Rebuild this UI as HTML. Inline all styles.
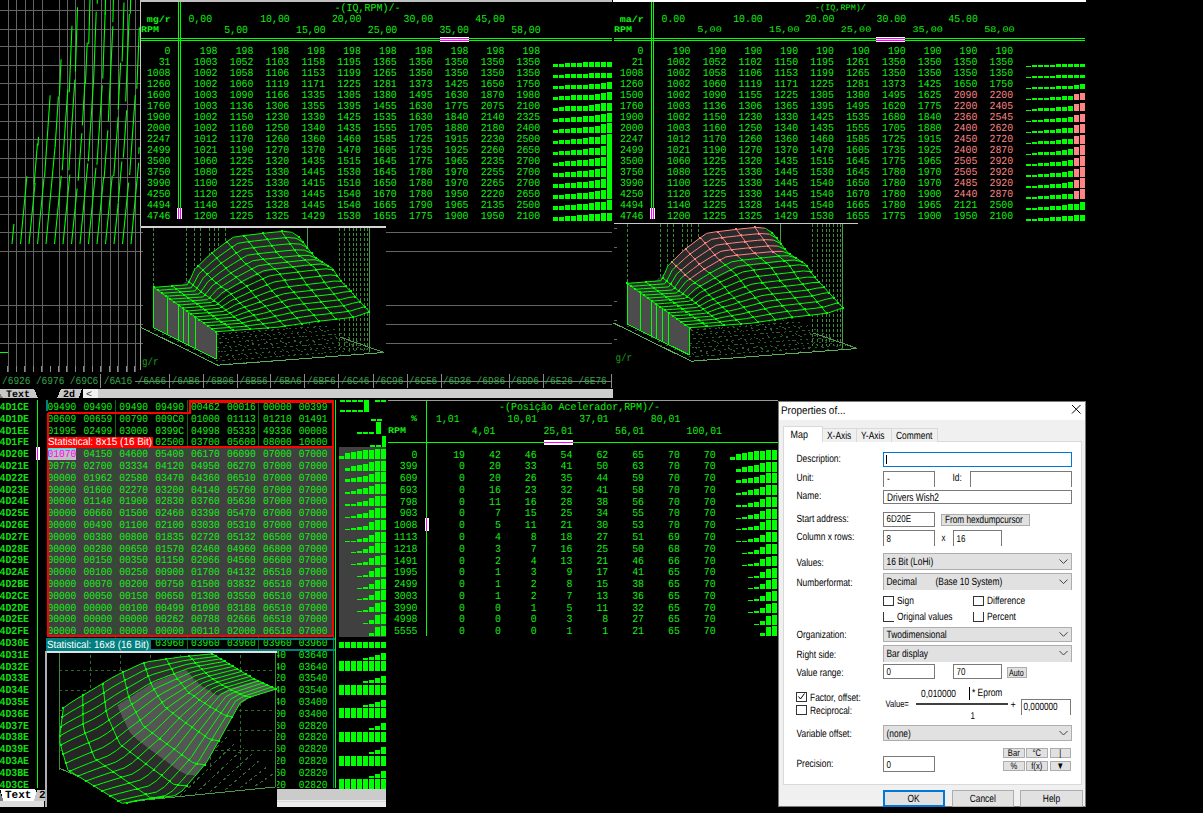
<!DOCTYPE html>
<html><head><meta charset="utf-8"><style>
html,body{margin:0;padding:0;background:#000;width:1203px;height:813px;overflow:hidden}
#root{position:relative;width:1203px;height:813px;overflow:hidden;background:#000}
svg{position:absolute;left:0;top:0}
text.m{font-family:"Liberation Mono",monospace;white-space:pre}
text.s{font-family:"Liberation Sans",sans-serif;white-space:pre}
.d{position:absolute;font-family:"Liberation Sans",sans-serif;font-size:11px;color:#000;white-space:nowrap;line-height:1}
</style></head><body><div id="root">
<svg width="1203" height="813" viewBox="0 0 1203 813" shape-rendering="crispEdges" text-rendering="geometricPrecision">
<line x1="8.5" y1="0" x2="8.5" y2="373" stroke="#646464" stroke-width="1" />
<line x1="16.5" y1="0" x2="16.5" y2="373" stroke="#646464" stroke-width="1" />
<line x1="25.5" y1="0" x2="25.5" y2="373" stroke="#646464" stroke-width="1" />
<line x1="33.5" y1="0" x2="33.5" y2="373" stroke="#646464" stroke-width="1" />
<line x1="42.5" y1="0" x2="42.5" y2="373" stroke="#646464" stroke-width="1" />
<line x1="59.5" y1="0" x2="59.5" y2="373" stroke="#646464" stroke-width="1" />
<line x1="67.5" y1="0" x2="67.5" y2="373" stroke="#646464" stroke-width="1" />
<line x1="75.5" y1="0" x2="75.5" y2="373" stroke="#646464" stroke-width="1" />
<line x1="84.5" y1="0" x2="84.5" y2="373" stroke="#646464" stroke-width="1" />
<line x1="92.5" y1="0" x2="92.5" y2="373" stroke="#646464" stroke-width="1" />
<line x1="101.5" y1="0" x2="101.5" y2="373" stroke="#646464" stroke-width="1" />
<line x1="110.5" y1="0" x2="110.5" y2="373" stroke="#646464" stroke-width="1" />
<line x1="118.5" y1="0" x2="118.5" y2="373" stroke="#646464" stroke-width="1" />
<line x1="127.5" y1="0" x2="127.5" y2="373" stroke="#646464" stroke-width="1" />
<line x1="135.5" y1="0" x2="135.5" y2="373" stroke="#646464" stroke-width="1" />
<line x1="0" y1="10.5" x2="612" y2="10.5" stroke="#646464" stroke-width="1" />
<line x1="0" y1="29.5" x2="612" y2="29.5" stroke="#646464" stroke-width="1" />
<line x1="0" y1="46.5" x2="612" y2="46.5" stroke="#646464" stroke-width="1" />
<line x1="0" y1="65.5" x2="612" y2="65.5" stroke="#646464" stroke-width="1" />
<line x1="0" y1="83.5" x2="612" y2="83.5" stroke="#646464" stroke-width="1" />
<line x1="0" y1="104.5" x2="612" y2="104.5" stroke="#646464" stroke-width="1" />
<line x1="0" y1="121.5" x2="612" y2="121.5" stroke="#646464" stroke-width="1" />
<line x1="0" y1="139.5" x2="612" y2="139.5" stroke="#646464" stroke-width="1" />
<line x1="0" y1="158.5" x2="612" y2="158.5" stroke="#646464" stroke-width="1" />
<line x1="0" y1="177.5" x2="612" y2="177.5" stroke="#646464" stroke-width="1" />
<line x1="0" y1="196.5" x2="612" y2="196.5" stroke="#646464" stroke-width="1" />
<line x1="0" y1="214.5" x2="612" y2="214.5" stroke="#646464" stroke-width="1" />
<line x1="0" y1="232.5" x2="612" y2="232.5" stroke="#646464" stroke-width="1" />
<line x1="0" y1="251.5" x2="612" y2="251.5" stroke="#646464" stroke-width="1" />
<line x1="0" y1="305.5" x2="612" y2="305.5" stroke="#646464" stroke-width="1" />
<line x1="0" y1="324.5" x2="612" y2="324.5" stroke="#646464" stroke-width="1" />
<line x1="0" y1="343.5" x2="612" y2="343.5" stroke="#646464" stroke-width="1" />
<g stroke="#00ff00" stroke-width="1.1" shape-rendering="geometricPrecision">
<line x1="12" y1="244" x2="13.93" y2="224.05"/>
<line x1="20.5" y1="244" x2="26.9" y2="176.27"/>
<line x1="29" y1="244" x2="35.11" y2="182.96"/>
<line x1="34.11" y1="184.5" x2="37.45" y2="143.44"/>
<line x1="37.95" y1="145.65" x2="38.49" y2="136.9"/>
<line x1="37.5" y1="244" x2="44.02" y2="178.24"/>
<line x1="44.52" y1="177.17" x2="50.16" y2="95.3"/>
<line x1="46" y1="244" x2="55.17" y2="145.48"/>
<line x1="55.17" y1="146.15" x2="58.42" y2="96.38"/>
<line x1="59.42" y1="95.51" x2="61.06" y2="59.2"/>
<line x1="54.5" y1="244" x2="61.23" y2="175.82"/>
<line x1="62.23" y1="170.21" x2="67.77" y2="89.62"/>
<line x1="69.27" y1="92.34" x2="71.96" y2="25.71"/>
<line x1="63" y1="244" x2="69.84" y2="174.57"/>
<line x1="68.84" y1="170.23" x2="74.9" y2="79.54"/>
<line x1="75.4" y1="71.57" x2="77.53" y2="7.2"/>
<line x1="71.5" y1="244" x2="77.11" y2="188.47"/>
<line x1="78.11" y1="180.78" x2="81.87" y2="133.13"/>
<line x1="82.37" y1="125.48" x2="84.94" y2="81.77"/>
<line x1="85.44" y1="83.18" x2="87.22" y2="42.45"/>
<line x1="88.72" y1="44.29" x2="90.01" y2="-2"/>
<line x1="80" y1="244" x2="87.79" y2="163.19"/>
<line x1="88.29" y1="161.35" x2="93.5" y2="81.81"/>
<line x1="93.5" y1="83.66" x2="96.23" y2="11.62"/>
<line x1="97.23" y1="3.68" x2="97.35" y2="-2"/>
<line x1="88.5" y1="244" x2="95.91" y2="167.75"/>
<line x1="96.91" y1="164.71" x2="102.23" y2="85.14"/>
<line x1="102.73" y1="78.51" x2="105.19" y2="12.18"/>
<line x1="105.19" y1="14.73" x2="105.56" y2="-2"/>
<line x1="97" y1="244" x2="103.57" y2="177.72"/>
<line x1="104.07" y1="178.5" x2="107.83" y2="130.25"/>
<line x1="108.33" y1="121.36" x2="112.86" y2="26.12"/>
<line x1="112.86" y1="22.16" x2="113.44" y2="-2"/>
<line x1="114.94" y1="0.07" x2="114.98" y2="-2"/>
<line x1="105.5" y1="244" x2="112.26" y2="175.51"/>
<line x1="113.76" y1="175.99" x2="118.19" y2="116.73"/>
<line x1="118.19" y1="109.6" x2="120.64" y2="62.82"/>
<line x1="122.14" y1="61.5" x2="124.03" y2="2.44"/>
<line x1="114" y1="244" x2="118.27" y2="202.84"/>
<line x1="118.27" y1="201.95" x2="121.84" y2="161.44"/>
<line x1="123.34" y1="157.6" x2="126.67" y2="110.19"/>
<line x1="125.67" y1="101.4" x2="129.31" y2="14.09"/>
<line x1="130.31" y1="13.73" x2="130.66" y2="-2"/>
<line x1="122.5" y1="244" x2="128.64" y2="182.63"/>
<line x1="129.64" y1="175.08" x2="135.3" y2="94.91"/>
<line x1="136.8" y1="88.73" x2="139.36" y2="27.36"/>
<line x1="131" y1="244" x2="138.64" y2="162.87"/>
<line x1="138.73" y1="153.68" x2="139.17" y2="147.09"/>
</g>
<line x1="0" y1="352.5" x2="8" y2="352.5" stroke="#00ff00" stroke-width="1" />
<line x1="140.5" y1="0" x2="140.5" y2="370" stroke="#c8c8c8" stroke-width="1" />
<rect x="140" y="0" width="472" height="226" fill="#000000" />
<rect x="612" y="0" width="474" height="226" fill="#000000" />
<line x1="140.5" y1="0" x2="140.5" y2="226" stroke="#c8c8c8" stroke-width="1" />
<rect x="140" y="0" width="472" height="2" fill="#c0c0c0" />
<line x1="178.5" y1="2" x2="178.5" y2="208" stroke="#00ff00" stroke-width="1" />
<line x1="180.5" y1="2" x2="180.5" y2="208" stroke="#00ff00" stroke-width="1" />
<line x1="141" y1="38.5" x2="612" y2="38.5" stroke="#00ff00" stroke-width="1" />
<line x1="141" y1="40.5" x2="612" y2="40.5" stroke="#00ff00" stroke-width="1" />
<text class="m" transform="translate(334.4,10.84) scale(0.9259259259259258,1)" text-anchor="start" font-size="10.8" fill="#12f012" >-(IQ,RPM)/-</text>
<text class="m" transform="translate(170.8,21.5) scale(1.1111111111111112,1)" text-anchor="end" font-size="9" fill="#12f012" font-weight="bold">mg/r</text>
<text class="m" transform="translate(141,32.08) scale(1.1627906976744187,1)" text-anchor="start" font-size="8.6" fill="#12f012" font-weight="bold">RPM</text>
<text class="m" transform="translate(188.5,21.64) scale(0.9104938271604939,1)" text-anchor="start" font-size="10.8" fill="#12f012" >0,00</text>
<text class="m" transform="translate(224.35,32.74) scale(0.9104938271604939,1)" text-anchor="start" font-size="10.8" fill="#12f012" >5,00</text>
<text class="m" transform="translate(260.2,21.64) scale(0.9104938271604939,1)" text-anchor="start" font-size="10.8" fill="#12f012" >10,00</text>
<text class="m" transform="translate(296.05,32.74) scale(0.9104938271604939,1)" text-anchor="start" font-size="10.8" fill="#12f012" >15,00</text>
<text class="m" transform="translate(331.9,21.64) scale(0.9104938271604939,1)" text-anchor="start" font-size="10.8" fill="#12f012" >20,00</text>
<text class="m" transform="translate(367.75,32.74) scale(0.9104938271604939,1)" text-anchor="start" font-size="10.8" fill="#12f012" >25,00</text>
<text class="m" transform="translate(403.6,21.64) scale(0.9104938271604939,1)" text-anchor="start" font-size="10.8" fill="#12f012" >30,00</text>
<text class="m" transform="translate(439.45,32.74) scale(0.9104938271604939,1)" text-anchor="start" font-size="10.8" fill="#12f012" >35,00</text>
<text class="m" transform="translate(475.3,21.64) scale(0.9104938271604939,1)" text-anchor="start" font-size="10.8" fill="#12f012" >45,00</text>
<text class="m" transform="translate(511.15,32.74) scale(0.9104938271604939,1)" text-anchor="start" font-size="10.8" fill="#12f012" >58,00</text>
<text class="m" transform="translate(170.5,54.24) scale(0.9104938271604939,1)" text-anchor="end" font-size="10.8" fill="#12f012" >0</text>
<text class="m" transform="translate(217.5,54.24) scale(0.9104938271604939,1)" text-anchor="end" font-size="10.8" fill="#12f012" >198</text>
<text class="m" transform="translate(253.35,54.24) scale(0.9104938271604939,1)" text-anchor="end" font-size="10.8" fill="#12f012" >198</text>
<text class="m" transform="translate(289.2,54.24) scale(0.9104938271604939,1)" text-anchor="end" font-size="10.8" fill="#12f012" >198</text>
<text class="m" transform="translate(325.05,54.24) scale(0.9104938271604939,1)" text-anchor="end" font-size="10.8" fill="#12f012" >198</text>
<text class="m" transform="translate(360.9,54.24) scale(0.9104938271604939,1)" text-anchor="end" font-size="10.8" fill="#12f012" >198</text>
<text class="m" transform="translate(396.75,54.24) scale(0.9104938271604939,1)" text-anchor="end" font-size="10.8" fill="#12f012" >198</text>
<text class="m" transform="translate(432.6,54.24) scale(0.9104938271604939,1)" text-anchor="end" font-size="10.8" fill="#12f012" >198</text>
<text class="m" transform="translate(468.45,54.24) scale(0.9104938271604939,1)" text-anchor="end" font-size="10.8" fill="#12f012" >198</text>
<text class="m" transform="translate(504.3,54.24) scale(0.9104938271604939,1)" text-anchor="end" font-size="10.8" fill="#12f012" >198</text>
<text class="m" transform="translate(540.15,54.24) scale(0.9104938271604939,1)" text-anchor="end" font-size="10.8" fill="#12f012" >198</text>
<text class="m" transform="translate(170.5,65.24) scale(0.9104938271604939,1)" text-anchor="end" font-size="10.8" fill="#12f012" >31</text>
<text class="m" transform="translate(217.5,65.24) scale(0.9104938271604939,1)" text-anchor="end" font-size="10.8" fill="#12f012" >1003</text>
<text class="m" transform="translate(253.35,65.24) scale(0.9104938271604939,1)" text-anchor="end" font-size="10.8" fill="#12f012" >1052</text>
<text class="m" transform="translate(289.2,65.24) scale(0.9104938271604939,1)" text-anchor="end" font-size="10.8" fill="#12f012" >1103</text>
<text class="m" transform="translate(325.05,65.24) scale(0.9104938271604939,1)" text-anchor="end" font-size="10.8" fill="#12f012" >1158</text>
<text class="m" transform="translate(360.9,65.24) scale(0.9104938271604939,1)" text-anchor="end" font-size="10.8" fill="#12f012" >1195</text>
<text class="m" transform="translate(396.75,65.24) scale(0.9104938271604939,1)" text-anchor="end" font-size="10.8" fill="#12f012" >1365</text>
<text class="m" transform="translate(432.6,65.24) scale(0.9104938271604939,1)" text-anchor="end" font-size="10.8" fill="#12f012" >1350</text>
<text class="m" transform="translate(468.45,65.24) scale(0.9104938271604939,1)" text-anchor="end" font-size="10.8" fill="#12f012" >1350</text>
<text class="m" transform="translate(504.3,65.24) scale(0.9104938271604939,1)" text-anchor="end" font-size="10.8" fill="#12f012" >1350</text>
<text class="m" transform="translate(540.15,65.24) scale(0.9104938271604939,1)" text-anchor="end" font-size="10.8" fill="#12f012" >1350</text>
<rect x="553" y="64" width="5" height="3" fill="#00ff00" />
<rect x="559" y="64" width="5" height="3" fill="#00ff00" />
<rect x="565" y="63" width="5" height="4" fill="#00ff00" />
<rect x="571" y="63" width="5" height="4" fill="#00ff00" />
<rect x="577" y="63" width="5" height="4" fill="#00ff00" />
<rect x="583" y="62" width="5" height="5" fill="#00ff00" />
<rect x="589" y="62" width="5" height="5" fill="#00ff00" />
<rect x="595" y="62" width="5" height="5" fill="#00ff00" />
<rect x="601" y="62" width="5" height="5" fill="#00ff00" />
<rect x="607" y="62" width="5" height="5" fill="#00ff00" />
<text class="m" transform="translate(170.5,76.24) scale(0.9104938271604939,1)" text-anchor="end" font-size="10.8" fill="#12f012" >1008</text>
<text class="m" transform="translate(217.5,76.24) scale(0.9104938271604939,1)" text-anchor="end" font-size="10.8" fill="#12f012" >1002</text>
<text class="m" transform="translate(253.35,76.24) scale(0.9104938271604939,1)" text-anchor="end" font-size="10.8" fill="#12f012" >1058</text>
<text class="m" transform="translate(289.2,76.24) scale(0.9104938271604939,1)" text-anchor="end" font-size="10.8" fill="#12f012" >1106</text>
<text class="m" transform="translate(325.05,76.24) scale(0.9104938271604939,1)" text-anchor="end" font-size="10.8" fill="#12f012" >1153</text>
<text class="m" transform="translate(360.9,76.24) scale(0.9104938271604939,1)" text-anchor="end" font-size="10.8" fill="#12f012" >1199</text>
<text class="m" transform="translate(396.75,76.24) scale(0.9104938271604939,1)" text-anchor="end" font-size="10.8" fill="#12f012" >1265</text>
<text class="m" transform="translate(432.6,76.24) scale(0.9104938271604939,1)" text-anchor="end" font-size="10.8" fill="#12f012" >1350</text>
<text class="m" transform="translate(468.45,76.24) scale(0.9104938271604939,1)" text-anchor="end" font-size="10.8" fill="#12f012" >1350</text>
<text class="m" transform="translate(504.3,76.24) scale(0.9104938271604939,1)" text-anchor="end" font-size="10.8" fill="#12f012" >1350</text>
<text class="m" transform="translate(540.15,76.24) scale(0.9104938271604939,1)" text-anchor="end" font-size="10.8" fill="#12f012" >1350</text>
<rect x="553" y="75" width="5" height="3" fill="#00ff00" />
<rect x="559" y="75" width="5" height="3" fill="#00ff00" />
<rect x="565" y="74" width="5" height="4" fill="#00ff00" />
<rect x="571" y="74" width="5" height="4" fill="#00ff00" />
<rect x="577" y="74" width="5" height="4" fill="#00ff00" />
<rect x="583" y="74" width="5" height="4" fill="#00ff00" />
<rect x="589" y="73" width="5" height="5" fill="#00ff00" />
<rect x="595" y="73" width="5" height="5" fill="#00ff00" />
<rect x="601" y="73" width="5" height="5" fill="#00ff00" />
<rect x="607" y="73" width="5" height="5" fill="#00ff00" />
<text class="m" transform="translate(170.5,87.24) scale(0.9104938271604939,1)" text-anchor="end" font-size="10.8" fill="#12f012" >1260</text>
<text class="m" transform="translate(217.5,87.24) scale(0.9104938271604939,1)" text-anchor="end" font-size="10.8" fill="#12f012" >1002</text>
<text class="m" transform="translate(253.35,87.24) scale(0.9104938271604939,1)" text-anchor="end" font-size="10.8" fill="#12f012" >1060</text>
<text class="m" transform="translate(289.2,87.24) scale(0.9104938271604939,1)" text-anchor="end" font-size="10.8" fill="#12f012" >1119</text>
<text class="m" transform="translate(325.05,87.24) scale(0.9104938271604939,1)" text-anchor="end" font-size="10.8" fill="#12f012" >1171</text>
<text class="m" transform="translate(360.9,87.24) scale(0.9104938271604939,1)" text-anchor="end" font-size="10.8" fill="#12f012" >1225</text>
<text class="m" transform="translate(396.75,87.24) scale(0.9104938271604939,1)" text-anchor="end" font-size="10.8" fill="#12f012" >1281</text>
<text class="m" transform="translate(432.6,87.24) scale(0.9104938271604939,1)" text-anchor="end" font-size="10.8" fill="#12f012" >1373</text>
<text class="m" transform="translate(468.45,87.24) scale(0.9104938271604939,1)" text-anchor="end" font-size="10.8" fill="#12f012" >1425</text>
<text class="m" transform="translate(504.3,87.24) scale(0.9104938271604939,1)" text-anchor="end" font-size="10.8" fill="#12f012" >1650</text>
<text class="m" transform="translate(540.15,87.24) scale(0.9104938271604939,1)" text-anchor="end" font-size="10.8" fill="#12f012" >1750</text>
<rect x="553" y="86" width="5" height="3" fill="#00ff00" />
<rect x="559" y="86" width="5" height="3" fill="#00ff00" />
<rect x="565" y="85" width="5" height="4" fill="#00ff00" />
<rect x="571" y="85" width="5" height="4" fill="#00ff00" />
<rect x="577" y="85" width="5" height="4" fill="#00ff00" />
<rect x="583" y="85" width="5" height="4" fill="#00ff00" />
<rect x="589" y="84" width="5" height="5" fill="#00ff00" />
<rect x="595" y="84" width="5" height="5" fill="#00ff00" />
<rect x="601" y="83" width="5" height="6" fill="#00ff00" />
<rect x="607" y="82" width="5" height="7" fill="#00ff00" />
<text class="m" transform="translate(170.5,98.24) scale(0.9104938271604939,1)" text-anchor="end" font-size="10.8" fill="#12f012" >1600</text>
<text class="m" transform="translate(217.5,98.24) scale(0.9104938271604939,1)" text-anchor="end" font-size="10.8" fill="#12f012" >1003</text>
<text class="m" transform="translate(253.35,98.24) scale(0.9104938271604939,1)" text-anchor="end" font-size="10.8" fill="#12f012" >1090</text>
<text class="m" transform="translate(289.2,98.24) scale(0.9104938271604939,1)" text-anchor="end" font-size="10.8" fill="#12f012" >1166</text>
<text class="m" transform="translate(325.05,98.24) scale(0.9104938271604939,1)" text-anchor="end" font-size="10.8" fill="#12f012" >1335</text>
<text class="m" transform="translate(360.9,98.24) scale(0.9104938271604939,1)" text-anchor="end" font-size="10.8" fill="#12f012" >1305</text>
<text class="m" transform="translate(396.75,98.24) scale(0.9104938271604939,1)" text-anchor="end" font-size="10.8" fill="#12f012" >1380</text>
<text class="m" transform="translate(432.6,98.24) scale(0.9104938271604939,1)" text-anchor="end" font-size="10.8" fill="#12f012" >1495</text>
<text class="m" transform="translate(468.45,98.24) scale(0.9104938271604939,1)" text-anchor="end" font-size="10.8" fill="#12f012" >1630</text>
<text class="m" transform="translate(504.3,98.24) scale(0.9104938271604939,1)" text-anchor="end" font-size="10.8" fill="#12f012" >1870</text>
<text class="m" transform="translate(540.15,98.24) scale(0.9104938271604939,1)" text-anchor="end" font-size="10.8" fill="#12f012" >1980</text>
<rect x="553" y="97" width="5" height="3" fill="#00ff00" />
<rect x="559" y="96" width="5" height="4" fill="#00ff00" />
<rect x="565" y="96" width="5" height="4" fill="#00ff00" />
<rect x="571" y="95" width="5" height="5" fill="#00ff00" />
<rect x="577" y="95" width="5" height="5" fill="#00ff00" />
<rect x="583" y="95" width="5" height="5" fill="#00ff00" />
<rect x="589" y="95" width="5" height="5" fill="#00ff00" />
<rect x="595" y="94" width="5" height="6" fill="#00ff00" />
<rect x="601" y="93" width="5" height="7" fill="#00ff00" />
<rect x="607" y="92" width="5" height="8" fill="#00ff00" />
<text class="m" transform="translate(170.5,109.24) scale(0.9104938271604939,1)" text-anchor="end" font-size="10.8" fill="#12f012" >1760</text>
<text class="m" transform="translate(217.5,109.24) scale(0.9104938271604939,1)" text-anchor="end" font-size="10.8" fill="#12f012" >1003</text>
<text class="m" transform="translate(253.35,109.24) scale(0.9104938271604939,1)" text-anchor="end" font-size="10.8" fill="#12f012" >1136</text>
<text class="m" transform="translate(289.2,109.24) scale(0.9104938271604939,1)" text-anchor="end" font-size="10.8" fill="#12f012" >1306</text>
<text class="m" transform="translate(325.05,109.24) scale(0.9104938271604939,1)" text-anchor="end" font-size="10.8" fill="#12f012" >1355</text>
<text class="m" transform="translate(360.9,109.24) scale(0.9104938271604939,1)" text-anchor="end" font-size="10.8" fill="#12f012" >1395</text>
<text class="m" transform="translate(396.75,109.24) scale(0.9104938271604939,1)" text-anchor="end" font-size="10.8" fill="#12f012" >1455</text>
<text class="m" transform="translate(432.6,109.24) scale(0.9104938271604939,1)" text-anchor="end" font-size="10.8" fill="#12f012" >1630</text>
<text class="m" transform="translate(468.45,109.24) scale(0.9104938271604939,1)" text-anchor="end" font-size="10.8" fill="#12f012" >1775</text>
<text class="m" transform="translate(504.3,109.24) scale(0.9104938271604939,1)" text-anchor="end" font-size="10.8" fill="#12f012" >2075</text>
<text class="m" transform="translate(540.15,109.24) scale(0.9104938271604939,1)" text-anchor="end" font-size="10.8" fill="#12f012" >2100</text>
<rect x="553" y="108" width="5" height="3" fill="#00ff00" />
<rect x="559" y="107" width="5" height="4" fill="#00ff00" />
<rect x="565" y="106" width="5" height="5" fill="#00ff00" />
<rect x="571" y="106" width="5" height="5" fill="#00ff00" />
<rect x="577" y="106" width="5" height="5" fill="#00ff00" />
<rect x="583" y="106" width="5" height="5" fill="#00ff00" />
<rect x="589" y="105" width="5" height="6" fill="#00ff00" />
<rect x="595" y="104" width="5" height="7" fill="#00ff00" />
<rect x="601" y="103" width="5" height="8" fill="#00ff00" />
<rect x="607" y="103" width="5" height="8" fill="#00ff00" />
<text class="m" transform="translate(170.5,120.24) scale(0.9104938271604939,1)" text-anchor="end" font-size="10.8" fill="#12f012" >1900</text>
<text class="m" transform="translate(217.5,120.24) scale(0.9104938271604939,1)" text-anchor="end" font-size="10.8" fill="#12f012" >1002</text>
<text class="m" transform="translate(253.35,120.24) scale(0.9104938271604939,1)" text-anchor="end" font-size="10.8" fill="#12f012" >1150</text>
<text class="m" transform="translate(289.2,120.24) scale(0.9104938271604939,1)" text-anchor="end" font-size="10.8" fill="#12f012" >1230</text>
<text class="m" transform="translate(325.05,120.24) scale(0.9104938271604939,1)" text-anchor="end" font-size="10.8" fill="#12f012" >1330</text>
<text class="m" transform="translate(360.9,120.24) scale(0.9104938271604939,1)" text-anchor="end" font-size="10.8" fill="#12f012" >1425</text>
<text class="m" transform="translate(396.75,120.24) scale(0.9104938271604939,1)" text-anchor="end" font-size="10.8" fill="#12f012" >1535</text>
<text class="m" transform="translate(432.6,120.24) scale(0.9104938271604939,1)" text-anchor="end" font-size="10.8" fill="#12f012" >1630</text>
<text class="m" transform="translate(468.45,120.24) scale(0.9104938271604939,1)" text-anchor="end" font-size="10.8" fill="#12f012" >1840</text>
<text class="m" transform="translate(504.3,120.24) scale(0.9104938271604939,1)" text-anchor="end" font-size="10.8" fill="#12f012" >2140</text>
<text class="m" transform="translate(540.15,120.24) scale(0.9104938271604939,1)" text-anchor="end" font-size="10.8" fill="#12f012" >2325</text>
<rect x="553" y="119" width="5" height="3" fill="#00ff00" />
<rect x="559" y="118" width="5" height="4" fill="#00ff00" />
<rect x="565" y="118" width="5" height="4" fill="#00ff00" />
<rect x="571" y="117" width="5" height="5" fill="#00ff00" />
<rect x="577" y="117" width="5" height="5" fill="#00ff00" />
<rect x="583" y="116" width="5" height="6" fill="#00ff00" />
<rect x="589" y="116" width="5" height="6" fill="#00ff00" />
<rect x="595" y="115" width="5" height="7" fill="#00ff00" />
<rect x="601" y="114" width="5" height="8" fill="#00ff00" />
<rect x="607" y="113" width="5" height="9" fill="#00ff00" />
<text class="m" transform="translate(170.5,131.24) scale(0.9104938271604939,1)" text-anchor="end" font-size="10.8" fill="#12f012" >2000</text>
<text class="m" transform="translate(217.5,131.24) scale(0.9104938271604939,1)" text-anchor="end" font-size="10.8" fill="#12f012" >1002</text>
<text class="m" transform="translate(253.35,131.24) scale(0.9104938271604939,1)" text-anchor="end" font-size="10.8" fill="#12f012" >1160</text>
<text class="m" transform="translate(289.2,131.24) scale(0.9104938271604939,1)" text-anchor="end" font-size="10.8" fill="#12f012" >1250</text>
<text class="m" transform="translate(325.05,131.24) scale(0.9104938271604939,1)" text-anchor="end" font-size="10.8" fill="#12f012" >1340</text>
<text class="m" transform="translate(360.9,131.24) scale(0.9104938271604939,1)" text-anchor="end" font-size="10.8" fill="#12f012" >1435</text>
<text class="m" transform="translate(396.75,131.24) scale(0.9104938271604939,1)" text-anchor="end" font-size="10.8" fill="#12f012" >1555</text>
<text class="m" transform="translate(432.6,131.24) scale(0.9104938271604939,1)" text-anchor="end" font-size="10.8" fill="#12f012" >1705</text>
<text class="m" transform="translate(468.45,131.24) scale(0.9104938271604939,1)" text-anchor="end" font-size="10.8" fill="#12f012" >1880</text>
<text class="m" transform="translate(504.3,131.24) scale(0.9104938271604939,1)" text-anchor="end" font-size="10.8" fill="#12f012" >2180</text>
<text class="m" transform="translate(540.15,131.24) scale(0.9104938271604939,1)" text-anchor="end" font-size="10.8" fill="#12f012" >2400</text>
<rect x="553" y="130" width="5" height="3" fill="#00ff00" />
<rect x="559" y="129" width="5" height="4" fill="#00ff00" />
<rect x="565" y="129" width="5" height="4" fill="#00ff00" />
<rect x="571" y="128" width="5" height="5" fill="#00ff00" />
<rect x="577" y="128" width="5" height="5" fill="#00ff00" />
<rect x="583" y="127" width="5" height="6" fill="#00ff00" />
<rect x="589" y="127" width="5" height="6" fill="#00ff00" />
<rect x="595" y="126" width="5" height="7" fill="#00ff00" />
<rect x="601" y="124" width="5" height="9" fill="#00ff00" />
<rect x="607" y="123" width="5" height="10" fill="#00ff00" />
<text class="m" transform="translate(170.5,142.24) scale(0.9104938271604939,1)" text-anchor="end" font-size="10.8" fill="#12f012" >2247</text>
<text class="m" transform="translate(217.5,142.24) scale(0.9104938271604939,1)" text-anchor="end" font-size="10.8" fill="#12f012" >1012</text>
<text class="m" transform="translate(253.35,142.24) scale(0.9104938271604939,1)" text-anchor="end" font-size="10.8" fill="#12f012" >1170</text>
<text class="m" transform="translate(289.2,142.24) scale(0.9104938271604939,1)" text-anchor="end" font-size="10.8" fill="#12f012" >1260</text>
<text class="m" transform="translate(325.05,142.24) scale(0.9104938271604939,1)" text-anchor="end" font-size="10.8" fill="#12f012" >1360</text>
<text class="m" transform="translate(360.9,142.24) scale(0.9104938271604939,1)" text-anchor="end" font-size="10.8" fill="#12f012" >1460</text>
<text class="m" transform="translate(396.75,142.24) scale(0.9104938271604939,1)" text-anchor="end" font-size="10.8" fill="#12f012" >1585</text>
<text class="m" transform="translate(432.6,142.24) scale(0.9104938271604939,1)" text-anchor="end" font-size="10.8" fill="#12f012" >1725</text>
<text class="m" transform="translate(468.45,142.24) scale(0.9104938271604939,1)" text-anchor="end" font-size="10.8" fill="#12f012" >1915</text>
<text class="m" transform="translate(504.3,142.24) scale(0.9104938271604939,1)" text-anchor="end" font-size="10.8" fill="#12f012" >2230</text>
<text class="m" transform="translate(540.15,142.24) scale(0.9104938271604939,1)" text-anchor="end" font-size="10.8" fill="#12f012" >2500</text>
<rect x="553" y="141" width="5" height="3" fill="#00ff00" />
<rect x="559" y="140" width="5" height="4" fill="#00ff00" />
<rect x="565" y="140" width="5" height="4" fill="#00ff00" />
<rect x="571" y="139" width="5" height="5" fill="#00ff00" />
<rect x="577" y="139" width="5" height="5" fill="#00ff00" />
<rect x="583" y="138" width="5" height="6" fill="#00ff00" />
<rect x="589" y="137" width="5" height="7" fill="#00ff00" />
<rect x="595" y="137" width="5" height="7" fill="#00ff00" />
<rect x="601" y="135" width="5" height="9" fill="#00ff00" />
<rect x="607" y="134" width="5" height="10" fill="#00ff00" />
<text class="m" transform="translate(170.5,153.24) scale(0.9104938271604939,1)" text-anchor="end" font-size="10.8" fill="#12f012" >2499</text>
<text class="m" transform="translate(217.5,153.24) scale(0.9104938271604939,1)" text-anchor="end" font-size="10.8" fill="#12f012" >1021</text>
<text class="m" transform="translate(253.35,153.24) scale(0.9104938271604939,1)" text-anchor="end" font-size="10.8" fill="#12f012" >1190</text>
<text class="m" transform="translate(289.2,153.24) scale(0.9104938271604939,1)" text-anchor="end" font-size="10.8" fill="#12f012" >1270</text>
<text class="m" transform="translate(325.05,153.24) scale(0.9104938271604939,1)" text-anchor="end" font-size="10.8" fill="#12f012" >1370</text>
<text class="m" transform="translate(360.9,153.24) scale(0.9104938271604939,1)" text-anchor="end" font-size="10.8" fill="#12f012" >1470</text>
<text class="m" transform="translate(396.75,153.24) scale(0.9104938271604939,1)" text-anchor="end" font-size="10.8" fill="#12f012" >1605</text>
<text class="m" transform="translate(432.6,153.24) scale(0.9104938271604939,1)" text-anchor="end" font-size="10.8" fill="#12f012" >1735</text>
<text class="m" transform="translate(468.45,153.24) scale(0.9104938271604939,1)" text-anchor="end" font-size="10.8" fill="#12f012" >1925</text>
<text class="m" transform="translate(504.3,153.24) scale(0.9104938271604939,1)" text-anchor="end" font-size="10.8" fill="#12f012" >2260</text>
<text class="m" transform="translate(540.15,153.24) scale(0.9104938271604939,1)" text-anchor="end" font-size="10.8" fill="#12f012" >2650</text>
<rect x="553" y="152" width="5" height="3" fill="#00ff00" />
<rect x="559" y="151" width="5" height="4" fill="#00ff00" />
<rect x="565" y="151" width="5" height="4" fill="#00ff00" />
<rect x="571" y="150" width="5" height="5" fill="#00ff00" />
<rect x="577" y="150" width="5" height="5" fill="#00ff00" />
<rect x="583" y="149" width="5" height="6" fill="#00ff00" />
<rect x="589" y="148" width="5" height="7" fill="#00ff00" />
<rect x="595" y="148" width="5" height="7" fill="#00ff00" />
<rect x="601" y="146" width="5" height="9" fill="#00ff00" />
<rect x="607" y="144" width="5" height="11" fill="#00ff00" />
<text class="m" transform="translate(170.5,164.24) scale(0.9104938271604939,1)" text-anchor="end" font-size="10.8" fill="#12f012" >3500</text>
<text class="m" transform="translate(217.5,164.24) scale(0.9104938271604939,1)" text-anchor="end" font-size="10.8" fill="#12f012" >1060</text>
<text class="m" transform="translate(253.35,164.24) scale(0.9104938271604939,1)" text-anchor="end" font-size="10.8" fill="#12f012" >1225</text>
<text class="m" transform="translate(289.2,164.24) scale(0.9104938271604939,1)" text-anchor="end" font-size="10.8" fill="#12f012" >1320</text>
<text class="m" transform="translate(325.05,164.24) scale(0.9104938271604939,1)" text-anchor="end" font-size="10.8" fill="#12f012" >1435</text>
<text class="m" transform="translate(360.9,164.24) scale(0.9104938271604939,1)" text-anchor="end" font-size="10.8" fill="#12f012" >1515</text>
<text class="m" transform="translate(396.75,164.24) scale(0.9104938271604939,1)" text-anchor="end" font-size="10.8" fill="#12f012" >1645</text>
<text class="m" transform="translate(432.6,164.24) scale(0.9104938271604939,1)" text-anchor="end" font-size="10.8" fill="#12f012" >1775</text>
<text class="m" transform="translate(468.45,164.24) scale(0.9104938271604939,1)" text-anchor="end" font-size="10.8" fill="#12f012" >1965</text>
<text class="m" transform="translate(504.3,164.24) scale(0.9104938271604939,1)" text-anchor="end" font-size="10.8" fill="#12f012" >2235</text>
<text class="m" transform="translate(540.15,164.24) scale(0.9104938271604939,1)" text-anchor="end" font-size="10.8" fill="#12f012" >2700</text>
<rect x="553" y="163" width="5" height="3" fill="#00ff00" />
<rect x="559" y="162" width="5" height="4" fill="#00ff00" />
<rect x="565" y="161" width="5" height="5" fill="#00ff00" />
<rect x="571" y="161" width="5" height="5" fill="#00ff00" />
<rect x="577" y="160" width="5" height="6" fill="#00ff00" />
<rect x="583" y="160" width="5" height="6" fill="#00ff00" />
<rect x="589" y="159" width="5" height="7" fill="#00ff00" />
<rect x="595" y="158" width="5" height="8" fill="#00ff00" />
<rect x="601" y="157" width="5" height="9" fill="#00ff00" />
<rect x="607" y="155" width="5" height="11" fill="#00ff00" />
<text class="m" transform="translate(170.5,175.24) scale(0.9104938271604939,1)" text-anchor="end" font-size="10.8" fill="#12f012" >3750</text>
<text class="m" transform="translate(217.5,175.24) scale(0.9104938271604939,1)" text-anchor="end" font-size="10.8" fill="#12f012" >1080</text>
<text class="m" transform="translate(253.35,175.24) scale(0.9104938271604939,1)" text-anchor="end" font-size="10.8" fill="#12f012" >1225</text>
<text class="m" transform="translate(289.2,175.24) scale(0.9104938271604939,1)" text-anchor="end" font-size="10.8" fill="#12f012" >1330</text>
<text class="m" transform="translate(325.05,175.24) scale(0.9104938271604939,1)" text-anchor="end" font-size="10.8" fill="#12f012" >1445</text>
<text class="m" transform="translate(360.9,175.24) scale(0.9104938271604939,1)" text-anchor="end" font-size="10.8" fill="#12f012" >1530</text>
<text class="m" transform="translate(396.75,175.24) scale(0.9104938271604939,1)" text-anchor="end" font-size="10.8" fill="#12f012" >1645</text>
<text class="m" transform="translate(432.6,175.24) scale(0.9104938271604939,1)" text-anchor="end" font-size="10.8" fill="#12f012" >1780</text>
<text class="m" transform="translate(468.45,175.24) scale(0.9104938271604939,1)" text-anchor="end" font-size="10.8" fill="#12f012" >1970</text>
<text class="m" transform="translate(504.3,175.24) scale(0.9104938271604939,1)" text-anchor="end" font-size="10.8" fill="#12f012" >2255</text>
<text class="m" transform="translate(540.15,175.24) scale(0.9104938271604939,1)" text-anchor="end" font-size="10.8" fill="#12f012" >2700</text>
<rect x="553" y="173" width="5" height="4" fill="#00ff00" />
<rect x="559" y="173" width="5" height="4" fill="#00ff00" />
<rect x="565" y="172" width="5" height="5" fill="#00ff00" />
<rect x="571" y="172" width="5" height="5" fill="#00ff00" />
<rect x="577" y="171" width="5" height="6" fill="#00ff00" />
<rect x="583" y="171" width="5" height="6" fill="#00ff00" />
<rect x="589" y="170" width="5" height="7" fill="#00ff00" />
<rect x="595" y="169" width="5" height="8" fill="#00ff00" />
<rect x="601" y="168" width="5" height="9" fill="#00ff00" />
<rect x="607" y="166" width="5" height="11" fill="#00ff00" />
<text class="m" transform="translate(170.5,186.24) scale(0.9104938271604939,1)" text-anchor="end" font-size="10.8" fill="#12f012" >3990</text>
<text class="m" transform="translate(217.5,186.24) scale(0.9104938271604939,1)" text-anchor="end" font-size="10.8" fill="#12f012" >1100</text>
<text class="m" transform="translate(253.35,186.24) scale(0.9104938271604939,1)" text-anchor="end" font-size="10.8" fill="#12f012" >1225</text>
<text class="m" transform="translate(289.2,186.24) scale(0.9104938271604939,1)" text-anchor="end" font-size="10.8" fill="#12f012" >1330</text>
<text class="m" transform="translate(325.05,186.24) scale(0.9104938271604939,1)" text-anchor="end" font-size="10.8" fill="#12f012" >1415</text>
<text class="m" transform="translate(360.9,186.24) scale(0.9104938271604939,1)" text-anchor="end" font-size="10.8" fill="#12f012" >1510</text>
<text class="m" transform="translate(396.75,186.24) scale(0.9104938271604939,1)" text-anchor="end" font-size="10.8" fill="#12f012" >1650</text>
<text class="m" transform="translate(432.6,186.24) scale(0.9104938271604939,1)" text-anchor="end" font-size="10.8" fill="#12f012" >1780</text>
<text class="m" transform="translate(468.45,186.24) scale(0.9104938271604939,1)" text-anchor="end" font-size="10.8" fill="#12f012" >1970</text>
<text class="m" transform="translate(504.3,186.24) scale(0.9104938271604939,1)" text-anchor="end" font-size="10.8" fill="#12f012" >2265</text>
<text class="m" transform="translate(540.15,186.24) scale(0.9104938271604939,1)" text-anchor="end" font-size="10.8" fill="#12f012" >2700</text>
<rect x="553" y="184" width="5" height="4" fill="#00ff00" />
<rect x="559" y="184" width="5" height="4" fill="#00ff00" />
<rect x="565" y="183" width="5" height="5" fill="#00ff00" />
<rect x="571" y="183" width="5" height="5" fill="#00ff00" />
<rect x="577" y="182" width="5" height="6" fill="#00ff00" />
<rect x="583" y="182" width="5" height="6" fill="#00ff00" />
<rect x="589" y="181" width="5" height="7" fill="#00ff00" />
<rect x="595" y="180" width="5" height="8" fill="#00ff00" />
<rect x="601" y="179" width="5" height="9" fill="#00ff00" />
<rect x="607" y="177" width="5" height="11" fill="#00ff00" />
<text class="m" transform="translate(170.5,197.24) scale(0.9104938271604939,1)" text-anchor="end" font-size="10.8" fill="#12f012" >4250</text>
<text class="m" transform="translate(217.5,197.24) scale(0.9104938271604939,1)" text-anchor="end" font-size="10.8" fill="#12f012" >1120</text>
<text class="m" transform="translate(253.35,197.24) scale(0.9104938271604939,1)" text-anchor="end" font-size="10.8" fill="#12f012" >1225</text>
<text class="m" transform="translate(289.2,197.24) scale(0.9104938271604939,1)" text-anchor="end" font-size="10.8" fill="#12f012" >1330</text>
<text class="m" transform="translate(325.05,197.24) scale(0.9104938271604939,1)" text-anchor="end" font-size="10.8" fill="#12f012" >1445</text>
<text class="m" transform="translate(360.9,197.24) scale(0.9104938271604939,1)" text-anchor="end" font-size="10.8" fill="#12f012" >1540</text>
<text class="m" transform="translate(396.75,197.24) scale(0.9104938271604939,1)" text-anchor="end" font-size="10.8" fill="#12f012" >1670</text>
<text class="m" transform="translate(432.6,197.24) scale(0.9104938271604939,1)" text-anchor="end" font-size="10.8" fill="#12f012" >1780</text>
<text class="m" transform="translate(468.45,197.24) scale(0.9104938271604939,1)" text-anchor="end" font-size="10.8" fill="#12f012" >1950</text>
<text class="m" transform="translate(504.3,197.24) scale(0.9104938271604939,1)" text-anchor="end" font-size="10.8" fill="#12f012" >2220</text>
<text class="m" transform="translate(540.15,197.24) scale(0.9104938271604939,1)" text-anchor="end" font-size="10.8" fill="#12f012" >2650</text>
<rect x="553" y="195" width="5" height="4" fill="#00ff00" />
<rect x="559" y="195" width="5" height="4" fill="#00ff00" />
<rect x="565" y="194" width="5" height="5" fill="#00ff00" />
<rect x="571" y="194" width="5" height="5" fill="#00ff00" />
<rect x="577" y="193" width="5" height="6" fill="#00ff00" />
<rect x="583" y="193" width="5" height="6" fill="#00ff00" />
<rect x="589" y="192" width="5" height="7" fill="#00ff00" />
<rect x="595" y="191" width="5" height="8" fill="#00ff00" />
<rect x="601" y="190" width="5" height="9" fill="#00ff00" />
<rect x="607" y="188" width="5" height="11" fill="#00ff00" />
<text class="m" transform="translate(170.5,208.24) scale(0.9104938271604939,1)" text-anchor="end" font-size="10.8" fill="#12f012" >4494</text>
<text class="m" transform="translate(217.5,208.24) scale(0.9104938271604939,1)" text-anchor="end" font-size="10.8" fill="#12f012" >1140</text>
<text class="m" transform="translate(253.35,208.24) scale(0.9104938271604939,1)" text-anchor="end" font-size="10.8" fill="#12f012" >1225</text>
<text class="m" transform="translate(289.2,208.24) scale(0.9104938271604939,1)" text-anchor="end" font-size="10.8" fill="#12f012" >1328</text>
<text class="m" transform="translate(325.05,208.24) scale(0.9104938271604939,1)" text-anchor="end" font-size="10.8" fill="#12f012" >1445</text>
<text class="m" transform="translate(360.9,208.24) scale(0.9104938271604939,1)" text-anchor="end" font-size="10.8" fill="#12f012" >1540</text>
<text class="m" transform="translate(396.75,208.24) scale(0.9104938271604939,1)" text-anchor="end" font-size="10.8" fill="#12f012" >1665</text>
<text class="m" transform="translate(432.6,208.24) scale(0.9104938271604939,1)" text-anchor="end" font-size="10.8" fill="#12f012" >1790</text>
<text class="m" transform="translate(468.45,208.24) scale(0.9104938271604939,1)" text-anchor="end" font-size="10.8" fill="#12f012" >1965</text>
<text class="m" transform="translate(504.3,208.24) scale(0.9104938271604939,1)" text-anchor="end" font-size="10.8" fill="#12f012" >2135</text>
<text class="m" transform="translate(540.15,208.24) scale(0.9104938271604939,1)" text-anchor="end" font-size="10.8" fill="#12f012" >2500</text>
<rect x="553" y="206" width="5" height="4" fill="#00ff00" />
<rect x="559" y="206" width="5" height="4" fill="#00ff00" />
<rect x="565" y="205" width="5" height="5" fill="#00ff00" />
<rect x="571" y="205" width="5" height="5" fill="#00ff00" />
<rect x="577" y="204" width="5" height="6" fill="#00ff00" />
<rect x="583" y="204" width="5" height="6" fill="#00ff00" />
<rect x="589" y="203" width="5" height="7" fill="#00ff00" />
<rect x="595" y="202" width="5" height="8" fill="#00ff00" />
<rect x="601" y="202" width="5" height="8" fill="#00ff00" />
<rect x="607" y="200" width="5" height="10" fill="#00ff00" />
<text class="m" transform="translate(170.5,219.24) scale(0.9104938271604939,1)" text-anchor="end" font-size="10.8" fill="#12f012" >4746</text>
<text class="m" transform="translate(217.5,219.24) scale(0.9104938271604939,1)" text-anchor="end" font-size="10.8" fill="#12f012" >1200</text>
<text class="m" transform="translate(253.35,219.24) scale(0.9104938271604939,1)" text-anchor="end" font-size="10.8" fill="#12f012" >1225</text>
<text class="m" transform="translate(289.2,219.24) scale(0.9104938271604939,1)" text-anchor="end" font-size="10.8" fill="#12f012" >1325</text>
<text class="m" transform="translate(325.05,219.24) scale(0.9104938271604939,1)" text-anchor="end" font-size="10.8" fill="#12f012" >1429</text>
<text class="m" transform="translate(360.9,219.24) scale(0.9104938271604939,1)" text-anchor="end" font-size="10.8" fill="#12f012" >1530</text>
<text class="m" transform="translate(396.75,219.24) scale(0.9104938271604939,1)" text-anchor="end" font-size="10.8" fill="#12f012" >1655</text>
<text class="m" transform="translate(432.6,219.24) scale(0.9104938271604939,1)" text-anchor="end" font-size="10.8" fill="#12f012" >1775</text>
<text class="m" transform="translate(468.45,219.24) scale(0.9104938271604939,1)" text-anchor="end" font-size="10.8" fill="#12f012" >1900</text>
<text class="m" transform="translate(504.3,219.24) scale(0.9104938271604939,1)" text-anchor="end" font-size="10.8" fill="#12f012" >1950</text>
<text class="m" transform="translate(540.15,219.24) scale(0.9104938271604939,1)" text-anchor="end" font-size="10.8" fill="#12f012" >2100</text>
<rect x="553" y="217" width="5" height="4" fill="#00ff00" />
<rect x="559" y="217" width="5" height="4" fill="#00ff00" />
<rect x="565" y="216" width="5" height="5" fill="#00ff00" />
<rect x="571" y="216" width="5" height="5" fill="#00ff00" />
<rect x="577" y="215" width="5" height="6" fill="#00ff00" />
<rect x="583" y="215" width="5" height="6" fill="#00ff00" />
<rect x="589" y="214" width="5" height="7" fill="#00ff00" />
<rect x="595" y="214" width="5" height="7" fill="#00ff00" />
<rect x="601" y="213" width="5" height="8" fill="#00ff00" />
<rect x="607" y="213" width="5" height="8" fill="#00ff00" />
<rect x="440" y="37" width="28.5" height="5" fill="#ffffff" />
<line x1="440" y1="38.5" x2="468.5" y2="38.5" stroke="#ff00ff" stroke-width="1" />
<line x1="440" y1="40.5" x2="468.5" y2="40.5" stroke="#ff00ff" stroke-width="1" />
<rect x="177" y="208" width="5" height="11" fill="#ffffff" />
<line x1="178.5" y1="208" x2="178.5" y2="219" stroke="#ff00ff" stroke-width="1" />
<line x1="180.5" y1="208" x2="180.5" y2="219" stroke="#ff00ff" stroke-width="1" />
<rect x="613" y="0" width="473" height="2" fill="#ffffff" />
<line x1="651.5" y1="2" x2="651.5" y2="208" stroke="#00ff00" stroke-width="1" />
<line x1="653.5" y1="2" x2="653.5" y2="208" stroke="#00ff00" stroke-width="1" />
<line x1="614" y1="38.5" x2="1085" y2="38.5" stroke="#00ff00" stroke-width="1" />
<line x1="614" y1="40.5" x2="1085" y2="40.5" stroke="#00ff00" stroke-width="1" />
<text class="m" transform="translate(815,9.66) scale(1.0365853658536586,1)" text-anchor="start" font-size="8.2" fill="#12f012" >-(IQ,RPM)/</text>
<text class="m" transform="translate(643.8,21.5) scale(1.1111111111111112,1)" text-anchor="end" font-size="9" fill="#12f012" font-weight="bold">ma/r</text>
<text class="m" transform="translate(614,32.08) scale(1.1627906976744187,1)" text-anchor="start" font-size="8.6" fill="#12f012" font-weight="bold">RPM</text>
<text class="m" transform="translate(661.5,21.64) scale(0.9104938271604939,1)" text-anchor="start" font-size="10.8" fill="#12f012" >0.00</text>
<text class="m" transform="translate(697.35,32.08) scale(1.182170542635659,1)" text-anchor="start" font-size="8.6" fill="#12f012" >5,00</text>
<text class="m" transform="translate(733.2,21.64) scale(0.9104938271604939,1)" text-anchor="start" font-size="10.8" fill="#12f012" >10.00</text>
<text class="m" transform="translate(769.05,32.08) scale(1.182170542635659,1)" text-anchor="start" font-size="8.6" fill="#12f012" >15,00</text>
<text class="m" transform="translate(804.9,21.64) scale(0.9104938271604939,1)" text-anchor="start" font-size="10.8" fill="#12f012" >20.00</text>
<text class="m" transform="translate(840.75,32.08) scale(1.182170542635659,1)" text-anchor="start" font-size="8.6" fill="#12f012" >25,00</text>
<text class="m" transform="translate(876.6,21.64) scale(0.9104938271604939,1)" text-anchor="start" font-size="10.8" fill="#12f012" >30.00</text>
<text class="m" transform="translate(912.45,32.08) scale(1.182170542635659,1)" text-anchor="start" font-size="8.6" fill="#12f012" >35,00</text>
<text class="m" transform="translate(948.3,21.64) scale(0.9104938271604939,1)" text-anchor="start" font-size="10.8" fill="#12f012" >45.00</text>
<text class="m" transform="translate(984.15,32.08) scale(1.182170542635659,1)" text-anchor="start" font-size="8.6" fill="#12f012" >58,00</text>
<text class="m" transform="translate(643.5,54.24) scale(0.9104938271604939,1)" text-anchor="end" font-size="10.8" fill="#12f012" >0</text>
<text class="m" transform="translate(690.5,54.24) scale(0.9104938271604939,1)" text-anchor="end" font-size="10.8" fill="#12f012" >190</text>
<text class="m" transform="translate(726.35,54.24) scale(0.9104938271604939,1)" text-anchor="end" font-size="10.8" fill="#12f012" >190</text>
<text class="m" transform="translate(762.2,54.24) scale(0.9104938271604939,1)" text-anchor="end" font-size="10.8" fill="#12f012" >190</text>
<text class="m" transform="translate(798.05,54.24) scale(0.9104938271604939,1)" text-anchor="end" font-size="10.8" fill="#12f012" >190</text>
<text class="m" transform="translate(833.9,54.24) scale(0.9104938271604939,1)" text-anchor="end" font-size="10.8" fill="#12f012" >190</text>
<text class="m" transform="translate(869.75,54.24) scale(0.9104938271604939,1)" text-anchor="end" font-size="10.8" fill="#12f012" >190</text>
<text class="m" transform="translate(905.6,54.24) scale(0.9104938271604939,1)" text-anchor="end" font-size="10.8" fill="#12f012" >190</text>
<text class="m" transform="translate(941.45,54.24) scale(0.9104938271604939,1)" text-anchor="end" font-size="10.8" fill="#12f012" >190</text>
<text class="m" transform="translate(977.3,54.24) scale(0.9104938271604939,1)" text-anchor="end" font-size="10.8" fill="#12f012" >190</text>
<text class="m" transform="translate(1013.15,54.24) scale(0.9104938271604939,1)" text-anchor="end" font-size="10.8" fill="#12f012" >190</text>
<text class="m" transform="translate(643.5,65.24) scale(0.9104938271604939,1)" text-anchor="end" font-size="10.8" fill="#12f012" >21</text>
<text class="m" transform="translate(690.5,65.24) scale(0.9104938271604939,1)" text-anchor="end" font-size="10.8" fill="#12f012" >1002</text>
<text class="m" transform="translate(726.35,65.24) scale(0.9104938271604939,1)" text-anchor="end" font-size="10.8" fill="#12f012" >1052</text>
<text class="m" transform="translate(762.2,65.24) scale(0.9104938271604939,1)" text-anchor="end" font-size="10.8" fill="#12f012" >1102</text>
<text class="m" transform="translate(798.05,65.24) scale(0.9104938271604939,1)" text-anchor="end" font-size="10.8" fill="#12f012" >1150</text>
<text class="m" transform="translate(833.9,65.24) scale(0.9104938271604939,1)" text-anchor="end" font-size="10.8" fill="#12f012" >1195</text>
<text class="m" transform="translate(869.75,65.24) scale(0.9104938271604939,1)" text-anchor="end" font-size="10.8" fill="#12f012" >1261</text>
<text class="m" transform="translate(905.6,65.24) scale(0.9104938271604939,1)" text-anchor="end" font-size="10.8" fill="#12f012" >1350</text>
<text class="m" transform="translate(941.45,65.24) scale(0.9104938271604939,1)" text-anchor="end" font-size="10.8" fill="#12f012" >1350</text>
<text class="m" transform="translate(977.3,65.24) scale(0.9104938271604939,1)" text-anchor="end" font-size="10.8" fill="#12f012" >1350</text>
<text class="m" transform="translate(1013.15,65.24) scale(0.9104938271604939,1)" text-anchor="end" font-size="10.8" fill="#12f012" >1350</text>
<rect x="1026" y="66" width="5" height="1" fill="#00ff00" />
<rect x="1032" y="65" width="5" height="2" fill="#00ff00" />
<rect x="1038" y="65" width="5" height="2" fill="#00ff00" />
<rect x="1044" y="65" width="5" height="2" fill="#00ff00" />
<rect x="1050" y="65" width="5" height="2" fill="#00ff00" />
<rect x="1056" y="64" width="5" height="3" fill="#00ff00" />
<rect x="1062" y="64" width="5" height="3" fill="#00ff00" />
<rect x="1068" y="64" width="5" height="3" fill="#00ff00" />
<rect x="1074" y="64" width="5" height="3" fill="#00ff00" />
<rect x="1080" y="64" width="5" height="3" fill="#00ff00" />
<text class="m" transform="translate(643.5,76.24) scale(0.9104938271604939,1)" text-anchor="end" font-size="10.8" fill="#12f012" >1008</text>
<text class="m" transform="translate(690.5,76.24) scale(0.9104938271604939,1)" text-anchor="end" font-size="10.8" fill="#12f012" >1002</text>
<text class="m" transform="translate(726.35,76.24) scale(0.9104938271604939,1)" text-anchor="end" font-size="10.8" fill="#12f012" >1058</text>
<text class="m" transform="translate(762.2,76.24) scale(0.9104938271604939,1)" text-anchor="end" font-size="10.8" fill="#12f012" >1106</text>
<text class="m" transform="translate(798.05,76.24) scale(0.9104938271604939,1)" text-anchor="end" font-size="10.8" fill="#12f012" >1153</text>
<text class="m" transform="translate(833.9,76.24) scale(0.9104938271604939,1)" text-anchor="end" font-size="10.8" fill="#12f012" >1199</text>
<text class="m" transform="translate(869.75,76.24) scale(0.9104938271604939,1)" text-anchor="end" font-size="10.8" fill="#12f012" >1265</text>
<text class="m" transform="translate(905.6,76.24) scale(0.9104938271604939,1)" text-anchor="end" font-size="10.8" fill="#12f012" >1350</text>
<text class="m" transform="translate(941.45,76.24) scale(0.9104938271604939,1)" text-anchor="end" font-size="10.8" fill="#12f012" >1350</text>
<text class="m" transform="translate(977.3,76.24) scale(0.9104938271604939,1)" text-anchor="end" font-size="10.8" fill="#12f012" >1350</text>
<text class="m" transform="translate(1013.15,76.24) scale(0.9104938271604939,1)" text-anchor="end" font-size="10.8" fill="#12f012" >1350</text>
<rect x="1026" y="77" width="5" height="1" fill="#00ff00" />
<rect x="1032" y="76" width="5" height="2" fill="#00ff00" />
<rect x="1038" y="76" width="5" height="2" fill="#00ff00" />
<rect x="1044" y="76" width="5" height="2" fill="#00ff00" />
<rect x="1050" y="76" width="5" height="2" fill="#00ff00" />
<rect x="1056" y="75" width="5" height="3" fill="#00ff00" />
<rect x="1062" y="75" width="5" height="3" fill="#00ff00" />
<rect x="1068" y="75" width="5" height="3" fill="#00ff00" />
<rect x="1074" y="75" width="5" height="3" fill="#00ff00" />
<rect x="1080" y="75" width="5" height="3" fill="#00ff00" />
<text class="m" transform="translate(643.5,87.24) scale(0.9104938271604939,1)" text-anchor="end" font-size="10.8" fill="#12f012" >1260</text>
<text class="m" transform="translate(690.5,87.24) scale(0.9104938271604939,1)" text-anchor="end" font-size="10.8" fill="#12f012" >1002</text>
<text class="m" transform="translate(726.35,87.24) scale(0.9104938271604939,1)" text-anchor="end" font-size="10.8" fill="#12f012" >1060</text>
<text class="m" transform="translate(762.2,87.24) scale(0.9104938271604939,1)" text-anchor="end" font-size="10.8" fill="#12f012" >1119</text>
<text class="m" transform="translate(798.05,87.24) scale(0.9104938271604939,1)" text-anchor="end" font-size="10.8" fill="#12f012" >1171</text>
<text class="m" transform="translate(833.9,87.24) scale(0.9104938271604939,1)" text-anchor="end" font-size="10.8" fill="#12f012" >1225</text>
<text class="m" transform="translate(869.75,87.24) scale(0.9104938271604939,1)" text-anchor="end" font-size="10.8" fill="#12f012" >1281</text>
<text class="m" transform="translate(905.6,87.24) scale(0.9104938271604939,1)" text-anchor="end" font-size="10.8" fill="#12f012" >1373</text>
<text class="m" transform="translate(941.45,87.24) scale(0.9104938271604939,1)" text-anchor="end" font-size="10.8" fill="#12f012" >1425</text>
<text class="m" transform="translate(977.3,87.24) scale(0.9104938271604939,1)" text-anchor="end" font-size="10.8" fill="#12f012" >1650</text>
<text class="m" transform="translate(1013.15,87.24) scale(0.9104938271604939,1)" text-anchor="end" font-size="10.8" fill="#12f012" >1750</text>
<rect x="1026" y="88" width="5" height="1" fill="#00ff00" />
<rect x="1032" y="87" width="5" height="2" fill="#00ff00" />
<rect x="1038" y="87" width="5" height="2" fill="#00ff00" />
<rect x="1044" y="87" width="5" height="2" fill="#00ff00" />
<rect x="1050" y="87" width="5" height="2" fill="#00ff00" />
<rect x="1056" y="86" width="5" height="3" fill="#00ff00" />
<rect x="1062" y="86" width="5" height="3" fill="#00ff00" />
<rect x="1068" y="86" width="5" height="3" fill="#00ff00" />
<rect x="1074" y="85" width="5" height="4" fill="#00ff00" />
<rect x="1080" y="84" width="5" height="5" fill="#00ff00" />
<text class="m" transform="translate(643.5,98.24) scale(0.9104938271604939,1)" text-anchor="end" font-size="10.8" fill="#12f012" >1500</text>
<text class="m" transform="translate(690.5,98.24) scale(0.9104938271604939,1)" text-anchor="end" font-size="10.8" fill="#12f012" >1002</text>
<text class="m" transform="translate(726.35,98.24) scale(0.9104938271604939,1)" text-anchor="end" font-size="10.8" fill="#12f012" >1090</text>
<text class="m" transform="translate(762.2,98.24) scale(0.9104938271604939,1)" text-anchor="end" font-size="10.8" fill="#12f012" >1155</text>
<text class="m" transform="translate(798.05,98.24) scale(0.9104938271604939,1)" text-anchor="end" font-size="10.8" fill="#12f012" >1225</text>
<text class="m" transform="translate(833.9,98.24) scale(0.9104938271604939,1)" text-anchor="end" font-size="10.8" fill="#12f012" >1305</text>
<text class="m" transform="translate(869.75,98.24) scale(0.9104938271604939,1)" text-anchor="end" font-size="10.8" fill="#12f012" >1380</text>
<text class="m" transform="translate(905.6,98.24) scale(0.9104938271604939,1)" text-anchor="end" font-size="10.8" fill="#12f012" >1495</text>
<text class="m" transform="translate(941.45,98.24) scale(0.9104938271604939,1)" text-anchor="end" font-size="10.8" fill="#12f012" >1625</text>
<text class="m" transform="translate(977.3,98.24) scale(0.9104938271604939,1)" text-anchor="end" font-size="10.8" fill="#ff8484" >2090</text>
<text class="m" transform="translate(1013.15,98.24) scale(0.9104938271604939,1)" text-anchor="end" font-size="10.8" fill="#ff8484" >2200</text>
<rect x="1026" y="99" width="5" height="1" fill="#00ff00" />
<rect x="1032" y="98" width="5" height="2" fill="#00ff00" />
<rect x="1038" y="98" width="5" height="2" fill="#00ff00" />
<rect x="1044" y="98" width="5" height="2" fill="#00ff00" />
<rect x="1050" y="97" width="5" height="3" fill="#00ff00" />
<rect x="1056" y="97" width="5" height="3" fill="#00ff00" />
<rect x="1062" y="96" width="5" height="4" fill="#00ff00" />
<rect x="1068" y="96" width="5" height="4" fill="#00ff00" />
<rect x="1074" y="94" width="5" height="6" fill="#ff8484" />
<rect x="1080" y="93" width="5" height="7" fill="#ff8484" />
<text class="m" transform="translate(643.5,109.24) scale(0.9104938271604939,1)" text-anchor="end" font-size="10.8" fill="#12f012" >1760</text>
<text class="m" transform="translate(690.5,109.24) scale(0.9104938271604939,1)" text-anchor="end" font-size="10.8" fill="#12f012" >1003</text>
<text class="m" transform="translate(726.35,109.24) scale(0.9104938271604939,1)" text-anchor="end" font-size="10.8" fill="#12f012" >1136</text>
<text class="m" transform="translate(762.2,109.24) scale(0.9104938271604939,1)" text-anchor="end" font-size="10.8" fill="#12f012" >1306</text>
<text class="m" transform="translate(798.05,109.24) scale(0.9104938271604939,1)" text-anchor="end" font-size="10.8" fill="#12f012" >1365</text>
<text class="m" transform="translate(833.9,109.24) scale(0.9104938271604939,1)" text-anchor="end" font-size="10.8" fill="#12f012" >1395</text>
<text class="m" transform="translate(869.75,109.24) scale(0.9104938271604939,1)" text-anchor="end" font-size="10.8" fill="#12f012" >1495</text>
<text class="m" transform="translate(905.6,109.24) scale(0.9104938271604939,1)" text-anchor="end" font-size="10.8" fill="#12f012" >1620</text>
<text class="m" transform="translate(941.45,109.24) scale(0.9104938271604939,1)" text-anchor="end" font-size="10.8" fill="#12f012" >1775</text>
<text class="m" transform="translate(977.3,109.24) scale(0.9104938271604939,1)" text-anchor="end" font-size="10.8" fill="#ff8484" >2200</text>
<text class="m" transform="translate(1013.15,109.24) scale(0.9104938271604939,1)" text-anchor="end" font-size="10.8" fill="#ff8484" >2405</text>
<rect x="1026" y="110" width="5" height="1" fill="#00ff00" />
<rect x="1032" y="109" width="5" height="2" fill="#00ff00" />
<rect x="1038" y="108" width="5" height="3" fill="#00ff00" />
<rect x="1044" y="108" width="5" height="3" fill="#00ff00" />
<rect x="1050" y="108" width="5" height="3" fill="#00ff00" />
<rect x="1056" y="107" width="5" height="4" fill="#00ff00" />
<rect x="1062" y="107" width="5" height="4" fill="#00ff00" />
<rect x="1068" y="106" width="5" height="5" fill="#00ff00" />
<rect x="1074" y="104" width="5" height="7" fill="#ff8484" />
<rect x="1080" y="103" width="5" height="8" fill="#ff8484" />
<text class="m" transform="translate(643.5,120.24) scale(0.9104938271604939,1)" text-anchor="end" font-size="10.8" fill="#12f012" >1900</text>
<text class="m" transform="translate(690.5,120.24) scale(0.9104938271604939,1)" text-anchor="end" font-size="10.8" fill="#12f012" >1002</text>
<text class="m" transform="translate(726.35,120.24) scale(0.9104938271604939,1)" text-anchor="end" font-size="10.8" fill="#12f012" >1150</text>
<text class="m" transform="translate(762.2,120.24) scale(0.9104938271604939,1)" text-anchor="end" font-size="10.8" fill="#12f012" >1230</text>
<text class="m" transform="translate(798.05,120.24) scale(0.9104938271604939,1)" text-anchor="end" font-size="10.8" fill="#12f012" >1330</text>
<text class="m" transform="translate(833.9,120.24) scale(0.9104938271604939,1)" text-anchor="end" font-size="10.8" fill="#12f012" >1425</text>
<text class="m" transform="translate(869.75,120.24) scale(0.9104938271604939,1)" text-anchor="end" font-size="10.8" fill="#12f012" >1535</text>
<text class="m" transform="translate(905.6,120.24) scale(0.9104938271604939,1)" text-anchor="end" font-size="10.8" fill="#12f012" >1680</text>
<text class="m" transform="translate(941.45,120.24) scale(0.9104938271604939,1)" text-anchor="end" font-size="10.8" fill="#12f012" >1840</text>
<text class="m" transform="translate(977.3,120.24) scale(0.9104938271604939,1)" text-anchor="end" font-size="10.8" fill="#ff8484" >2360</text>
<text class="m" transform="translate(1013.15,120.24) scale(0.9104938271604939,1)" text-anchor="end" font-size="10.8" fill="#ff8484" >2545</text>
<rect x="1026" y="121" width="5" height="1" fill="#00ff00" />
<rect x="1032" y="120" width="5" height="2" fill="#00ff00" />
<rect x="1038" y="120" width="5" height="2" fill="#00ff00" />
<rect x="1044" y="119" width="5" height="3" fill="#00ff00" />
<rect x="1050" y="119" width="5" height="3" fill="#00ff00" />
<rect x="1056" y="118" width="5" height="4" fill="#00ff00" />
<rect x="1062" y="118" width="5" height="4" fill="#00ff00" />
<rect x="1068" y="117" width="5" height="5" fill="#00ff00" />
<rect x="1074" y="115" width="5" height="7" fill="#ff8484" />
<rect x="1080" y="114" width="5" height="8" fill="#ff8484" />
<text class="m" transform="translate(643.5,131.24) scale(0.9104938271604939,1)" text-anchor="end" font-size="10.8" fill="#12f012" >2000</text>
<text class="m" transform="translate(690.5,131.24) scale(0.9104938271604939,1)" text-anchor="end" font-size="10.8" fill="#12f012" >1003</text>
<text class="m" transform="translate(726.35,131.24) scale(0.9104938271604939,1)" text-anchor="end" font-size="10.8" fill="#12f012" >1160</text>
<text class="m" transform="translate(762.2,131.24) scale(0.9104938271604939,1)" text-anchor="end" font-size="10.8" fill="#12f012" >1250</text>
<text class="m" transform="translate(798.05,131.24) scale(0.9104938271604939,1)" text-anchor="end" font-size="10.8" fill="#12f012" >1340</text>
<text class="m" transform="translate(833.9,131.24) scale(0.9104938271604939,1)" text-anchor="end" font-size="10.8" fill="#12f012" >1435</text>
<text class="m" transform="translate(869.75,131.24) scale(0.9104938271604939,1)" text-anchor="end" font-size="10.8" fill="#12f012" >1555</text>
<text class="m" transform="translate(905.6,131.24) scale(0.9104938271604939,1)" text-anchor="end" font-size="10.8" fill="#12f012" >1705</text>
<text class="m" transform="translate(941.45,131.24) scale(0.9104938271604939,1)" text-anchor="end" font-size="10.8" fill="#12f012" >1880</text>
<text class="m" transform="translate(977.3,131.24) scale(0.9104938271604939,1)" text-anchor="end" font-size="10.8" fill="#ff8484" >2400</text>
<text class="m" transform="translate(1013.15,131.24) scale(0.9104938271604939,1)" text-anchor="end" font-size="10.8" fill="#ff8484" >2620</text>
<rect x="1026" y="132" width="5" height="1" fill="#00ff00" />
<rect x="1032" y="131" width="5" height="2" fill="#00ff00" />
<rect x="1038" y="131" width="5" height="2" fill="#00ff00" />
<rect x="1044" y="130" width="5" height="3" fill="#00ff00" />
<rect x="1050" y="130" width="5" height="3" fill="#00ff00" />
<rect x="1056" y="129" width="5" height="4" fill="#00ff00" />
<rect x="1062" y="128" width="5" height="5" fill="#00ff00" />
<rect x="1068" y="128" width="5" height="5" fill="#00ff00" />
<rect x="1074" y="125" width="5" height="8" fill="#ff8484" />
<rect x="1080" y="124" width="5" height="9" fill="#ff8484" />
<text class="m" transform="translate(643.5,142.24) scale(0.9104938271604939,1)" text-anchor="end" font-size="10.8" fill="#12f012" >2247</text>
<text class="m" transform="translate(690.5,142.24) scale(0.9104938271604939,1)" text-anchor="end" font-size="10.8" fill="#12f012" >1012</text>
<text class="m" transform="translate(726.35,142.24) scale(0.9104938271604939,1)" text-anchor="end" font-size="10.8" fill="#12f012" >1170</text>
<text class="m" transform="translate(762.2,142.24) scale(0.9104938271604939,1)" text-anchor="end" font-size="10.8" fill="#12f012" >1260</text>
<text class="m" transform="translate(798.05,142.24) scale(0.9104938271604939,1)" text-anchor="end" font-size="10.8" fill="#12f012" >1360</text>
<text class="m" transform="translate(833.9,142.24) scale(0.9104938271604939,1)" text-anchor="end" font-size="10.8" fill="#12f012" >1460</text>
<text class="m" transform="translate(869.75,142.24) scale(0.9104938271604939,1)" text-anchor="end" font-size="10.8" fill="#12f012" >1585</text>
<text class="m" transform="translate(905.6,142.24) scale(0.9104938271604939,1)" text-anchor="end" font-size="10.8" fill="#12f012" >1725</text>
<text class="m" transform="translate(941.45,142.24) scale(0.9104938271604939,1)" text-anchor="end" font-size="10.8" fill="#12f012" >1915</text>
<text class="m" transform="translate(977.3,142.24) scale(0.9104938271604939,1)" text-anchor="end" font-size="10.8" fill="#ff8484" >2450</text>
<text class="m" transform="translate(1013.15,142.24) scale(0.9104938271604939,1)" text-anchor="end" font-size="10.8" fill="#ff8484" >2720</text>
<rect x="1026" y="143" width="5" height="1" fill="#00ff00" />
<rect x="1032" y="142" width="5" height="2" fill="#00ff00" />
<rect x="1038" y="141" width="5" height="3" fill="#00ff00" />
<rect x="1044" y="141" width="5" height="3" fill="#00ff00" />
<rect x="1050" y="141" width="5" height="3" fill="#00ff00" />
<rect x="1056" y="140" width="5" height="4" fill="#00ff00" />
<rect x="1062" y="139" width="5" height="5" fill="#00ff00" />
<rect x="1068" y="139" width="5" height="5" fill="#00ff00" />
<rect x="1074" y="136" width="5" height="8" fill="#ff8484" />
<rect x="1080" y="135" width="5" height="9" fill="#ff8484" />
<text class="m" transform="translate(643.5,153.24) scale(0.9104938271604939,1)" text-anchor="end" font-size="10.8" fill="#12f012" >2499</text>
<text class="m" transform="translate(690.5,153.24) scale(0.9104938271604939,1)" text-anchor="end" font-size="10.8" fill="#12f012" >1021</text>
<text class="m" transform="translate(726.35,153.24) scale(0.9104938271604939,1)" text-anchor="end" font-size="10.8" fill="#12f012" >1190</text>
<text class="m" transform="translate(762.2,153.24) scale(0.9104938271604939,1)" text-anchor="end" font-size="10.8" fill="#12f012" >1270</text>
<text class="m" transform="translate(798.05,153.24) scale(0.9104938271604939,1)" text-anchor="end" font-size="10.8" fill="#12f012" >1370</text>
<text class="m" transform="translate(833.9,153.24) scale(0.9104938271604939,1)" text-anchor="end" font-size="10.8" fill="#12f012" >1470</text>
<text class="m" transform="translate(869.75,153.24) scale(0.9104938271604939,1)" text-anchor="end" font-size="10.8" fill="#12f012" >1605</text>
<text class="m" transform="translate(905.6,153.24) scale(0.9104938271604939,1)" text-anchor="end" font-size="10.8" fill="#12f012" >1735</text>
<text class="m" transform="translate(941.45,153.24) scale(0.9104938271604939,1)" text-anchor="end" font-size="10.8" fill="#12f012" >1925</text>
<text class="m" transform="translate(977.3,153.24) scale(0.9104938271604939,1)" text-anchor="end" font-size="10.8" fill="#ff8484" >2400</text>
<text class="m" transform="translate(1013.15,153.24) scale(0.9104938271604939,1)" text-anchor="end" font-size="10.8" fill="#ff8484" >2870</text>
<rect x="1026" y="154" width="5" height="1" fill="#00ff00" />
<rect x="1032" y="153" width="5" height="2" fill="#00ff00" />
<rect x="1038" y="152" width="5" height="3" fill="#00ff00" />
<rect x="1044" y="152" width="5" height="3" fill="#00ff00" />
<rect x="1050" y="152" width="5" height="3" fill="#00ff00" />
<rect x="1056" y="151" width="5" height="4" fill="#00ff00" />
<rect x="1062" y="150" width="5" height="5" fill="#00ff00" />
<rect x="1068" y="149" width="5" height="6" fill="#00ff00" />
<rect x="1074" y="147" width="5" height="8" fill="#ff8484" />
<rect x="1080" y="145" width="5" height="10" fill="#ff8484" />
<text class="m" transform="translate(643.5,164.24) scale(0.9104938271604939,1)" text-anchor="end" font-size="10.8" fill="#12f012" >3500</text>
<text class="m" transform="translate(690.5,164.24) scale(0.9104938271604939,1)" text-anchor="end" font-size="10.8" fill="#12f012" >1060</text>
<text class="m" transform="translate(726.35,164.24) scale(0.9104938271604939,1)" text-anchor="end" font-size="10.8" fill="#12f012" >1225</text>
<text class="m" transform="translate(762.2,164.24) scale(0.9104938271604939,1)" text-anchor="end" font-size="10.8" fill="#12f012" >1320</text>
<text class="m" transform="translate(798.05,164.24) scale(0.9104938271604939,1)" text-anchor="end" font-size="10.8" fill="#12f012" >1435</text>
<text class="m" transform="translate(833.9,164.24) scale(0.9104938271604939,1)" text-anchor="end" font-size="10.8" fill="#12f012" >1515</text>
<text class="m" transform="translate(869.75,164.24) scale(0.9104938271604939,1)" text-anchor="end" font-size="10.8" fill="#12f012" >1645</text>
<text class="m" transform="translate(905.6,164.24) scale(0.9104938271604939,1)" text-anchor="end" font-size="10.8" fill="#12f012" >1775</text>
<text class="m" transform="translate(941.45,164.24) scale(0.9104938271604939,1)" text-anchor="end" font-size="10.8" fill="#12f012" >1965</text>
<text class="m" transform="translate(977.3,164.24) scale(0.9104938271604939,1)" text-anchor="end" font-size="10.8" fill="#ff8484" >2505</text>
<text class="m" transform="translate(1013.15,164.24) scale(0.9104938271604939,1)" text-anchor="end" font-size="10.8" fill="#ff8484" >2920</text>
<rect x="1026" y="164" width="5" height="2" fill="#00ff00" />
<rect x="1032" y="164" width="5" height="2" fill="#00ff00" />
<rect x="1038" y="163" width="5" height="3" fill="#00ff00" />
<rect x="1044" y="163" width="5" height="3" fill="#00ff00" />
<rect x="1050" y="162" width="5" height="4" fill="#00ff00" />
<rect x="1056" y="162" width="5" height="4" fill="#00ff00" />
<rect x="1062" y="161" width="5" height="5" fill="#00ff00" />
<rect x="1068" y="160" width="5" height="6" fill="#00ff00" />
<rect x="1074" y="158" width="5" height="8" fill="#ff8484" />
<rect x="1080" y="156" width="5" height="10" fill="#ff8484" />
<text class="m" transform="translate(643.5,175.24) scale(0.9104938271604939,1)" text-anchor="end" font-size="10.8" fill="#12f012" >3750</text>
<text class="m" transform="translate(690.5,175.24) scale(0.9104938271604939,1)" text-anchor="end" font-size="10.8" fill="#12f012" >1080</text>
<text class="m" transform="translate(726.35,175.24) scale(0.9104938271604939,1)" text-anchor="end" font-size="10.8" fill="#12f012" >1225</text>
<text class="m" transform="translate(762.2,175.24) scale(0.9104938271604939,1)" text-anchor="end" font-size="10.8" fill="#12f012" >1330</text>
<text class="m" transform="translate(798.05,175.24) scale(0.9104938271604939,1)" text-anchor="end" font-size="10.8" fill="#12f012" >1445</text>
<text class="m" transform="translate(833.9,175.24) scale(0.9104938271604939,1)" text-anchor="end" font-size="10.8" fill="#12f012" >1530</text>
<text class="m" transform="translate(869.75,175.24) scale(0.9104938271604939,1)" text-anchor="end" font-size="10.8" fill="#12f012" >1645</text>
<text class="m" transform="translate(905.6,175.24) scale(0.9104938271604939,1)" text-anchor="end" font-size="10.8" fill="#12f012" >1780</text>
<text class="m" transform="translate(941.45,175.24) scale(0.9104938271604939,1)" text-anchor="end" font-size="10.8" fill="#12f012" >1970</text>
<text class="m" transform="translate(977.3,175.24) scale(0.9104938271604939,1)" text-anchor="end" font-size="10.8" fill="#ff8484" >2505</text>
<text class="m" transform="translate(1013.15,175.24) scale(0.9104938271604939,1)" text-anchor="end" font-size="10.8" fill="#ff8484" >2920</text>
<rect x="1026" y="175" width="5" height="2" fill="#00ff00" />
<rect x="1032" y="175" width="5" height="2" fill="#00ff00" />
<rect x="1038" y="174" width="5" height="3" fill="#00ff00" />
<rect x="1044" y="174" width="5" height="3" fill="#00ff00" />
<rect x="1050" y="173" width="5" height="4" fill="#00ff00" />
<rect x="1056" y="173" width="5" height="4" fill="#00ff00" />
<rect x="1062" y="172" width="5" height="5" fill="#00ff00" />
<rect x="1068" y="171" width="5" height="6" fill="#00ff00" />
<rect x="1074" y="169" width="5" height="8" fill="#ff8484" />
<rect x="1080" y="167" width="5" height="10" fill="#ff8484" />
<text class="m" transform="translate(643.5,186.24) scale(0.9104938271604939,1)" text-anchor="end" font-size="10.8" fill="#12f012" >3990</text>
<text class="m" transform="translate(690.5,186.24) scale(0.9104938271604939,1)" text-anchor="end" font-size="10.8" fill="#12f012" >1100</text>
<text class="m" transform="translate(726.35,186.24) scale(0.9104938271604939,1)" text-anchor="end" font-size="10.8" fill="#12f012" >1225</text>
<text class="m" transform="translate(762.2,186.24) scale(0.9104938271604939,1)" text-anchor="end" font-size="10.8" fill="#12f012" >1330</text>
<text class="m" transform="translate(798.05,186.24) scale(0.9104938271604939,1)" text-anchor="end" font-size="10.8" fill="#12f012" >1445</text>
<text class="m" transform="translate(833.9,186.24) scale(0.9104938271604939,1)" text-anchor="end" font-size="10.8" fill="#12f012" >1540</text>
<text class="m" transform="translate(869.75,186.24) scale(0.9104938271604939,1)" text-anchor="end" font-size="10.8" fill="#12f012" >1650</text>
<text class="m" transform="translate(905.6,186.24) scale(0.9104938271604939,1)" text-anchor="end" font-size="10.8" fill="#12f012" >1780</text>
<text class="m" transform="translate(941.45,186.24) scale(0.9104938271604939,1)" text-anchor="end" font-size="10.8" fill="#12f012" >1970</text>
<text class="m" transform="translate(977.3,186.24) scale(0.9104938271604939,1)" text-anchor="end" font-size="10.8" fill="#ff8484" >2485</text>
<text class="m" transform="translate(1013.15,186.24) scale(0.9104938271604939,1)" text-anchor="end" font-size="10.8" fill="#ff8484" >2920</text>
<rect x="1026" y="186" width="5" height="2" fill="#00ff00" />
<rect x="1032" y="186" width="5" height="2" fill="#00ff00" />
<rect x="1038" y="185" width="5" height="3" fill="#00ff00" />
<rect x="1044" y="185" width="5" height="3" fill="#00ff00" />
<rect x="1050" y="184" width="5" height="4" fill="#00ff00" />
<rect x="1056" y="184" width="5" height="4" fill="#00ff00" />
<rect x="1062" y="183" width="5" height="5" fill="#00ff00" />
<rect x="1068" y="182" width="5" height="6" fill="#00ff00" />
<rect x="1074" y="180" width="5" height="8" fill="#ff8484" />
<rect x="1080" y="178" width="5" height="10" fill="#ff8484" />
<text class="m" transform="translate(643.5,197.24) scale(0.9104938271604939,1)" text-anchor="end" font-size="10.8" fill="#12f012" >4250</text>
<text class="m" transform="translate(690.5,197.24) scale(0.9104938271604939,1)" text-anchor="end" font-size="10.8" fill="#12f012" >1120</text>
<text class="m" transform="translate(726.35,197.24) scale(0.9104938271604939,1)" text-anchor="end" font-size="10.8" fill="#12f012" >1225</text>
<text class="m" transform="translate(762.2,197.24) scale(0.9104938271604939,1)" text-anchor="end" font-size="10.8" fill="#12f012" >1330</text>
<text class="m" transform="translate(798.05,197.24) scale(0.9104938271604939,1)" text-anchor="end" font-size="10.8" fill="#12f012" >1445</text>
<text class="m" transform="translate(833.9,197.24) scale(0.9104938271604939,1)" text-anchor="end" font-size="10.8" fill="#12f012" >1540</text>
<text class="m" transform="translate(869.75,197.24) scale(0.9104938271604939,1)" text-anchor="end" font-size="10.8" fill="#12f012" >1670</text>
<text class="m" transform="translate(905.6,197.24) scale(0.9104938271604939,1)" text-anchor="end" font-size="10.8" fill="#12f012" >1780</text>
<text class="m" transform="translate(941.45,197.24) scale(0.9104938271604939,1)" text-anchor="end" font-size="10.8" fill="#12f012" >1900</text>
<text class="m" transform="translate(977.3,197.24) scale(0.9104938271604939,1)" text-anchor="end" font-size="10.8" fill="#ff8484" >2440</text>
<text class="m" transform="translate(1013.15,197.24) scale(0.9104938271604939,1)" text-anchor="end" font-size="10.8" fill="#ff8484" >2870</text>
<rect x="1026" y="197" width="5" height="2" fill="#00ff00" />
<rect x="1032" y="197" width="5" height="2" fill="#00ff00" />
<rect x="1038" y="196" width="5" height="3" fill="#00ff00" />
<rect x="1044" y="196" width="5" height="3" fill="#00ff00" />
<rect x="1050" y="195" width="5" height="4" fill="#00ff00" />
<rect x="1056" y="195" width="5" height="4" fill="#00ff00" />
<rect x="1062" y="194" width="5" height="5" fill="#00ff00" />
<rect x="1068" y="194" width="5" height="5" fill="#00ff00" />
<rect x="1074" y="191" width="5" height="8" fill="#ff8484" />
<rect x="1080" y="189" width="5" height="10" fill="#ff8484" />
<text class="m" transform="translate(643.5,208.24) scale(0.9104938271604939,1)" text-anchor="end" font-size="10.8" fill="#12f012" >4494</text>
<text class="m" transform="translate(690.5,208.24) scale(0.9104938271604939,1)" text-anchor="end" font-size="10.8" fill="#12f012" >1140</text>
<text class="m" transform="translate(726.35,208.24) scale(0.9104938271604939,1)" text-anchor="end" font-size="10.8" fill="#12f012" >1225</text>
<text class="m" transform="translate(762.2,208.24) scale(0.9104938271604939,1)" text-anchor="end" font-size="10.8" fill="#12f012" >1328</text>
<text class="m" transform="translate(798.05,208.24) scale(0.9104938271604939,1)" text-anchor="end" font-size="10.8" fill="#12f012" >1445</text>
<text class="m" transform="translate(833.9,208.24) scale(0.9104938271604939,1)" text-anchor="end" font-size="10.8" fill="#12f012" >1540</text>
<text class="m" transform="translate(869.75,208.24) scale(0.9104938271604939,1)" text-anchor="end" font-size="10.8" fill="#12f012" >1665</text>
<text class="m" transform="translate(905.6,208.24) scale(0.9104938271604939,1)" text-anchor="end" font-size="10.8" fill="#12f012" >1780</text>
<text class="m" transform="translate(941.45,208.24) scale(0.9104938271604939,1)" text-anchor="end" font-size="10.8" fill="#12f012" >1965</text>
<text class="m" transform="translate(977.3,208.24) scale(0.9104938271604939,1)" text-anchor="end" font-size="10.8" fill="#12f012" >2121</text>
<text class="m" transform="translate(1013.15,208.24) scale(0.9104938271604939,1)" text-anchor="end" font-size="10.8" fill="#12f012" >2500</text>
<rect x="1026" y="208" width="5" height="2" fill="#00ff00" />
<rect x="1032" y="208" width="5" height="2" fill="#00ff00" />
<rect x="1038" y="207" width="5" height="3" fill="#00ff00" />
<rect x="1044" y="207" width="5" height="3" fill="#00ff00" />
<rect x="1050" y="206" width="5" height="4" fill="#00ff00" />
<rect x="1056" y="206" width="5" height="4" fill="#00ff00" />
<rect x="1062" y="205" width="5" height="5" fill="#00ff00" />
<rect x="1068" y="204" width="5" height="6" fill="#00ff00" />
<rect x="1074" y="204" width="5" height="6" fill="#00ff00" />
<rect x="1080" y="202" width="5" height="8" fill="#00ff00" />
<text class="m" transform="translate(643.5,219.24) scale(0.9104938271604939,1)" text-anchor="end" font-size="10.8" fill="#12f012" >4746</text>
<text class="m" transform="translate(690.5,219.24) scale(0.9104938271604939,1)" text-anchor="end" font-size="10.8" fill="#12f012" >1200</text>
<text class="m" transform="translate(726.35,219.24) scale(0.9104938271604939,1)" text-anchor="end" font-size="10.8" fill="#12f012" >1225</text>
<text class="m" transform="translate(762.2,219.24) scale(0.9104938271604939,1)" text-anchor="end" font-size="10.8" fill="#12f012" >1325</text>
<text class="m" transform="translate(798.05,219.24) scale(0.9104938271604939,1)" text-anchor="end" font-size="10.8" fill="#12f012" >1429</text>
<text class="m" transform="translate(833.9,219.24) scale(0.9104938271604939,1)" text-anchor="end" font-size="10.8" fill="#12f012" >1530</text>
<text class="m" transform="translate(869.75,219.24) scale(0.9104938271604939,1)" text-anchor="end" font-size="10.8" fill="#12f012" >1655</text>
<text class="m" transform="translate(905.6,219.24) scale(0.9104938271604939,1)" text-anchor="end" font-size="10.8" fill="#12f012" >1775</text>
<text class="m" transform="translate(941.45,219.24) scale(0.9104938271604939,1)" text-anchor="end" font-size="10.8" fill="#12f012" >1900</text>
<text class="m" transform="translate(977.3,219.24) scale(0.9104938271604939,1)" text-anchor="end" font-size="10.8" fill="#12f012" >1950</text>
<text class="m" transform="translate(1013.15,219.24) scale(0.9104938271604939,1)" text-anchor="end" font-size="10.8" fill="#12f012" >2100</text>
<rect x="1026" y="219" width="5" height="2" fill="#00ff00" />
<rect x="1032" y="219" width="5" height="2" fill="#00ff00" />
<rect x="1038" y="218" width="5" height="3" fill="#00ff00" />
<rect x="1044" y="218" width="5" height="3" fill="#00ff00" />
<rect x="1050" y="217" width="5" height="4" fill="#00ff00" />
<rect x="1056" y="217" width="5" height="4" fill="#00ff00" />
<rect x="1062" y="216" width="5" height="5" fill="#00ff00" />
<rect x="1068" y="216" width="5" height="5" fill="#00ff00" />
<rect x="1074" y="215" width="5" height="6" fill="#00ff00" />
<rect x="1080" y="215" width="5" height="6" fill="#00ff00" />
<rect x="876" y="37" width="28.5" height="5" fill="#ffffff" />
<line x1="876" y1="38.5" x2="904.5" y2="38.5" stroke="#ff00ff" stroke-width="1" />
<line x1="876" y1="40.5" x2="904.5" y2="40.5" stroke="#ff00ff" stroke-width="1" />
<rect x="650" y="208" width="5" height="11" fill="#ffffff" />
<line x1="651.5" y1="208" x2="651.5" y2="219" stroke="#ff00ff" stroke-width="1" />
<line x1="653.5" y1="208" x2="653.5" y2="219" stroke="#ff00ff" stroke-width="1" />
<rect x="140" y="226" width="246" height="146" fill="#000000" />
<line x1="140" y1="232.5" x2="143" y2="232.5" stroke="#646464" stroke-width="1" />
<line x1="140" y1="251.5" x2="143" y2="251.5" stroke="#646464" stroke-width="1" />
<line x1="140" y1="305.5" x2="143" y2="305.5" stroke="#646464" stroke-width="1" />
<line x1="140" y1="324.5" x2="143" y2="324.5" stroke="#646464" stroke-width="1" />
<line x1="140" y1="343.5" x2="143" y2="343.5" stroke="#646464" stroke-width="1" />
<rect x="140" y="226" width="246" height="2" fill="#d4d4d4" />
<line x1="140.5" y1="226" x2="140.5" y2="370" stroke="#a0a0a0" stroke-width="1" />
<g stroke="#3a8a3a" stroke-width="1" stroke-dasharray="3,2">
<line x1="153.6" y1="228" x2="153.6" y2="287"/>
<line x1="186.7" y1="228" x2="186.7" y2="287"/>
<line x1="194" y1="228" x2="194" y2="287"/>
<line x1="200" y1="228" x2="200" y2="287"/>
<line x1="209" y1="228" x2="209" y2="287"/>
<line x1="214" y1="228" x2="214" y2="287"/>
<line x1="218" y1="228" x2="218" y2="287"/>
<line x1="225" y1="228" x2="225" y2="287"/>
<line x1="339" y1="228" x2="339" y2="350"/>
<line x1="344" y1="228" x2="344" y2="350"/>
<line x1="349" y1="228" x2="349" y2="350"/>
<line x1="353" y1="228" x2="353" y2="350"/>
<line x1="356" y1="228" x2="356" y2="350"/>
<line x1="360" y1="228" x2="360" y2="350"/>
<line x1="364" y1="228" x2="364" y2="350"/>
<line x1="367" y1="228" x2="367" y2="350"/>
</g>
<line x1="307.4" y1="228" x2="307.4" y2="250" stroke="#4aa04a" stroke-width="1" />
<line x1="369.4" y1="228" x2="369.4" y2="351.6" stroke="#4aa04a" stroke-width="1" />
<g stroke="#2a5e2a" stroke-width="1" stroke-dasharray="2,4">
<line x1="153.83" y1="325.96" x2="231.65" y2="364.14"/>
<line x1="167.67" y1="324.92" x2="245.5" y2="363.08"/>
<line x1="181.5" y1="323.88" x2="259.35" y2="362.02"/>
<line x1="195.33" y1="322.83" x2="273.2" y2="360.97"/>
<line x1="209.17" y1="321.79" x2="287.05" y2="359.91"/>
<line x1="223" y1="320.75" x2="300.9" y2="358.85"/>
<line x1="236.83" y1="319.71" x2="314.75" y2="357.79"/>
<line x1="250.67" y1="318.67" x2="328.6" y2="356.73"/>
<line x1="264.5" y1="317.62" x2="342.45" y2="355.68"/>
<line x1="278.33" y1="316.58" x2="356.3" y2="354.62"/>
<line x1="292.17" y1="315.54" x2="370.15" y2="353.56"/>
<line x1="147.78" y1="330.82" x2="313.8" y2="318.3"/>
<line x1="155.56" y1="334.64" x2="321.6" y2="322.1"/>
<line x1="163.34" y1="338.46" x2="329.4" y2="325.9"/>
<line x1="171.12" y1="342.28" x2="337.2" y2="329.7"/>
<line x1="178.9" y1="346.1" x2="345" y2="333.5"/>
<line x1="186.68" y1="349.92" x2="352.8" y2="337.3"/>
<line x1="194.46" y1="353.74" x2="360.6" y2="341.1"/>
<line x1="202.24" y1="357.56" x2="368.4" y2="344.9"/>
<line x1="210.02" y1="361.38" x2="376.2" y2="348.7"/>
</g>
<polyline points="140,327 217.8,365.2 384,352.5" fill="none" stroke="#5cb05c" stroke-width="1" />
<line x1="340" y1="337" x2="384" y2="352.5" stroke="#4a9a4a" stroke-width="1" />
<polygon points="153.6,287.4 153.6,328 216,359 216,331.7" fill="#4c4c4c" stroke="none" stroke-width="1" />
<line x1="153.6" y1="287.4" x2="153.6" y2="328" stroke="#00ff00" stroke-width="1" />
<line x1="167" y1="296.91" x2="167" y2="334.66" stroke="#00ff00" stroke-width="1" />
<line x1="178" y1="304.72" x2="178" y2="340.12" stroke="#00ff00" stroke-width="1" />
<line x1="183.4" y1="308.56" x2="183.4" y2="342.8" stroke="#00ff00" stroke-width="1" />
<line x1="188.8" y1="312.39" x2="188.8" y2="345.49" stroke="#00ff00" stroke-width="1" />
<line x1="195" y1="316.79" x2="195" y2="348.57" stroke="#00ff00" stroke-width="1" />
<line x1="216" y1="331.7" x2="216" y2="359" stroke="#00ff00" stroke-width="1" />
<line x1="153.6" y1="328" x2="216" y2="359" stroke="#00ff00" stroke-width="1" />
<polygon points="153.6,287.4 167.64,286.3 172.7,290.05 158.8,291.09" fill="#2a2a2a" stroke="#2a2a2a" stroke-width="0.6" />
<polygon points="158.8,291.09 172.7,290.05 177.75,293.81 164,294.78" fill="#2a2a2a" stroke="#2a2a2a" stroke-width="0.6" />
<polygon points="164,294.78 177.75,293.81 182.82,297.55 169.2,298.47" fill="#2a2a2a" stroke="#2a2a2a" stroke-width="0.6" />
<polygon points="169.2,298.47 182.82,297.55 188.04,301.13 174.4,302.17" fill="#2a2a2a" stroke="#2a2a2a" stroke-width="0.6" />
<polygon points="174.4,302.17 188.04,301.13 193.26,304.7 179.6,305.86" fill="#2a2a2a" stroke="#2a2a2a" stroke-width="0.6" />
<polygon points="179.6,305.86 193.26,304.7 198.36,308.4 184.8,309.55" fill="#161616" stroke="#161616" stroke-width="0.6" />
<polygon points="184.8,309.55 198.36,308.4 203.39,312.18 190,313.24" fill="#161616" stroke="#161616" stroke-width="0.6" />
<polygon points="190,313.24 203.39,312.18 208.47,315.91 195.2,316.93" fill="#161616" stroke="#161616" stroke-width="0.6" />
<polygon points="195.2,316.93 208.47,315.91 213.58,319.62 200.4,320.62" fill="#161616" stroke="#161616" stroke-width="0.6" />
<polygon points="200.4,320.62 213.58,319.62 218.69,323.33 205.6,324.32" fill="#161616" stroke="#161616" stroke-width="0.6" />
<polygon points="205.6,324.32 218.69,323.33 223.79,327.05 210.8,328.01" fill="#161616" stroke="#161616" stroke-width="0.6" />
<polygon points="210.8,328.01 223.79,327.05 228.9,330.76 216,331.7" fill="#161616" stroke="#161616" stroke-width="0.6" />
<polygon points="167.64,286.3 181.68,285.2 186.59,289.01 172.7,290.05" fill="#2a2a2a" stroke="#2a2a2a" stroke-width="0.6" />
<polygon points="172.7,290.05 186.59,289.01 191.5,292.84 177.75,293.81" fill="#2a2a2a" stroke="#2a2a2a" stroke-width="0.6" />
<polygon points="177.75,293.81 191.5,292.84 196.44,296.63 182.82,297.55" fill="#2a2a2a" stroke="#2a2a2a" stroke-width="0.6" />
<polygon points="182.82,297.55 196.44,296.63 201.68,300.09 188.04,301.13" fill="#2a2a2a" stroke="#2a2a2a" stroke-width="0.6" />
<polygon points="188.04,301.13 201.68,300.09 206.92,303.55 193.26,304.7" fill="#2a2a2a" stroke="#2a2a2a" stroke-width="0.6" />
<polygon points="193.26,304.7 206.92,303.55 211.93,307.25 198.36,308.4" fill="#161616" stroke="#161616" stroke-width="0.6" />
<polygon points="198.36,308.4 211.93,307.25 216.78,311.12 203.39,312.18" fill="#161616" stroke="#161616" stroke-width="0.6" />
<polygon points="203.39,312.18 216.78,311.12 221.74,314.89 208.47,315.91" fill="#161616" stroke="#161616" stroke-width="0.6" />
<polygon points="208.47,315.91 221.74,314.89 226.77,318.61 213.58,319.62" fill="#161616" stroke="#161616" stroke-width="0.6" />
<polygon points="213.58,319.62 226.77,318.61 231.78,322.35 218.69,323.33" fill="#161616" stroke="#161616" stroke-width="0.6" />
<polygon points="218.69,323.33 231.78,322.35 236.78,326.09 223.79,327.05" fill="#161616" stroke="#161616" stroke-width="0.6" />
<polygon points="223.79,327.05 236.78,326.09 241.79,329.83 228.9,330.76" fill="#161616" stroke="#161616" stroke-width="0.6" />
<polygon points="181.68,285.2 191.05,277.59 196.21,282.01 186.59,289.01" fill="#2a2a2a" stroke="#2a2a2a" stroke-width="0.6" />
<polygon points="186.59,289.01 196.21,282.01 201.36,286.44 191.5,292.84" fill="#2a2a2a" stroke="#2a2a2a" stroke-width="0.6" />
<polygon points="191.5,292.84 201.36,286.44 206.55,290.82 196.44,296.63" fill="#2a2a2a" stroke="#2a2a2a" stroke-width="0.6" />
<polygon points="196.44,296.63 206.55,290.82 212.21,294.71 201.68,300.09" fill="#2a2a2a" stroke="#2a2a2a" stroke-width="0.6" />
<polygon points="201.68,300.09 212.21,294.71 217.86,298.59 206.92,303.55" fill="#2a2a2a" stroke="#2a2a2a" stroke-width="0.6" />
<polygon points="206.92,303.55 217.86,298.59 223.15,302.85 211.93,307.25" fill="#161616" stroke="#161616" stroke-width="0.6" />
<polygon points="211.93,307.25 223.15,302.85 228.22,307.35 216.78,311.12" fill="#161616" stroke="#161616" stroke-width="0.6" />
<polygon points="216.78,311.12 228.22,307.35 233.46,311.7 221.74,314.89" fill="#161616" stroke="#161616" stroke-width="0.6" />
<polygon points="221.74,314.89 233.46,311.7 238.79,315.97 226.77,318.61" fill="#161616" stroke="#161616" stroke-width="0.6" />
<polygon points="226.77,318.61 238.79,315.97 244.09,320.28 231.78,322.35" fill="#161616" stroke="#161616" stroke-width="0.6" />
<polygon points="231.78,322.35 244.09,320.28 249.39,324.59 236.78,326.09" fill="#161616" stroke="#161616" stroke-width="0.6" />
<polygon points="236.78,326.09 249.39,324.59 254.69,328.89 241.79,329.83" fill="#161616" stroke="#161616" stroke-width="0.6" />
<polygon points="191.05,277.59 198.43,265.89 204.01,271.26 196.21,282.01" fill="#2a2a2a" stroke="#2a2a2a" stroke-width="0.6" />
<polygon points="196.21,282.01 204.01,271.26 209.57,276.64 201.36,286.44" fill="#2a2a2a" stroke="#2a2a2a" stroke-width="0.6" />
<polygon points="201.36,286.44 209.57,276.64 215.18,281.95 206.55,290.82" fill="#2a2a2a" stroke="#2a2a2a" stroke-width="0.6" />
<polygon points="206.55,290.82 215.18,281.95 221.41,286.61 212.21,294.71" fill="#2a2a2a" stroke="#2a2a2a" stroke-width="0.6" />
<polygon points="212.21,294.71 221.41,286.61 227.64,291.26 217.86,298.59" fill="#2a2a2a" stroke="#2a2a2a" stroke-width="0.6" />
<polygon points="217.86,298.59 227.64,291.26 233.39,296.41 223.15,302.85" fill="#161616" stroke="#161616" stroke-width="0.6" />
<polygon points="223.15,302.85 233.39,296.41 238.83,301.87 228.22,307.35" fill="#161616" stroke="#161616" stroke-width="0.6" />
<polygon points="228.22,307.35 238.83,301.87 244.51,307.14 233.46,311.7" fill="#161616" stroke="#161616" stroke-width="0.6" />
<polygon points="233.46,311.7 244.51,307.14 250.31,312.32 238.79,315.97" fill="#161616" stroke="#161616" stroke-width="0.6" />
<polygon points="238.79,315.97 250.31,312.32 256.06,317.53 244.09,320.28" fill="#161616" stroke="#161616" stroke-width="0.6" />
<polygon points="244.09,320.28 256.06,317.53 261.82,322.74 249.39,324.59" fill="#161616" stroke="#161616" stroke-width="0.6" />
<polygon points="249.39,324.59 261.82,322.74 267.58,327.96 254.69,328.89" fill="#161616" stroke="#161616" stroke-width="0.6" />
<polygon points="198.43,265.89 208.42,255.97 214.19,262.12 204.01,271.26" fill="#2a2a2a" stroke="#2a2a2a" stroke-width="0.6" />
<polygon points="204.01,271.26 214.19,262.12 219.94,268.28 209.57,276.64" fill="#2a2a2a" stroke="#2a2a2a" stroke-width="0.6" />
<polygon points="209.57,276.64 219.94,268.28 225.76,274.36 215.18,281.95" fill="#2a2a2a" stroke="#2a2a2a" stroke-width="0.6" />
<polygon points="215.18,281.95 225.76,274.36 232.34,279.62 221.41,286.61" fill="#2a2a2a" stroke="#2a2a2a" stroke-width="0.6" />
<polygon points="221.41,286.61 232.34,279.62 238.93,284.87 227.64,291.26" fill="#2a2a2a" stroke="#2a2a2a" stroke-width="0.6" />
<polygon points="227.64,291.26 238.93,284.87 244.92,290.75 233.39,296.41" fill="#161616" stroke="#161616" stroke-width="0.6" />
<polygon points="233.39,296.41 244.92,290.75 250.52,297.02 238.83,301.87" fill="#161616" stroke="#161616" stroke-width="0.6" />
<polygon points="238.83,301.87 250.52,297.02 256.41,303.05 244.51,307.14" fill="#161616" stroke="#161616" stroke-width="0.6" />
<polygon points="244.51,307.14 256.41,303.05 262.46,308.96 250.31,312.32" fill="#161616" stroke="#161616" stroke-width="0.6" />
<polygon points="250.31,312.32 262.46,308.96 268.46,314.91 256.06,317.53" fill="#161616" stroke="#161616" stroke-width="0.6" />
<polygon points="256.06,317.53 268.46,314.91 274.46,320.87 261.82,322.74" fill="#161616" stroke="#161616" stroke-width="0.6" />
<polygon points="261.82,322.74 274.46,320.87 280.46,326.82 267.58,327.96" fill="#161616" stroke="#161616" stroke-width="0.6" />
<polygon points="208.42,255.97 219.46,247.24 225.33,254.01 214.19,262.12" fill="#2a2a2a" stroke="#2a2a2a" stroke-width="0.6" />
<polygon points="214.19,262.12 225.33,254.01 231.18,260.78 219.94,268.28" fill="#2a2a2a" stroke="#2a2a2a" stroke-width="0.6" />
<polygon points="219.94,268.28 231.18,260.78 237.1,267.47 225.76,274.36" fill="#2a2a2a" stroke="#2a2a2a" stroke-width="0.6" />
<polygon points="225.76,274.36 237.1,267.47 243.94,273.16 232.34,279.62" fill="#2a2a2a" stroke="#2a2a2a" stroke-width="0.6" />
<polygon points="232.34,279.62 243.94,273.16 250.79,278.85 238.93,284.87" fill="#2a2a2a" stroke="#2a2a2a" stroke-width="0.6" />
<polygon points="238.93,284.87 250.79,278.85 256.92,285.28 244.92,290.75" fill="#161616" stroke="#161616" stroke-width="0.6" />
<polygon points="244.92,290.75 256.92,285.28 262.59,292.19 250.52,297.02" fill="#161616" stroke="#161616" stroke-width="0.6" />
<polygon points="250.52,297.02 262.59,292.19 268.61,298.81 256.41,303.05" fill="#161616" stroke="#161616" stroke-width="0.6" />
<polygon points="256.41,303.05 268.61,298.81 274.81,305.28 262.46,308.96" fill="#161616" stroke="#161616" stroke-width="0.6" />
<polygon points="262.46,308.96 274.81,305.28 280.95,311.81 268.46,314.91" fill="#161616" stroke="#161616" stroke-width="0.6" />
<polygon points="268.46,314.91 280.95,311.81 287.09,318.34 274.46,320.87" fill="#161616" stroke="#161616" stroke-width="0.6" />
<polygon points="274.46,320.87 287.09,318.34 293.24,324.87 280.46,326.82" fill="#161616" stroke="#161616" stroke-width="0.6" />
<polygon points="219.46,247.24 230.85,238.97 236.79,246.31 225.33,254.01" fill="#2a2a2a" stroke="#2a2a2a" stroke-width="0.6" />
<polygon points="225.33,254.01 236.79,246.31 242.7,253.66 231.18,260.78" fill="#2a2a2a" stroke="#2a2a2a" stroke-width="0.6" />
<polygon points="231.18,260.78 242.7,253.66 248.7,260.91 237.1,267.47" fill="#2a2a2a" stroke="#2a2a2a" stroke-width="0.6" />
<polygon points="237.1,267.47 248.7,260.91 255.78,267 243.94,273.16" fill="#2a2a2a" stroke="#2a2a2a" stroke-width="0.6" />
<polygon points="243.94,273.16 255.78,267 262.86,273.08 250.79,278.85" fill="#2a2a2a" stroke="#2a2a2a" stroke-width="0.6" />
<polygon points="250.79,278.85 262.86,273.08 269.1,280.04 256.92,285.28" fill="#161616" stroke="#161616" stroke-width="0.6" />
<polygon points="256.92,285.28 269.1,280.04 274.81,287.55 262.59,292.19" fill="#161616" stroke="#161616" stroke-width="0.6" />
<polygon points="262.59,292.19 274.81,287.55 280.92,294.72 268.61,298.81" fill="#161616" stroke="#161616" stroke-width="0.6" />
<polygon points="268.61,298.81 280.92,294.72 287.24,301.72 274.81,305.28" fill="#161616" stroke="#161616" stroke-width="0.6" />
<polygon points="274.81,305.28 287.24,301.72 293.5,308.79 280.95,311.81" fill="#161616" stroke="#161616" stroke-width="0.6" />
<polygon points="280.95,311.81 293.5,308.79 299.76,315.85 287.09,318.34" fill="#161616" stroke="#161616" stroke-width="0.6" />
<polygon points="287.09,318.34 299.76,315.85 306.02,322.92 293.24,324.87" fill="#161616" stroke="#161616" stroke-width="0.6" />
<polygon points="230.85,238.97 244.19,235.6 250.03,243.12 236.79,246.31" fill="#2a2a2a" stroke="#2a2a2a" stroke-width="0.6" />
<polygon points="236.79,246.31 250.03,243.12 255.85,250.67 242.7,253.66" fill="#2a2a2a" stroke="#2a2a2a" stroke-width="0.6" />
<polygon points="242.7,253.66 255.85,250.67 261.77,258.08 248.7,260.91" fill="#2a2a2a" stroke="#2a2a2a" stroke-width="0.6" />
<polygon points="248.7,260.91 261.77,258.08 268.92,264.18 255.78,267" fill="#2a2a2a" stroke="#2a2a2a" stroke-width="0.6" />
<polygon points="255.78,267 268.92,264.18 276.08,270.27 262.86,273.08" fill="#2a2a2a" stroke="#2a2a2a" stroke-width="0.6" />
<polygon points="262.86,273.08 276.08,270.27 282.27,277.35 269.1,280.04" fill="#161616" stroke="#161616" stroke-width="0.6" />
<polygon points="269.1,280.04 282.27,277.35 287.85,285.07 274.81,287.55" fill="#161616" stroke="#161616" stroke-width="0.6" />
<polygon points="274.81,287.55 287.85,285.07 293.9,292.4 280.92,294.72" fill="#161616" stroke="#161616" stroke-width="0.6" />
<polygon points="280.92,294.72 293.9,292.4 300.19,299.54 287.24,301.72" fill="#161616" stroke="#161616" stroke-width="0.6" />
<polygon points="287.24,301.72 300.19,299.54 306.4,306.75 293.5,308.79" fill="#161616" stroke="#161616" stroke-width="0.6" />
<polygon points="293.5,308.79 306.4,306.75 312.61,313.96 299.76,315.85" fill="#161616" stroke="#161616" stroke-width="0.6" />
<polygon points="299.76,315.85 312.61,313.96 318.83,321.17 306.02,322.92" fill="#161616" stroke="#161616" stroke-width="0.6" />
<polygon points="244.19,235.6 258.17,233.95 263.88,241.54 250.03,243.12" fill="#2a2a2a" stroke="#2a2a2a" stroke-width="0.6" />
<polygon points="250.03,243.12 263.88,241.54 269.55,249.16 255.85,250.67" fill="#2a2a2a" stroke="#2a2a2a" stroke-width="0.6" />
<polygon points="255.85,250.67 269.55,249.16 275.33,256.63 261.77,258.08" fill="#2a2a2a" stroke="#2a2a2a" stroke-width="0.6" />
<polygon points="261.77,258.08 275.33,256.63 282.51,262.61 268.92,264.18" fill="#2a2a2a" stroke="#2a2a2a" stroke-width="0.6" />
<polygon points="268.92,264.18 282.51,262.61 289.69,268.59 276.08,270.27" fill="#2a2a2a" stroke="#2a2a2a" stroke-width="0.6" />
<polygon points="276.08,270.27 289.69,268.59 295.79,275.69 282.27,277.35" fill="#161616" stroke="#161616" stroke-width="0.6" />
<polygon points="282.27,277.35 295.79,275.69 301.19,283.5 287.85,285.07" fill="#161616" stroke="#161616" stroke-width="0.6" />
<polygon points="287.85,285.07 301.19,283.5 307.12,290.88 293.9,292.4" fill="#161616" stroke="#161616" stroke-width="0.6" />
<polygon points="293.9,292.4 307.12,290.88 313.33,298.04 300.19,299.54" fill="#161616" stroke="#161616" stroke-width="0.6" />
<polygon points="300.19,299.54 313.33,298.04 319.44,305.28 306.4,306.75" fill="#161616" stroke="#161616" stroke-width="0.6" />
<polygon points="306.4,306.75 319.44,305.28 325.56,312.52 312.61,313.96" fill="#161616" stroke="#161616" stroke-width="0.6" />
<polygon points="312.61,313.96 325.56,312.52 331.68,319.76 318.83,321.17" fill="#161616" stroke="#161616" stroke-width="0.6" />
<polygon points="258.17,233.95 272.17,232.39 277.73,240.04 263.88,241.54" fill="#2a2a2a" stroke="#2a2a2a" stroke-width="0.6" />
<polygon points="263.88,241.54 277.73,240.04 283.26,247.71 269.55,249.16" fill="#2a2a2a" stroke="#2a2a2a" stroke-width="0.6" />
<polygon points="269.55,249.16 283.26,247.71 288.91,255.23 275.33,256.63" fill="#2a2a2a" stroke="#2a2a2a" stroke-width="0.6" />
<polygon points="275.33,256.63 288.91,255.23 296.1,261.09 282.51,262.61" fill="#2a2a2a" stroke="#2a2a2a" stroke-width="0.6" />
<polygon points="282.51,262.61 296.1,261.09 303.3,266.95 289.69,268.59" fill="#2a2a2a" stroke="#2a2a2a" stroke-width="0.6" />
<polygon points="289.69,268.59 303.3,266.95 309.3,274.05 295.79,275.69" fill="#161616" stroke="#161616" stroke-width="0.6" />
<polygon points="295.79,275.69 309.3,274.05 314.53,281.94 301.19,283.5" fill="#161616" stroke="#161616" stroke-width="0.6" />
<polygon points="301.19,283.5 314.53,281.94 320.34,289.34 307.12,290.88" fill="#161616" stroke="#161616" stroke-width="0.6" />
<polygon points="307.12,290.88 320.34,289.34 326.46,296.51 313.33,298.04" fill="#161616" stroke="#161616" stroke-width="0.6" />
<polygon points="313.33,298.04 326.46,296.51 332.48,303.77 319.44,305.28" fill="#161616" stroke="#161616" stroke-width="0.6" />
<polygon points="319.44,305.28 332.48,303.77 338.5,311.03 325.56,312.52" fill="#161616" stroke="#161616" stroke-width="0.6" />
<polygon points="325.56,312.52 338.5,311.03 344.52,318.29 331.68,319.76" fill="#161616" stroke="#161616" stroke-width="0.6" />
<polygon points="272.17,232.39 286.17,231.66 291.58,239.23 277.73,240.04" fill="#2a2a2a" stroke="#2a2a2a" stroke-width="0.6" />
<polygon points="277.73,240.04 291.58,239.23 296.94,246.83 283.26,247.71" fill="#2a2a2a" stroke="#2a2a2a" stroke-width="0.6" />
<polygon points="283.26,247.71 296.94,246.83 302.44,254.26 288.91,255.23" fill="#2a2a2a" stroke="#2a2a2a" stroke-width="0.6" />
<polygon points="288.91,255.23 302.44,254.26 309.65,259.87 296.1,261.09" fill="#2a2a2a" stroke="#2a2a2a" stroke-width="0.6" />
<polygon points="296.1,261.09 309.65,259.87 316.85,265.48 303.3,266.95" fill="#2a2a2a" stroke="#2a2a2a" stroke-width="0.6" />
<polygon points="303.3,266.95 316.85,265.48 322.74,272.44 309.3,274.05" fill="#161616" stroke="#161616" stroke-width="0.6" />
<polygon points="309.3,274.05 322.74,272.44 327.78,280.28 314.53,281.94" fill="#161616" stroke="#161616" stroke-width="0.6" />
<polygon points="314.53,281.94 327.78,280.28 333.46,287.59 320.34,289.34" fill="#161616" stroke="#161616" stroke-width="0.6" />
<polygon points="320.34,289.34 333.46,287.59 339.47,294.64 326.46,296.51" fill="#161616" stroke="#161616" stroke-width="0.6" />
<polygon points="326.46,296.51 339.47,294.64 345.38,301.78 332.48,303.77" fill="#161616" stroke="#161616" stroke-width="0.6" />
<polygon points="332.48,303.77 345.38,301.78 351.29,308.93 338.5,311.03" fill="#161616" stroke="#161616" stroke-width="0.6" />
<polygon points="338.5,311.03 351.29,308.93 357.2,316.08 344.52,318.29" fill="#161616" stroke="#161616" stroke-width="0.6" />
<polygon points="286.17,231.66 298.9,236.8 304.22,243.64 291.58,239.23" fill="#2a2a2a" stroke="#2a2a2a" stroke-width="0.6" />
<polygon points="291.58,239.23 304.22,243.64 309.49,250.51 296.94,246.83" fill="#2a2a2a" stroke="#2a2a2a" stroke-width="0.6" />
<polygon points="296.94,246.83 309.49,250.51 314.9,257.18 302.44,254.26" fill="#2a2a2a" stroke="#2a2a2a" stroke-width="0.6" />
<polygon points="302.44,254.26 314.9,257.18 322.18,261.88 309.65,259.87" fill="#2a2a2a" stroke="#2a2a2a" stroke-width="0.6" />
<polygon points="309.65,259.87 322.18,261.88 329.46,266.57 316.85,265.48" fill="#2a2a2a" stroke="#2a2a2a" stroke-width="0.6" />
<polygon points="316.85,265.48 329.46,266.57 335.3,272.75 322.74,272.44" fill="#161616" stroke="#161616" stroke-width="0.6" />
<polygon points="322.74,272.44 335.3,272.75 340.21,279.88 327.78,280.28" fill="#161616" stroke="#161616" stroke-width="0.6" />
<polygon points="327.78,280.28 340.21,279.88 345.83,286.43 333.46,287.59" fill="#161616" stroke="#161616" stroke-width="0.6" />
<polygon points="333.46,287.59 345.83,286.43 351.81,292.68 339.47,294.64" fill="#161616" stroke="#161616" stroke-width="0.6" />
<polygon points="339.47,294.64 351.81,292.68 357.67,299.06 345.38,301.78" fill="#161616" stroke="#161616" stroke-width="0.6" />
<polygon points="345.38,301.78 357.67,299.06 363.54,305.43 351.29,308.93" fill="#161616" stroke="#161616" stroke-width="0.6" />
<polygon points="351.29,308.93 363.54,305.43 369.4,311.8 357.2,316.08" fill="#161616" stroke="#161616" stroke-width="0.6" />
<polyline points="153.6,287.4 156.72,289.61 159.84,291.83 162.96,294.04 166.08,296.26 169.2,298.47 172.32,300.69 175.44,302.9 178.56,305.12 181.68,307.33 184.8,309.55 187.92,311.76 191.04,313.98 194.16,316.19 197.28,318.41 200.4,320.62 203.52,322.84 206.64,325.06 209.76,327.27 212.88,329.49 216,331.7" fill="none" stroke="#00ff00" stroke-width="1.0" shape-rendering="geometricPrecision"/>
<polyline points="172.32,285.93 175.32,288.2 178.33,290.46 181.34,292.73 184.33,295 187.36,297.24 190.49,299.36 193.63,301.49 196.77,303.61 199.9,305.73 202.88,308.02 205.86,310.3 208.84,312.59 211.87,314.83 214.93,317.05 217.98,319.28 221.02,321.52 224.06,323.75 227.11,325.98 230.15,328.22 233.19,330.45" fill="none" stroke="#00ff00" stroke-width="1.0" shape-rendering="geometricPrecision"/>
<polyline points="189.2,281.9 192.18,284.34 195.17,286.79 198.15,289.23 201.11,291.69 204.14,294.09 207.38,296.25 210.63,298.4 213.88,300.56 217.12,302.73 220.05,305.21 222.98,307.69 225.91,310.17 228.94,312.57 232.04,314.92 235.1,317.3 238.16,319.68 241.21,322.06 244.27,324.44 247.33,326.82 250.39,329.2" fill="none" stroke="#00ff00" stroke-width="1.0" shape-rendering="geometricPrecision"/>
<polyline points="198.43,265.89 201.78,269.11 205.13,272.33 208.47,275.56 211.78,278.8 215.18,281.95 218.92,284.74 222.66,287.54 226.39,290.33 230.13,293.13 233.39,296.41 236.66,299.69 239.92,302.96 243.34,306.12 246.85,309.2 250.31,312.32 253.76,315.45 257.22,318.57 260.67,321.7 264.13,324.83 267.58,327.96" fill="none" stroke="#00ff00" stroke-width="1.0" shape-rendering="geometricPrecision"/>
<polyline points="212.01,252.95 215.5,256.77 218.98,260.59 222.46,264.41 225.91,268.26 229.47,271.98 233.48,275.23 237.49,278.48 241.49,281.72 245.49,284.98 248.87,288.87 252.25,292.77 255.63,296.66 259.21,300.39 262.92,304.02 266.55,307.71 270.19,311.4 273.82,315.09 277.45,318.79 281.08,322.48 284.72,326.17" fill="none" stroke="#00ff00" stroke-width="1.0" shape-rendering="geometricPrecision"/>
<polyline points="226.99,241.63 230.54,245.92 234.09,250.22 237.63,254.51 241.13,258.85 244.78,263.02 248.98,266.6 253.19,270.18 257.4,273.76 261.59,277.35 265.01,281.74 268.43,286.13 271.85,290.52 275.52,294.7 279.34,298.75 283.08,302.88 286.82,307.02 290.55,311.16 294.29,315.3 298.02,319.43 301.76,323.57" fill="none" stroke="#00ff00" stroke-width="1.0" shape-rendering="geometricPrecision"/>
<polyline points="244.19,235.6 247.7,240.11 251.2,244.63 254.7,249.15 258.15,253.71 261.77,258.08 266.06,261.74 270.35,265.39 274.65,269.05 278.92,272.72 282.27,277.35 285.62,281.98 288.97,286.61 292.62,290.99 296.45,295.22 300.19,299.54 303.92,303.86 307.64,308.19 311.37,312.52 315.1,316.85 318.83,321.17" fill="none" stroke="#00ff00" stroke-width="1.0" shape-rendering="geometricPrecision"/>
<polyline points="262.83,233.4 266.23,237.97 269.63,242.54 273.01,247.11 276.33,251.73 279.85,256.14 284.17,259.71 288.48,263.27 292.79,266.84 297.08,270.43 300.29,275.13 303.5,279.83 306.71,284.54 310.27,288.94 314.04,293.18 317.7,297.52 321.35,301.87 325.01,306.22 328.66,310.57 332.31,314.92 335.96,319.27" fill="none" stroke="#00ff00" stroke-width="1.0" shape-rendering="geometricPrecision"/>
<polyline points="281.5,231.47 284.78,236.07 288.07,240.67 291.33,245.28 294.53,249.95 297.96,254.36 302.28,257.82 306.61,261.28 310.94,264.74 315.24,268.22 318.31,272.98 321.38,277.73 324.44,282.49 327.91,286.91 331.62,291.14 335.21,295.48 338.78,299.83 342.35,304.19 345.93,308.54 349.5,312.89 353.07,317.25" fill="none" stroke="#00ff00" stroke-width="1.0" shape-rendering="geometricPrecision"/>
<polyline points="298.9,236.8 302.09,240.9 305.28,245 308.46,249.11 311.55,253.29 314.9,257.18 319.27,260 323.64,262.81 328,265.63 332.35,268.47 335.3,272.75 338.25,277.02 341.2,281.3 344.6,285.2 348.27,288.87 351.81,292.68 355.33,296.51 358.84,300.33 362.36,304.15 365.88,307.98 369.4,311.8" fill="none" stroke="#00ff00" stroke-width="1.0" shape-rendering="geometricPrecision"/>
<polyline points="153.6,287.4 162.02,286.74 170.45,286.08 178.87,285.42 187.29,284.76 191.05,277.59 194.44,269.86 200.43,263.91 206.43,257.95 212.76,252.38 219.46,247.24 226.21,242.16 233.17,237.37 241.39,235.93 249.78,234.94 258.17,233.95 266.56,232.98 274.97,232.1 283.37,231.38 291.75,232.3 298.9,236.8" fill="none" stroke="#00ff00" stroke-width="1.0" shape-rendering="geometricPrecision"/>
<polyline points="157.76,290.35 166.12,289.72 174.47,289.09 182.83,288.46 191.18,287.83 195.18,281.12 198.84,273.9 204.92,268.33 211.01,262.76 217.41,257.5 224.16,252.65 230.95,247.86 237.93,243.33 246.09,241.94 254.41,240.98 262.74,240.02 271.06,239.08 279.4,238.22 287.73,237.5 296.02,238.21 303.15,242.27" fill="none" stroke="#00ff00" stroke-width="1.0" shape-rendering="geometricPrecision"/>
<polyline points="161.92,293.31 170.21,292.71 178.49,292.1 186.78,291.5 195.07,290.9 199.31,284.66 203.24,277.94 209.42,272.75 215.6,267.56 222.06,262.63 228.85,258.06 235.68,253.55 242.69,249.29 250.79,247.94 259.05,247.02 267.3,246.1 275.56,245.18 283.82,244.35 292.09,243.63 300.28,244.13 307.41,247.74" fill="none" stroke="#00ff00" stroke-width="1.0" shape-rendering="geometricPrecision"/>
<polyline points="166.08,296.26 174.29,295.69 182.51,295.13 190.72,294.56 198.93,293.99 203.41,288.22 207.6,282 213.87,277.2 220.14,272.4 226.66,267.78 233.49,263.51 240.35,259.29 247.38,255.3 255.42,254 263.6,253.12 271.78,252.23 279.97,251.35 288.16,250.54 296.34,249.83 304.44,250.13 311.55,253.29" fill="none" stroke="#00ff00" stroke-width="1.0" shape-rendering="geometricPrecision"/>
<polyline points="170.24,299.21 178.41,298.64 186.59,298.08 194.76,297.51 202.93,296.94 207.68,291.6 212.17,285.85 218.56,281.4 224.95,276.95 231.57,272.62 238.47,268.61 245.39,264.63 252.47,260.87 260.48,259.6 268.63,258.71 276.77,257.83 284.91,256.94 293.06,256.13 301.2,255.38 309.23,255.44 316.36,258.12" fill="none" stroke="#00ff00" stroke-width="1.0" shape-rendering="geometricPrecision"/>
<polyline points="174.4,302.17 182.58,301.54 190.77,300.92 198.95,300.29 207.13,299.67 212.21,294.71 217.03,289.37 223.6,285.22 230.16,281.07 236.93,276.97 243.94,273.16 250.99,269.39 258.17,265.8 266.2,264.49 274.36,263.55 282.51,262.61 290.66,261.67 298.82,260.79 306.97,259.96 314.99,259.73 322.18,261.88" fill="none" stroke="#00ff00" stroke-width="1.0" shape-rendering="geometricPrecision"/>
<polyline points="178.56,305.12 186.75,304.44 194.95,303.76 203.14,303.08 211.34,302.4 216.73,297.82 221.9,292.9 228.64,289.04 235.38,285.19 242.29,281.32 249.42,277.71 256.59,274.14 263.87,270.73 271.92,269.38 280.09,268.39 288.25,267.4 296.42,266.4 304.59,265.46 312.74,264.55 320.74,264.01 328,265.63" fill="none" stroke="#00ff00" stroke-width="1.0" shape-rendering="geometricPrecision"/>
<polyline points="182.72,308.07 190.9,307.36 199.08,306.65 207.26,305.94 215.44,305.23 221.13,301.05 226.62,296.58 233.51,293.04 240.39,289.51 247.42,285.9 254.66,282.52 261.91,279.17 269.28,275.97 277.32,274.6 285.47,273.59 293.62,272.57 301.77,271.54 309.93,270.56 318.06,269.59 326.03,268.79 333.33,269.9" fill="none" stroke="#00ff00" stroke-width="1.0" shape-rendering="geometricPrecision"/>
<polyline points="186.88,311.03 194.98,310.36 203.07,309.69 211.17,309.02 219.26,308.35 225.18,304.65 230.93,300.69 237.89,297.55 244.85,294.41 251.93,291.13 259.19,288.04 266.47,284.99 273.84,282.07 281.82,280.76 289.88,279.79 297.95,278.82 306.01,277.83 314.08,276.89 322.13,275.93 329.99,274.93 337.26,275.6" fill="none" stroke="#00ff00" stroke-width="1.0" shape-rendering="geometricPrecision"/>
<polyline points="191.04,313.98 199.05,313.35 207.06,312.73 215.07,312.1 223.09,311.47 229.23,308.25 235.23,304.79 242.27,302.05 249.31,299.31 256.44,296.35 263.73,293.57 271.03,290.81 278.41,288.17 286.31,286.92 294.29,286 302.27,285.06 310.25,284.12 318.24,283.21 326.2,282.26 333.95,281.06 341.2,281.3" fill="none" stroke="#00ff00" stroke-width="1.0" shape-rendering="geometricPrecision"/>
<polyline points="195.2,316.93 203.16,316.32 211.12,315.71 219.09,315.09 227.05,314.48 233.46,311.7 239.74,308.73 246.89,306.35 254.04,303.97 261.26,301.32 268.61,298.81 275.97,296.32 283.39,293.92 291.25,292.7 299.19,291.79 307.12,290.88 315.05,289.94 322.99,289.04 330.9,288.08 338.57,286.65 345.83,286.43" fill="none" stroke="#00ff00" stroke-width="1.0" shape-rendering="geometricPrecision"/>
<polyline points="199.36,319.89 207.28,319.28 215.2,318.67 223.13,318.06 231.05,317.46 237.72,315.11 244.3,312.62 251.58,310.6 258.85,308.58 266.17,306.23 273.58,303.98 281.01,301.74 288.49,299.59 296.31,298.39 304.21,297.49 312.1,296.59 319.99,295.66 327.89,294.76 335.75,293.77 343.36,292.11 350.63,291.41" fill="none" stroke="#00ff00" stroke-width="1.0" shape-rendering="geometricPrecision"/>
<polyline points="203.52,322.84 211.4,322.24 219.27,321.65 227.15,321.05 235.02,320.46 241.97,318.56 248.83,316.55 256.22,314.89 263.61,313.24 271.02,311.18 278.49,309.2 285.98,307.23 293.51,305.32 301.3,304.16 309.15,303.27 317,302.38 324.84,301.46 332.69,300.57 340.5,299.56 348.04,297.68 355.33,296.51" fill="none" stroke="#00ff00" stroke-width="1.0" shape-rendering="geometricPrecision"/>
<polyline points="207.68,325.79 215.51,325.21 223.34,324.62 231.17,324.04 239,323.45 246.21,322 253.36,320.48 260.87,319.19 268.38,317.9 275.87,316.13 283.41,314.42 290.96,312.72 298.53,311.06 306.28,309.92 314.09,309.05 321.89,308.17 329.69,307.27 337.49,306.37 345.26,305.35 352.72,303.24 360.02,301.61" fill="none" stroke="#00ff00" stroke-width="1.0" shape-rendering="geometricPrecision"/>
<polyline points="211.84,328.75 219.62,328.17 227.41,327.6 235.19,327.03 242.97,326.45 250.45,325.45 257.89,324.4 265.52,323.48 273.14,322.55 280.72,321.09 288.32,319.65 295.93,318.21 303.55,316.79 311.27,315.69 319.03,314.83 326.78,313.97 334.54,313.07 342.29,312.18 350.01,311.14 357.4,308.8 364.71,306.7" fill="none" stroke="#00ff00" stroke-width="1.0" shape-rendering="geometricPrecision"/>
<polyline points="216,331.7 223.74,331.14 231.47,330.58 239.21,330.02 246.95,329.45 254.69,328.89 262.42,328.33 270.16,327.77 277.9,327.21 285.57,326.04 293.24,324.87 300.91,323.7 308.57,322.53 316.26,321.45 323.97,320.61 331.68,319.76 339.38,318.88 347.09,317.99 354.76,316.93 362.08,314.37 369.4,311.8" fill="none" stroke="#00ff00" stroke-width="1.0" shape-rendering="geometricPrecision"/>
<rect x="152.6" y="286.4" width="2" height="2" fill="#00ff00"/>
<rect x="156.76" y="289.35" width="2" height="2" fill="#00ff00"/>
<rect x="160.92" y="292.31" width="2" height="2" fill="#00ff00"/>
<rect x="165.08" y="295.26" width="2" height="2" fill="#00ff00"/>
<rect x="169.24" y="298.21" width="2" height="2" fill="#00ff00"/>
<rect x="173.4" y="301.17" width="2" height="2" fill="#00ff00"/>
<rect x="177.56" y="304.12" width="2" height="2" fill="#00ff00"/>
<rect x="181.72" y="307.07" width="2" height="2" fill="#00ff00"/>
<rect x="185.88" y="310.03" width="2" height="2" fill="#00ff00"/>
<rect x="190.04" y="312.98" width="2" height="2" fill="#00ff00"/>
<rect x="194.2" y="315.93" width="2" height="2" fill="#00ff00"/>
<rect x="198.36" y="318.89" width="2" height="2" fill="#00ff00"/>
<rect x="202.52" y="321.84" width="2" height="2" fill="#00ff00"/>
<rect x="206.68" y="324.79" width="2" height="2" fill="#00ff00"/>
<rect x="210.84" y="327.75" width="2" height="2" fill="#00ff00"/>
<rect x="215" y="330.7" width="2" height="2" fill="#00ff00"/>
<rect x="171.32" y="284.93" width="2" height="2" fill="#00ff00"/>
<rect x="175.33" y="287.95" width="2" height="2" fill="#00ff00"/>
<rect x="179.34" y="290.97" width="2" height="2" fill="#00ff00"/>
<rect x="183.33" y="294" width="2" height="2" fill="#00ff00"/>
<rect x="187.4" y="296.95" width="2" height="2" fill="#00ff00"/>
<rect x="191.59" y="299.78" width="2" height="2" fill="#00ff00"/>
<rect x="195.77" y="302.61" width="2" height="2" fill="#00ff00"/>
<rect x="199.9" y="305.5" width="2" height="2" fill="#00ff00"/>
<rect x="203.87" y="308.54" width="2" height="2" fill="#00ff00"/>
<rect x="207.84" y="311.59" width="2" height="2" fill="#00ff00"/>
<rect x="211.89" y="314.57" width="2" height="2" fill="#00ff00"/>
<rect x="215.96" y="317.54" width="2" height="2" fill="#00ff00"/>
<rect x="220.02" y="320.52" width="2" height="2" fill="#00ff00"/>
<rect x="224.08" y="323.49" width="2" height="2" fill="#00ff00"/>
<rect x="228.14" y="326.47" width="2" height="2" fill="#00ff00"/>
<rect x="232.19" y="329.45" width="2" height="2" fill="#00ff00"/>
<rect x="188.2" y="280.9" width="2" height="2" fill="#00ff00"/>
<rect x="192.18" y="284.16" width="2" height="2" fill="#00ff00"/>
<rect x="196.16" y="287.42" width="2" height="2" fill="#00ff00"/>
<rect x="200.11" y="290.69" width="2" height="2" fill="#00ff00"/>
<rect x="204.22" y="293.81" width="2" height="2" fill="#00ff00"/>
<rect x="208.55" y="296.69" width="2" height="2" fill="#00ff00"/>
<rect x="212.88" y="299.56" width="2" height="2" fill="#00ff00"/>
<rect x="217.09" y="302.55" width="2" height="2" fill="#00ff00"/>
<rect x="221" y="305.86" width="2" height="2" fill="#00ff00"/>
<rect x="224.91" y="309.17" width="2" height="2" fill="#00ff00"/>
<rect x="228.98" y="312.35" width="2" height="2" fill="#00ff00"/>
<rect x="233.08" y="315.5" width="2" height="2" fill="#00ff00"/>
<rect x="237.16" y="318.68" width="2" height="2" fill="#00ff00"/>
<rect x="241.23" y="321.85" width="2" height="2" fill="#00ff00"/>
<rect x="245.31" y="325.03" width="2" height="2" fill="#00ff00"/>
<rect x="249.39" y="328.2" width="2" height="2" fill="#00ff00"/>
<rect x="197.43" y="264.89" width="2" height="2" fill="#00ff00"/>
<rect x="201.9" y="269.19" width="2" height="2" fill="#00ff00"/>
<rect x="206.36" y="273.48" width="2" height="2" fill="#00ff00"/>
<rect x="210.78" y="277.8" width="2" height="2" fill="#00ff00"/>
<rect x="215.43" y="281.88" width="2" height="2" fill="#00ff00"/>
<rect x="220.41" y="285.61" width="2" height="2" fill="#00ff00"/>
<rect x="225.39" y="289.33" width="2" height="2" fill="#00ff00"/>
<rect x="230.21" y="293.22" width="2" height="2" fill="#00ff00"/>
<rect x="234.57" y="297.59" width="2" height="2" fill="#00ff00"/>
<rect x="238.92" y="301.96" width="2" height="2" fill="#00ff00"/>
<rect x="243.51" y="306.14" width="2" height="2" fill="#00ff00"/>
<rect x="248.15" y="310.28" width="2" height="2" fill="#00ff00"/>
<rect x="252.76" y="314.45" width="2" height="2" fill="#00ff00"/>
<rect x="257.37" y="318.62" width="2" height="2" fill="#00ff00"/>
<rect x="261.97" y="322.79" width="2" height="2" fill="#00ff00"/>
<rect x="266.58" y="326.96" width="2" height="2" fill="#00ff00"/>
<rect x="211.01" y="251.95" width="2" height="2" fill="#00ff00"/>
<rect x="215.66" y="257.04" width="2" height="2" fill="#00ff00"/>
<rect x="220.31" y="262.13" width="2" height="2" fill="#00ff00"/>
<rect x="224.91" y="267.26" width="2" height="2" fill="#00ff00"/>
<rect x="229.8" y="272.07" width="2" height="2" fill="#00ff00"/>
<rect x="235.15" y="276.39" width="2" height="2" fill="#00ff00"/>
<rect x="240.49" y="280.72" width="2" height="2" fill="#00ff00"/>
<rect x="245.62" y="285.28" width="2" height="2" fill="#00ff00"/>
<rect x="250.13" y="290.47" width="2" height="2" fill="#00ff00"/>
<rect x="254.63" y="295.66" width="2" height="2" fill="#00ff00"/>
<rect x="259.45" y="300.6" width="2" height="2" fill="#00ff00"/>
<rect x="264.34" y="305.48" width="2" height="2" fill="#00ff00"/>
<rect x="269.19" y="310.4" width="2" height="2" fill="#00ff00"/>
<rect x="274.03" y="315.32" width="2" height="2" fill="#00ff00"/>
<rect x="278.87" y="320.25" width="2" height="2" fill="#00ff00"/>
<rect x="283.72" y="325.17" width="2" height="2" fill="#00ff00"/>
<rect x="225.99" y="240.63" width="2" height="2" fill="#00ff00"/>
<rect x="230.72" y="246.35" width="2" height="2" fill="#00ff00"/>
<rect x="235.46" y="252.08" width="2" height="2" fill="#00ff00"/>
<rect x="240.13" y="257.85" width="2" height="2" fill="#00ff00"/>
<rect x="245.18" y="263.22" width="2" height="2" fill="#00ff00"/>
<rect x="250.79" y="267.99" width="2" height="2" fill="#00ff00"/>
<rect x="256.4" y="272.76" width="2" height="2" fill="#00ff00"/>
<rect x="261.73" y="277.81" width="2" height="2" fill="#00ff00"/>
<rect x="266.29" y="283.67" width="2" height="2" fill="#00ff00"/>
<rect x="270.85" y="289.52" width="2" height="2" fill="#00ff00"/>
<rect x="275.79" y="295.05" width="2" height="2" fill="#00ff00"/>
<rect x="280.84" y="300.5" width="2" height="2" fill="#00ff00"/>
<rect x="285.82" y="306.02" width="2" height="2" fill="#00ff00"/>
<rect x="290.8" y="311.54" width="2" height="2" fill="#00ff00"/>
<rect x="295.78" y="317.05" width="2" height="2" fill="#00ff00"/>
<rect x="300.76" y="322.57" width="2" height="2" fill="#00ff00"/>
<rect x="243.19" y="234.6" width="2" height="2" fill="#00ff00"/>
<rect x="247.87" y="240.62" width="2" height="2" fill="#00ff00"/>
<rect x="252.54" y="246.63" width="2" height="2" fill="#00ff00"/>
<rect x="257.15" y="252.71" width="2" height="2" fill="#00ff00"/>
<rect x="262.2" y="258.3" width="2" height="2" fill="#00ff00"/>
<rect x="267.92" y="263.18" width="2" height="2" fill="#00ff00"/>
<rect x="273.65" y="268.05" width="2" height="2" fill="#00ff00"/>
<rect x="279.04" y="273.26" width="2" height="2" fill="#00ff00"/>
<rect x="283.5" y="279.44" width="2" height="2" fill="#00ff00"/>
<rect x="287.97" y="285.61" width="2" height="2" fill="#00ff00"/>
<rect x="292.9" y="291.4" width="2" height="2" fill="#00ff00"/>
<rect x="297.95" y="297.09" width="2" height="2" fill="#00ff00"/>
<rect x="302.92" y="302.86" width="2" height="2" fill="#00ff00"/>
<rect x="307.89" y="308.63" width="2" height="2" fill="#00ff00"/>
<rect x="312.86" y="314.4" width="2" height="2" fill="#00ff00"/>
<rect x="317.83" y="320.17" width="2" height="2" fill="#00ff00"/>
<rect x="261.83" y="232.4" width="2" height="2" fill="#00ff00"/>
<rect x="266.36" y="238.49" width="2" height="2" fill="#00ff00"/>
<rect x="270.89" y="244.58" width="2" height="2" fill="#00ff00"/>
<rect x="275.33" y="250.73" width="2" height="2" fill="#00ff00"/>
<rect x="280.29" y="256.33" width="2" height="2" fill="#00ff00"/>
<rect x="286.04" y="261.08" width="2" height="2" fill="#00ff00"/>
<rect x="291.79" y="265.84" width="2" height="2" fill="#00ff00"/>
<rect x="297.15" y="270.99" width="2" height="2" fill="#00ff00"/>
<rect x="301.43" y="277.26" width="2" height="2" fill="#00ff00"/>
<rect x="305.71" y="283.54" width="2" height="2" fill="#00ff00"/>
<rect x="310.53" y="289.36" width="2" height="2" fill="#00ff00"/>
<rect x="315.49" y="295.07" width="2" height="2" fill="#00ff00"/>
<rect x="320.35" y="300.87" width="2" height="2" fill="#00ff00"/>
<rect x="325.22" y="306.67" width="2" height="2" fill="#00ff00"/>
<rect x="330.09" y="312.47" width="2" height="2" fill="#00ff00"/>
<rect x="334.96" y="318.27" width="2" height="2" fill="#00ff00"/>
<rect x="280.5" y="230.47" width="2" height="2" fill="#00ff00"/>
<rect x="284.88" y="236.6" width="2" height="2" fill="#00ff00"/>
<rect x="289.25" y="242.74" width="2" height="2" fill="#00ff00"/>
<rect x="293.53" y="248.95" width="2" height="2" fill="#00ff00"/>
<rect x="298.4" y="254.52" width="2" height="2" fill="#00ff00"/>
<rect x="304.17" y="259.13" width="2" height="2" fill="#00ff00"/>
<rect x="309.94" y="263.74" width="2" height="2" fill="#00ff00"/>
<rect x="315.26" y="268.8" width="2" height="2" fill="#00ff00"/>
<rect x="319.35" y="275.15" width="2" height="2" fill="#00ff00"/>
<rect x="323.44" y="281.49" width="2" height="2" fill="#00ff00"/>
<rect x="328.15" y="287.32" width="2" height="2" fill="#00ff00"/>
<rect x="333.02" y="293.03" width="2" height="2" fill="#00ff00"/>
<rect x="337.78" y="298.83" width="2" height="2" fill="#00ff00"/>
<rect x="342.55" y="304.64" width="2" height="2" fill="#00ff00"/>
<rect x="347.31" y="310.44" width="2" height="2" fill="#00ff00"/>
<rect x="352.07" y="316.25" width="2" height="2" fill="#00ff00"/>
<rect x="297.9" y="235.8" width="2" height="2" fill="#00ff00"/>
<rect x="302.15" y="241.27" width="2" height="2" fill="#00ff00"/>
<rect x="306.41" y="246.74" width="2" height="2" fill="#00ff00"/>
<rect x="310.55" y="252.29" width="2" height="2" fill="#00ff00"/>
<rect x="315.36" y="257.12" width="2" height="2" fill="#00ff00"/>
<rect x="321.18" y="260.88" width="2" height="2" fill="#00ff00"/>
<rect x="327" y="264.63" width="2" height="2" fill="#00ff00"/>
<rect x="332.33" y="268.9" width="2" height="2" fill="#00ff00"/>
<rect x="336.26" y="274.6" width="2" height="2" fill="#00ff00"/>
<rect x="340.2" y="280.3" width="2" height="2" fill="#00ff00"/>
<rect x="344.83" y="285.43" width="2" height="2" fill="#00ff00"/>
<rect x="349.63" y="290.41" width="2" height="2" fill="#00ff00"/>
<rect x="354.33" y="295.51" width="2" height="2" fill="#00ff00"/>
<rect x="359.02" y="300.61" width="2" height="2" fill="#00ff00"/>
<rect x="363.71" y="305.7" width="2" height="2" fill="#00ff00"/>
<rect x="368.4" y="310.8" width="2" height="2" fill="#00ff00"/>
<text class="m" transform="translate(142,365.24) scale(0.8487654320987654,1)" text-anchor="start" font-size="10.8" fill="#20c020" opacity="0.8">g/r</text>
<rect x="613.5" y="222" width="246" height="146" fill="#000000" />
<line x1="613.5" y1="228.5" x2="616.5" y2="228.5" stroke="#646464" stroke-width="1" />
<line x1="613.5" y1="247.5" x2="616.5" y2="247.5" stroke="#646464" stroke-width="1" />
<line x1="613.5" y1="301.5" x2="616.5" y2="301.5" stroke="#646464" stroke-width="1" />
<line x1="613.5" y1="320.5" x2="616.5" y2="320.5" stroke="#646464" stroke-width="1" />
<line x1="613.5" y1="339.5" x2="616.5" y2="339.5" stroke="#646464" stroke-width="1" />
<rect x="613.5" y="223" width="245" height="1.2" fill="#c8c8c8" />
<g stroke="#3a8a3a" stroke-width="1" stroke-dasharray="3,2">
<line x1="627.1" y1="224" x2="627.1" y2="283"/>
<line x1="660.2" y1="224" x2="660.2" y2="283"/>
<line x1="667.5" y1="224" x2="667.5" y2="283"/>
<line x1="673.5" y1="224" x2="673.5" y2="283"/>
<line x1="682.5" y1="224" x2="682.5" y2="283"/>
<line x1="687.5" y1="224" x2="687.5" y2="283"/>
<line x1="691.5" y1="224" x2="691.5" y2="283"/>
<line x1="698.5" y1="224" x2="698.5" y2="283"/>
<line x1="812.5" y1="224" x2="812.5" y2="346"/>
<line x1="817.5" y1="224" x2="817.5" y2="346"/>
<line x1="822.5" y1="224" x2="822.5" y2="346"/>
<line x1="826.5" y1="224" x2="826.5" y2="346"/>
<line x1="829.5" y1="224" x2="829.5" y2="346"/>
<line x1="833.5" y1="224" x2="833.5" y2="346"/>
<line x1="837.5" y1="224" x2="837.5" y2="346"/>
<line x1="840.5" y1="224" x2="840.5" y2="346"/>
</g>
<line x1="780.9" y1="224" x2="780.9" y2="246" stroke="#4aa04a" stroke-width="1" />
<line x1="842.9" y1="224" x2="842.9" y2="347.6" stroke="#4aa04a" stroke-width="1" />
<g stroke="#2a5e2a" stroke-width="1" stroke-dasharray="2,4">
<line x1="627.33" y1="321.96" x2="705.15" y2="360.14"/>
<line x1="641.17" y1="320.92" x2="719" y2="359.08"/>
<line x1="655" y1="319.88" x2="732.85" y2="358.02"/>
<line x1="668.83" y1="318.83" x2="746.7" y2="356.97"/>
<line x1="682.67" y1="317.79" x2="760.55" y2="355.91"/>
<line x1="696.5" y1="316.75" x2="774.4" y2="354.85"/>
<line x1="710.33" y1="315.71" x2="788.25" y2="353.79"/>
<line x1="724.17" y1="314.67" x2="802.1" y2="352.73"/>
<line x1="738" y1="313.62" x2="815.95" y2="351.68"/>
<line x1="751.83" y1="312.58" x2="829.8" y2="350.62"/>
<line x1="765.67" y1="311.54" x2="843.65" y2="349.56"/>
<line x1="621.28" y1="326.82" x2="787.3" y2="314.3"/>
<line x1="629.06" y1="330.64" x2="795.1" y2="318.1"/>
<line x1="636.84" y1="334.46" x2="802.9" y2="321.9"/>
<line x1="644.62" y1="338.28" x2="810.7" y2="325.7"/>
<line x1="652.4" y1="342.1" x2="818.5" y2="329.5"/>
<line x1="660.18" y1="345.92" x2="826.3" y2="333.3"/>
<line x1="667.96" y1="349.74" x2="834.1" y2="337.1"/>
<line x1="675.74" y1="353.56" x2="841.9" y2="340.9"/>
<line x1="683.52" y1="357.38" x2="849.7" y2="344.7"/>
</g>
<polyline points="613.5,323 691.3,361.2 857.5,348.5" fill="none" stroke="#5cb05c" stroke-width="1" />
<line x1="813.5" y1="333" x2="857.5" y2="348.5" stroke="#4a9a4a" stroke-width="1" />
<polygon points="627.1,283.4 627.1,324 689.5,355 689.5,327.7" fill="#4c4c4c" stroke="none" stroke-width="1" />
<line x1="627.1" y1="283.4" x2="627.1" y2="324" stroke="#00ff00" stroke-width="1" />
<line x1="640.5" y1="292.91" x2="640.5" y2="330.66" stroke="#00ff00" stroke-width="1" />
<line x1="651.5" y1="300.72" x2="651.5" y2="336.12" stroke="#00ff00" stroke-width="1" />
<line x1="656.9" y1="304.56" x2="656.9" y2="338.8" stroke="#00ff00" stroke-width="1" />
<line x1="662.3" y1="308.39" x2="662.3" y2="341.49" stroke="#00ff00" stroke-width="1" />
<line x1="668.5" y1="312.79" x2="668.5" y2="344.57" stroke="#00ff00" stroke-width="1" />
<line x1="689.5" y1="327.7" x2="689.5" y2="355" stroke="#00ff00" stroke-width="1" />
<line x1="627.1" y1="324" x2="689.5" y2="355" stroke="#00ff00" stroke-width="1" />
<polygon points="627.1,283.4 641.14,282.3 646.2,286.05 632.3,287.09" fill="#2a2a2a" stroke="#2a2a2a" stroke-width="0.6" />
<polygon points="632.3,287.09 646.2,286.05 651.25,289.81 637.5,290.78" fill="#2a2a2a" stroke="#2a2a2a" stroke-width="0.6" />
<polygon points="637.5,290.78 651.25,289.81 656.32,293.55 642.7,294.47" fill="#2a2a2a" stroke="#2a2a2a" stroke-width="0.6" />
<polygon points="642.7,294.47 656.32,293.55 661.54,297.13 647.9,298.17" fill="#2a2a2a" stroke="#2a2a2a" stroke-width="0.6" />
<polygon points="647.9,298.17 661.54,297.13 666.76,300.7 653.1,301.86" fill="#2a2a2a" stroke="#2a2a2a" stroke-width="0.6" />
<polygon points="653.1,301.86 666.76,300.7 671.86,304.4 658.3,305.55" fill="#161616" stroke="#161616" stroke-width="0.6" />
<polygon points="658.3,305.55 671.86,304.4 676.89,308.18 663.5,309.24" fill="#161616" stroke="#161616" stroke-width="0.6" />
<polygon points="663.5,309.24 676.89,308.18 681.97,311.91 668.7,312.93" fill="#161616" stroke="#161616" stroke-width="0.6" />
<polygon points="668.7,312.93 681.97,311.91 687.08,315.62 673.9,316.62" fill="#161616" stroke="#161616" stroke-width="0.6" />
<polygon points="673.9,316.62 687.08,315.62 692.19,319.33 679.1,320.32" fill="#161616" stroke="#161616" stroke-width="0.6" />
<polygon points="679.1,320.32 692.19,319.33 697.29,323.05 684.3,324.01" fill="#161616" stroke="#161616" stroke-width="0.6" />
<polygon points="684.3,324.01 697.29,323.05 702.4,326.76 689.5,327.7" fill="#161616" stroke="#161616" stroke-width="0.6" />
<polygon points="641.14,282.3 655.18,281.2 660.09,285.01 646.2,286.05" fill="#2a2a2a" stroke="#2a2a2a" stroke-width="0.6" />
<polygon points="646.2,286.05 660.09,285.01 665,288.84 651.25,289.81" fill="#2a2a2a" stroke="#2a2a2a" stroke-width="0.6" />
<polygon points="651.25,289.81 665,288.84 669.94,292.63 656.32,293.55" fill="#2a2a2a" stroke="#2a2a2a" stroke-width="0.6" />
<polygon points="656.32,293.55 669.94,292.63 675.18,296.09 661.54,297.13" fill="#2a2a2a" stroke="#2a2a2a" stroke-width="0.6" />
<polygon points="661.54,297.13 675.18,296.09 680.42,299.55 666.76,300.7" fill="#2a2a2a" stroke="#2a2a2a" stroke-width="0.6" />
<polygon points="666.76,300.7 680.42,299.55 685.43,303.25 671.86,304.4" fill="#161616" stroke="#161616" stroke-width="0.6" />
<polygon points="671.86,304.4 685.43,303.25 690.28,307.12 676.89,308.18" fill="#161616" stroke="#161616" stroke-width="0.6" />
<polygon points="676.89,308.18 690.28,307.12 695.24,310.89 681.97,311.91" fill="#161616" stroke="#161616" stroke-width="0.6" />
<polygon points="681.97,311.91 695.24,310.89 700.27,314.61 687.08,315.62" fill="#161616" stroke="#161616" stroke-width="0.6" />
<polygon points="687.08,315.62 700.27,314.61 705.28,318.35 692.19,319.33" fill="#161616" stroke="#161616" stroke-width="0.6" />
<polygon points="692.19,319.33 705.28,318.35 710.28,322.09 697.29,323.05" fill="#161616" stroke="#161616" stroke-width="0.6" />
<polygon points="697.29,323.05 710.28,322.09 715.29,325.83 702.4,326.76" fill="#161616" stroke="#161616" stroke-width="0.6" />
<polygon points="655.18,281.2 664.55,273.59 669.71,278.01 660.09,285.01" fill="#2a2a2a" stroke="#2a2a2a" stroke-width="0.6" />
<polygon points="660.09,285.01 669.71,278.01 674.86,282.44 665,288.84" fill="#2a2a2a" stroke="#2a2a2a" stroke-width="0.6" />
<polygon points="665,288.84 674.86,282.44 680.05,286.82 669.94,292.63" fill="#2a2a2a" stroke="#2a2a2a" stroke-width="0.6" />
<polygon points="669.94,292.63 680.05,286.82 685.71,290.71 675.18,296.09" fill="#2a2a2a" stroke="#2a2a2a" stroke-width="0.6" />
<polygon points="675.18,296.09 685.71,290.71 691.36,294.59 680.42,299.55" fill="#2a2a2a" stroke="#2a2a2a" stroke-width="0.6" />
<polygon points="680.42,299.55 691.36,294.59 696.65,298.85 685.43,303.25" fill="#161616" stroke="#161616" stroke-width="0.6" />
<polygon points="685.43,303.25 696.65,298.85 701.72,303.35 690.28,307.12" fill="#161616" stroke="#161616" stroke-width="0.6" />
<polygon points="690.28,307.12 701.72,303.35 706.96,307.7 695.24,310.89" fill="#161616" stroke="#161616" stroke-width="0.6" />
<polygon points="695.24,310.89 706.96,307.7 712.29,311.97 700.27,314.61" fill="#161616" stroke="#161616" stroke-width="0.6" />
<polygon points="700.27,314.61 712.29,311.97 717.59,316.28 705.28,318.35" fill="#161616" stroke="#161616" stroke-width="0.6" />
<polygon points="705.28,318.35 717.59,316.28 722.89,320.59 710.28,322.09" fill="#161616" stroke="#161616" stroke-width="0.6" />
<polygon points="710.28,322.09 722.89,320.59 728.19,324.89 715.29,325.83" fill="#161616" stroke="#161616" stroke-width="0.6" />
<polygon points="664.55,273.59 671.93,261.89 677.51,267.26 669.71,278.01" fill="#2a2a2a" stroke="#2a2a2a" stroke-width="0.6" />
<polygon points="669.71,278.01 677.51,267.26 683.07,272.64 674.86,282.44" fill="#2a2a2a" stroke="#2a2a2a" stroke-width="0.6" />
<polygon points="674.86,282.44 683.07,272.64 688.68,277.95 680.05,286.82" fill="#2a2a2a" stroke="#2a2a2a" stroke-width="0.6" />
<polygon points="680.05,286.82 688.68,277.95 694.91,282.61 685.71,290.71" fill="#2a2a2a" stroke="#2a2a2a" stroke-width="0.6" />
<polygon points="685.71,290.71 694.91,282.61 701.14,287.26 691.36,294.59" fill="#2a2a2a" stroke="#2a2a2a" stroke-width="0.6" />
<polygon points="691.36,294.59 701.14,287.26 706.89,292.41 696.65,298.85" fill="#161616" stroke="#161616" stroke-width="0.6" />
<polygon points="696.65,298.85 706.89,292.41 712.33,297.87 701.72,303.35" fill="#161616" stroke="#161616" stroke-width="0.6" />
<polygon points="701.72,303.35 712.33,297.87 718.01,303.14 706.96,307.7" fill="#161616" stroke="#161616" stroke-width="0.6" />
<polygon points="706.96,307.7 718.01,303.14 723.81,308.32 712.29,311.97" fill="#161616" stroke="#161616" stroke-width="0.6" />
<polygon points="712.29,311.97 723.81,308.32 729.56,313.53 717.59,316.28" fill="#161616" stroke="#161616" stroke-width="0.6" />
<polygon points="717.59,316.28 729.56,313.53 735.32,318.74 722.89,320.59" fill="#161616" stroke="#161616" stroke-width="0.6" />
<polygon points="722.89,320.59 735.32,318.74 741.08,323.96 728.19,324.89" fill="#161616" stroke="#161616" stroke-width="0.6" />
<polygon points="671.93,261.89 681.92,251.97 687.69,258.12 677.51,267.26" fill="#2a2a2a" stroke="#2a2a2a" stroke-width="0.6" />
<polygon points="677.51,267.26 687.69,258.12 693.44,264.28 683.07,272.64" fill="#2a2a2a" stroke="#2a2a2a" stroke-width="0.6" />
<polygon points="683.07,272.64 693.44,264.28 699.26,270.36 688.68,277.95" fill="#2a2a2a" stroke="#2a2a2a" stroke-width="0.6" />
<polygon points="688.68,277.95 699.26,270.36 705.84,275.62 694.91,282.61" fill="#2a2a2a" stroke="#2a2a2a" stroke-width="0.6" />
<polygon points="694.91,282.61 705.84,275.62 712.43,280.87 701.14,287.26" fill="#2a2a2a" stroke="#2a2a2a" stroke-width="0.6" />
<polygon points="701.14,287.26 712.43,280.87 718.42,286.75 706.89,292.41" fill="#161616" stroke="#161616" stroke-width="0.6" />
<polygon points="706.89,292.41 718.42,286.75 724.02,293.02 712.33,297.87" fill="#161616" stroke="#161616" stroke-width="0.6" />
<polygon points="712.33,297.87 724.02,293.02 729.91,299.05 718.01,303.14" fill="#161616" stroke="#161616" stroke-width="0.6" />
<polygon points="718.01,303.14 729.91,299.05 735.96,304.96 723.81,308.32" fill="#161616" stroke="#161616" stroke-width="0.6" />
<polygon points="723.81,308.32 735.96,304.96 741.96,310.91 729.56,313.53" fill="#161616" stroke="#161616" stroke-width="0.6" />
<polygon points="729.56,313.53 741.96,310.91 747.96,316.87 735.32,318.74" fill="#161616" stroke="#161616" stroke-width="0.6" />
<polygon points="735.32,318.74 747.96,316.87 753.96,322.82 741.08,323.96" fill="#161616" stroke="#161616" stroke-width="0.6" />
<polygon points="681.92,251.97 692.96,243.24 698.83,250.01 687.69,258.12" fill="#2a2a2a" stroke="#2a2a2a" stroke-width="0.6" />
<polygon points="687.69,258.12 698.83,250.01 704.68,256.78 693.44,264.28" fill="#2a2a2a" stroke="#2a2a2a" stroke-width="0.6" />
<polygon points="693.44,264.28 704.68,256.78 710.6,263.47 699.26,270.36" fill="#2a2a2a" stroke="#2a2a2a" stroke-width="0.6" />
<polygon points="699.26,270.36 710.6,263.47 717.44,269.16 705.84,275.62" fill="#2a2a2a" stroke="#2a2a2a" stroke-width="0.6" />
<polygon points="705.84,275.62 717.44,269.16 724.29,274.85 712.43,280.87" fill="#2a2a2a" stroke="#2a2a2a" stroke-width="0.6" />
<polygon points="712.43,280.87 724.29,274.85 730.42,281.28 718.42,286.75" fill="#161616" stroke="#161616" stroke-width="0.6" />
<polygon points="718.42,286.75 730.42,281.28 736.09,288.19 724.02,293.02" fill="#161616" stroke="#161616" stroke-width="0.6" />
<polygon points="724.02,293.02 736.09,288.19 742.11,294.81 729.91,299.05" fill="#161616" stroke="#161616" stroke-width="0.6" />
<polygon points="729.91,299.05 742.11,294.81 748.31,301.28 735.96,304.96" fill="#161616" stroke="#161616" stroke-width="0.6" />
<polygon points="735.96,304.96 748.31,301.28 754.45,307.81 741.96,310.91" fill="#161616" stroke="#161616" stroke-width="0.6" />
<polygon points="741.96,310.91 754.45,307.81 760.59,314.34 747.96,316.87" fill="#161616" stroke="#161616" stroke-width="0.6" />
<polygon points="747.96,316.87 760.59,314.34 766.74,320.87 753.96,322.82" fill="#161616" stroke="#161616" stroke-width="0.6" />
<polygon points="692.96,243.24 704.35,234.97 710.29,242.31 698.83,250.01" fill="#2a2a2a" stroke="#2a2a2a" stroke-width="0.6" />
<polygon points="698.83,250.01 710.29,242.31 716.2,249.66 704.68,256.78" fill="#2a2a2a" stroke="#2a2a2a" stroke-width="0.6" />
<polygon points="704.68,256.78 716.2,249.66 722.2,256.91 710.6,263.47" fill="#2a2a2a" stroke="#2a2a2a" stroke-width="0.6" />
<polygon points="710.6,263.47 722.2,256.91 729.28,263 717.44,269.16" fill="#2a2a2a" stroke="#2a2a2a" stroke-width="0.6" />
<polygon points="717.44,269.16 729.28,263 736.36,269.08 724.29,274.85" fill="#2a2a2a" stroke="#2a2a2a" stroke-width="0.6" />
<polygon points="724.29,274.85 736.36,269.08 742.6,276.04 730.42,281.28" fill="#161616" stroke="#161616" stroke-width="0.6" />
<polygon points="730.42,281.28 742.6,276.04 748.31,283.55 736.09,288.19" fill="#161616" stroke="#161616" stroke-width="0.6" />
<polygon points="736.09,288.19 748.31,283.55 754.42,290.72 742.11,294.81" fill="#161616" stroke="#161616" stroke-width="0.6" />
<polygon points="742.11,294.81 754.42,290.72 760.74,297.72 748.31,301.28" fill="#161616" stroke="#161616" stroke-width="0.6" />
<polygon points="748.31,301.28 760.74,297.72 767,304.79 754.45,307.81" fill="#161616" stroke="#161616" stroke-width="0.6" />
<polygon points="754.45,307.81 767,304.79 773.26,311.85 760.59,314.34" fill="#161616" stroke="#161616" stroke-width="0.6" />
<polygon points="760.59,314.34 773.26,311.85 779.52,318.92 766.74,320.87" fill="#161616" stroke="#161616" stroke-width="0.6" />
<polygon points="704.35,234.97 717.69,231.6 723.53,239.12 710.29,242.31" fill="#2a2a2a" stroke="#2a2a2a" stroke-width="0.6" />
<polygon points="710.29,242.31 723.53,239.12 729.35,246.67 716.2,249.66" fill="#2a2a2a" stroke="#2a2a2a" stroke-width="0.6" />
<polygon points="716.2,249.66 729.35,246.67 735.27,254.08 722.2,256.91" fill="#2a2a2a" stroke="#2a2a2a" stroke-width="0.6" />
<polygon points="722.2,256.91 735.27,254.08 742.42,260.18 729.28,263" fill="#2a2a2a" stroke="#2a2a2a" stroke-width="0.6" />
<polygon points="729.28,263 742.42,260.18 749.58,266.27 736.36,269.08" fill="#2a2a2a" stroke="#2a2a2a" stroke-width="0.6" />
<polygon points="736.36,269.08 749.58,266.27 755.77,273.35 742.6,276.04" fill="#161616" stroke="#161616" stroke-width="0.6" />
<polygon points="742.6,276.04 755.77,273.35 761.35,281.07 748.31,283.55" fill="#161616" stroke="#161616" stroke-width="0.6" />
<polygon points="748.31,283.55 761.35,281.07 767.4,288.4 754.42,290.72" fill="#161616" stroke="#161616" stroke-width="0.6" />
<polygon points="754.42,290.72 767.4,288.4 773.69,295.54 760.74,297.72" fill="#161616" stroke="#161616" stroke-width="0.6" />
<polygon points="760.74,297.72 773.69,295.54 779.9,302.75 767,304.79" fill="#161616" stroke="#161616" stroke-width="0.6" />
<polygon points="767,304.79 779.9,302.75 786.11,309.96 773.26,311.85" fill="#161616" stroke="#161616" stroke-width="0.6" />
<polygon points="773.26,311.85 786.11,309.96 792.33,317.17 779.52,318.92" fill="#161616" stroke="#161616" stroke-width="0.6" />
<polygon points="717.69,231.6 731.67,229.95 737.38,237.54 723.53,239.12" fill="#2a2a2a" stroke="#2a2a2a" stroke-width="0.6" />
<polygon points="723.53,239.12 737.38,237.54 743.05,245.16 729.35,246.67" fill="#2a2a2a" stroke="#2a2a2a" stroke-width="0.6" />
<polygon points="729.35,246.67 743.05,245.16 748.83,252.63 735.27,254.08" fill="#2a2a2a" stroke="#2a2a2a" stroke-width="0.6" />
<polygon points="735.27,254.08 748.83,252.63 756.01,258.61 742.42,260.18" fill="#2a2a2a" stroke="#2a2a2a" stroke-width="0.6" />
<polygon points="742.42,260.18 756.01,258.61 763.19,264.59 749.58,266.27" fill="#2a2a2a" stroke="#2a2a2a" stroke-width="0.6" />
<polygon points="749.58,266.27 763.19,264.59 769.29,271.69 755.77,273.35" fill="#161616" stroke="#161616" stroke-width="0.6" />
<polygon points="755.77,273.35 769.29,271.69 774.69,279.5 761.35,281.07" fill="#161616" stroke="#161616" stroke-width="0.6" />
<polygon points="761.35,281.07 774.69,279.5 780.62,286.88 767.4,288.4" fill="#161616" stroke="#161616" stroke-width="0.6" />
<polygon points="767.4,288.4 780.62,286.88 786.83,294.04 773.69,295.54" fill="#161616" stroke="#161616" stroke-width="0.6" />
<polygon points="773.69,295.54 786.83,294.04 792.94,301.28 779.9,302.75" fill="#161616" stroke="#161616" stroke-width="0.6" />
<polygon points="779.9,302.75 792.94,301.28 799.06,308.52 786.11,309.96" fill="#161616" stroke="#161616" stroke-width="0.6" />
<polygon points="786.11,309.96 799.06,308.52 805.18,315.76 792.33,317.17" fill="#161616" stroke="#161616" stroke-width="0.6" />
<polygon points="731.67,229.95 745.67,228.39 751.23,236.04 737.38,237.54" fill="#2a2a2a" stroke="#2a2a2a" stroke-width="0.6" />
<polygon points="737.38,237.54 751.23,236.04 756.76,243.71 743.05,245.16" fill="#2a2a2a" stroke="#2a2a2a" stroke-width="0.6" />
<polygon points="743.05,245.16 756.76,243.71 762.41,251.23 748.83,252.63" fill="#2a2a2a" stroke="#2a2a2a" stroke-width="0.6" />
<polygon points="748.83,252.63 762.41,251.23 769.6,257.09 756.01,258.61" fill="#2a2a2a" stroke="#2a2a2a" stroke-width="0.6" />
<polygon points="756.01,258.61 769.6,257.09 776.8,262.95 763.19,264.59" fill="#2a2a2a" stroke="#2a2a2a" stroke-width="0.6" />
<polygon points="763.19,264.59 776.8,262.95 782.8,270.05 769.29,271.69" fill="#161616" stroke="#161616" stroke-width="0.6" />
<polygon points="769.29,271.69 782.8,270.05 788.03,277.94 774.69,279.5" fill="#161616" stroke="#161616" stroke-width="0.6" />
<polygon points="774.69,279.5 788.03,277.94 793.84,285.34 780.62,286.88" fill="#161616" stroke="#161616" stroke-width="0.6" />
<polygon points="780.62,286.88 793.84,285.34 799.96,292.51 786.83,294.04" fill="#161616" stroke="#161616" stroke-width="0.6" />
<polygon points="786.83,294.04 799.96,292.51 805.98,299.77 792.94,301.28" fill="#161616" stroke="#161616" stroke-width="0.6" />
<polygon points="792.94,301.28 805.98,299.77 812,307.03 799.06,308.52" fill="#161616" stroke="#161616" stroke-width="0.6" />
<polygon points="799.06,308.52 812,307.03 818.02,314.29 805.18,315.76" fill="#161616" stroke="#161616" stroke-width="0.6" />
<polygon points="745.67,228.39 759.67,227.66 765.08,235.23 751.23,236.04" fill="#2a2a2a" stroke="#2a2a2a" stroke-width="0.6" />
<polygon points="751.23,236.04 765.08,235.23 770.44,242.83 756.76,243.71" fill="#2a2a2a" stroke="#2a2a2a" stroke-width="0.6" />
<polygon points="756.76,243.71 770.44,242.83 775.94,250.26 762.41,251.23" fill="#2a2a2a" stroke="#2a2a2a" stroke-width="0.6" />
<polygon points="762.41,251.23 775.94,250.26 783.15,255.87 769.6,257.09" fill="#2a2a2a" stroke="#2a2a2a" stroke-width="0.6" />
<polygon points="769.6,257.09 783.15,255.87 790.35,261.48 776.8,262.95" fill="#2a2a2a" stroke="#2a2a2a" stroke-width="0.6" />
<polygon points="776.8,262.95 790.35,261.48 796.24,268.44 782.8,270.05" fill="#161616" stroke="#161616" stroke-width="0.6" />
<polygon points="782.8,270.05 796.24,268.44 801.28,276.28 788.03,277.94" fill="#161616" stroke="#161616" stroke-width="0.6" />
<polygon points="788.03,277.94 801.28,276.28 806.96,283.59 793.84,285.34" fill="#161616" stroke="#161616" stroke-width="0.6" />
<polygon points="793.84,285.34 806.96,283.59 812.97,290.64 799.96,292.51" fill="#161616" stroke="#161616" stroke-width="0.6" />
<polygon points="799.96,292.51 812.97,290.64 818.88,297.78 805.98,299.77" fill="#161616" stroke="#161616" stroke-width="0.6" />
<polygon points="805.98,299.77 818.88,297.78 824.79,304.93 812,307.03" fill="#161616" stroke="#161616" stroke-width="0.6" />
<polygon points="812,307.03 824.79,304.93 830.7,312.08 818.02,314.29" fill="#161616" stroke="#161616" stroke-width="0.6" />
<polygon points="759.67,227.66 772.4,232.8 777.72,239.64 765.08,235.23" fill="#2a2a2a" stroke="#2a2a2a" stroke-width="0.6" />
<polygon points="765.08,235.23 777.72,239.64 782.99,246.51 770.44,242.83" fill="#2a2a2a" stroke="#2a2a2a" stroke-width="0.6" />
<polygon points="770.44,242.83 782.99,246.51 788.4,253.18 775.94,250.26" fill="#2a2a2a" stroke="#2a2a2a" stroke-width="0.6" />
<polygon points="775.94,250.26 788.4,253.18 795.68,257.88 783.15,255.87" fill="#2a2a2a" stroke="#2a2a2a" stroke-width="0.6" />
<polygon points="783.15,255.87 795.68,257.88 802.96,262.57 790.35,261.48" fill="#2a2a2a" stroke="#2a2a2a" stroke-width="0.6" />
<polygon points="790.35,261.48 802.96,262.57 808.8,268.75 796.24,268.44" fill="#161616" stroke="#161616" stroke-width="0.6" />
<polygon points="796.24,268.44 808.8,268.75 813.71,275.88 801.28,276.28" fill="#161616" stroke="#161616" stroke-width="0.6" />
<polygon points="801.28,276.28 813.71,275.88 819.33,282.43 806.96,283.59" fill="#161616" stroke="#161616" stroke-width="0.6" />
<polygon points="806.96,283.59 819.33,282.43 825.31,288.68 812.97,290.64" fill="#161616" stroke="#161616" stroke-width="0.6" />
<polygon points="812.97,290.64 825.31,288.68 831.17,295.06 818.88,297.78" fill="#161616" stroke="#161616" stroke-width="0.6" />
<polygon points="818.88,297.78 831.17,295.06 837.04,301.43 824.79,304.93" fill="#161616" stroke="#161616" stroke-width="0.6" />
<polygon points="824.79,304.93 837.04,301.43 842.9,307.8 830.7,312.08" fill="#161616" stroke="#161616" stroke-width="0.6" />
<polyline points="627.1,283.4 630.22,285.61 633.34,287.83 636.46,290.04 639.58,292.26 642.7,294.47 645.82,296.69 648.94,298.9 652.06,301.12 655.18,303.34 658.3,305.55 661.42,307.76 664.54,309.98 667.66,312.19 670.78,314.41 673.9,316.62 677.02,318.84 680.14,321.05 683.26,323.27 686.38,325.49 689.5,327.7" fill="none" stroke="#00ff00" stroke-width="1.0" shape-rendering="geometricPrecision"/>
<polyline points="645.82,281.93 648.82,284.2 651.83,286.46 654.84,288.73 657.83,291 660.86,293.24 663.99,295.36 667.13,297.49 670.27,299.61 673.4,301.73 676.38,304.02 679.36,306.3 682.34,308.59 685.37,310.83 688.43,313.05 691.48,315.28 694.52,317.52 697.56,319.75 700.61,321.98 703.65,324.22 706.69,326.45" fill="none" stroke="#00ff00" stroke-width="1.0" shape-rendering="geometricPrecision"/>
<polyline points="662.7,277.9 665.68,280.34 668.67,282.79 671.65,285.23 674.61,287.69 677.64,290.09 680.88,292.25 684.13,294.4 687.38,296.56 690.62,298.73 693.55,301.21 696.48,303.69 699.41,306.17 702.44,308.57 705.54,310.92 708.6,313.3 711.66,315.68 714.71,318.06 717.77,320.44 720.83,322.82 723.89,325.2" fill="none" stroke="#00ff00" stroke-width="1.0" shape-rendering="geometricPrecision"/>
<polyline points="671.93,261.89 675.28,265.11 678.63,268.33 681.97,271.56 685.28,274.8 688.68,277.95 692.42,280.74" fill="none" stroke="#ff8484" stroke-width="1.0" shape-rendering="geometricPrecision"/>
<polyline points="692.42,280.74 696.16,283.54 699.89,286.33 703.63,289.13 706.89,292.41 710.16,295.69 713.42,298.96 716.84,302.12 720.35,305.2 723.81,308.32 727.26,311.45 730.72,314.57 734.17,317.7 737.63,320.83 741.08,323.96" fill="none" stroke="#00ff00" stroke-width="1.0" shape-rendering="geometricPrecision"/>
<polyline points="685.51,248.95 689,252.77 692.48,256.59 695.96,260.41 699.41,264.26 702.97,267.98 706.98,271.23" fill="none" stroke="#ff8484" stroke-width="1.0" shape-rendering="geometricPrecision"/>
<polyline points="706.98,271.23 710.99,274.48 714.99,277.72 718.99,280.98 722.37,284.87 725.75,288.77 729.13,292.66 732.71,296.39 736.42,300.02 740.05,303.71 743.69,307.4 747.32,311.09 750.95,314.79 754.58,318.48 758.22,322.17" fill="none" stroke="#00ff00" stroke-width="1.0" shape-rendering="geometricPrecision"/>
<polyline points="700.49,237.63 704.04,241.92 707.59,246.22 711.13,250.51 714.63,254.85 718.28,259.02 722.48,262.6" fill="none" stroke="#ff8484" stroke-width="1.0" shape-rendering="geometricPrecision"/>
<polyline points="722.48,262.6 726.69,266.18 730.9,269.76 735.09,273.35 738.51,277.74 741.93,282.13 745.35,286.52 749.02,290.7 752.84,294.75 756.58,298.88 760.32,303.02 764.05,307.16 767.79,311.3 771.52,315.43 775.26,319.57" fill="none" stroke="#00ff00" stroke-width="1.0" shape-rendering="geometricPrecision"/>
<polyline points="717.69,231.6 721.2,236.11 724.7,240.63 728.2,245.15 731.65,249.71 735.27,254.08 739.56,257.74" fill="none" stroke="#ff8484" stroke-width="1.0" shape-rendering="geometricPrecision"/>
<polyline points="739.56,257.74 743.85,261.39 748.15,265.05 752.42,268.72 755.77,273.35 759.12,277.98 762.47,282.61 766.12,286.99 769.95,291.22 773.69,295.54 777.42,299.86 781.14,304.19 784.87,308.52 788.6,312.85 792.33,317.17" fill="none" stroke="#00ff00" stroke-width="1.0" shape-rendering="geometricPrecision"/>
<polyline points="736.33,229.4 739.73,233.97 743.13,238.54 746.51,243.11 749.83,247.73 753.35,252.14 757.67,255.71" fill="none" stroke="#ff8484" stroke-width="1.0" shape-rendering="geometricPrecision"/>
<polyline points="757.67,255.71 761.98,259.27 766.29,262.84 770.58,266.43 773.79,271.13 777,275.83 780.21,280.54 783.77,284.94 787.54,289.18 791.2,293.52 794.85,297.87 798.51,302.22 802.16,306.57 805.81,310.92 809.46,315.27" fill="none" stroke="#00ff00" stroke-width="1.0" shape-rendering="geometricPrecision"/>
<polyline points="755,227.47 758.28,232.07 761.57,236.67 764.83,241.28 768.03,245.95 771.46,250.36 775.78,253.82" fill="none" stroke="#ff8484" stroke-width="1.0" shape-rendering="geometricPrecision"/>
<polyline points="775.78,253.82 780.11,257.28 784.44,260.74 788.74,264.22 791.81,268.98 794.88,273.73 797.94,278.49 801.41,282.91 805.12,287.14 808.71,291.48 812.28,295.83 815.85,300.19 819.43,304.54 823,308.89 826.57,313.25" fill="none" stroke="#00ff00" stroke-width="1.0" shape-rendering="geometricPrecision"/>
<polyline points="772.4,232.8 775.59,236.9 778.78,241 781.96,245.11 785.05,249.29 788.4,253.18 792.77,256 797.14,258.81 801.5,261.63 805.85,264.47 808.8,268.75 811.75,273.02 814.7,277.3 818.1,281.2 821.77,284.87 825.31,288.68 828.83,292.51 832.34,296.33 835.86,300.15 839.38,303.98 842.9,307.8" fill="none" stroke="#00ff00" stroke-width="1.0" shape-rendering="geometricPrecision"/>
<polyline points="627.1,283.4 635.52,282.74 643.95,282.08 652.37,281.42 660.79,280.76 664.55,273.59 667.94,265.86 673.93,259.91" fill="none" stroke="#00ff00" stroke-width="1.0" shape-rendering="geometricPrecision"/>
<polyline points="673.93,259.91 679.93,253.95 686.26,248.38 692.96,243.24 699.71,238.16 706.67,233.37 714.89,231.93 723.28,230.94 731.67,229.95 740.06,228.98 748.47,228.1 756.87,227.38 765.25,228.3" fill="none" stroke="#ff8484" stroke-width="1.0" shape-rendering="geometricPrecision"/>
<polyline points="765.25,228.3 772.4,232.8" fill="none" stroke="#00ff00" stroke-width="1.0" shape-rendering="geometricPrecision"/>
<polyline points="631.26,286.35 639.62,285.72 647.97,285.09 656.33,284.46 664.68,283.83 668.68,277.12 672.34,269.9 678.42,264.33" fill="none" stroke="#00ff00" stroke-width="1.0" shape-rendering="geometricPrecision"/>
<polyline points="678.42,264.33 684.51,258.76 690.91,253.5 697.66,248.65 704.45,243.86 711.43,239.33 719.59,237.94 727.91,236.98 736.24,236.02 744.56,235.08 752.9,234.22 761.23,233.5 769.52,234.21" fill="none" stroke="#ff8484" stroke-width="1.0" shape-rendering="geometricPrecision"/>
<polyline points="769.52,234.21 776.65,238.27" fill="none" stroke="#00ff00" stroke-width="1.0" shape-rendering="geometricPrecision"/>
<polyline points="635.42,289.31 643.71,288.71 651.99,288.1 660.28,287.5 668.57,286.9 672.81,280.66 676.74,273.94 682.92,268.75" fill="none" stroke="#00ff00" stroke-width="1.0" shape-rendering="geometricPrecision"/>
<polyline points="682.92,268.75 689.1,263.56 695.56,258.63 702.35,254.06 709.18,249.55 716.19,245.29 724.29,243.94 732.55,243.02 740.8,242.1 749.06,241.18 757.32,240.35 765.59,239.63 773.78,240.13" fill="none" stroke="#ff8484" stroke-width="1.0" shape-rendering="geometricPrecision"/>
<polyline points="773.78,240.13 780.91,243.74" fill="none" stroke="#00ff00" stroke-width="1.0" shape-rendering="geometricPrecision"/>
<polyline points="639.58,292.26 647.79,291.69 656.01,291.13 664.22,290.56 672.43,289.99 676.91,284.22 681.1,278 687.37,273.2" fill="none" stroke="#00ff00" stroke-width="1.0" shape-rendering="geometricPrecision"/>
<polyline points="687.37,273.2 693.64,268.4 700.16,263.78 706.99,259.51 713.85,255.29 720.88,251.3 728.92,250 737.1,249.12 745.28,248.23 753.47,247.35 761.66,246.54 769.84,245.83 777.94,246.13" fill="none" stroke="#ff8484" stroke-width="1.0" shape-rendering="geometricPrecision"/>
<polyline points="777.94,246.13 785.05,249.29" fill="none" stroke="#00ff00" stroke-width="1.0" shape-rendering="geometricPrecision"/>
<polyline points="643.74,295.21 651.91,294.64 660.09,294.08 668.26,293.51 676.43,292.94 681.18,287.6 685.67,281.85 692.06,277.4" fill="none" stroke="#00ff00" stroke-width="1.0" shape-rendering="geometricPrecision"/>
<polyline points="692.06,277.4 698.45,272.95 705.07,268.62 711.97,264.61 718.89,260.63 725.97,256.87 733.98,255.6 742.13,254.71 750.27,253.83 758.41,252.94 766.56,252.13 774.7,251.38 782.73,251.44" fill="none" stroke="#ff8484" stroke-width="1.0" shape-rendering="geometricPrecision"/>
<polyline points="782.73,251.44 789.86,254.12" fill="none" stroke="#00ff00" stroke-width="1.0" shape-rendering="geometricPrecision"/>
<polyline points="647.9,298.17 656.08,297.54 664.27,296.92 672.45,296.29 680.63,295.67 685.71,290.71 690.53,285.37 697.1,281.22 703.66,277.07 710.43,272.97 717.44,269.16 724.49,265.39 731.67,261.8 739.7,260.49 747.86,259.55 756.01,258.61 764.16,257.67 772.32,256.79 780.47,255.96 788.49,255.73 795.68,257.88" fill="none" stroke="#00ff00" stroke-width="1.0" shape-rendering="geometricPrecision"/>
<polyline points="652.06,301.12 660.25,300.44 668.45,299.76 676.64,299.08 684.84,298.4 690.23,293.82 695.4,288.9 702.14,285.04 708.88,281.19 715.79,277.32 722.92,273.71 730.09,270.14 737.37,266.73 745.42,265.38 753.59,264.39 761.75,263.4 769.92,262.4 778.09,261.46 786.24,260.55 794.24,260.01 801.5,261.63" fill="none" stroke="#00ff00" stroke-width="1.0" shape-rendering="geometricPrecision"/>
<polyline points="656.22,304.07 664.4,303.36 672.58,302.65 680.76,301.94 688.94,301.23 694.63,297.05 700.12,292.58 707.01,289.04 713.89,285.51 720.92,281.9 728.16,278.52 735.41,275.17 742.78,271.97 750.82,270.6 758.97,269.59 767.12,268.57 775.27,267.54 783.43,266.56 791.56,265.59 799.53,264.79 806.83,265.9" fill="none" stroke="#00ff00" stroke-width="1.0" shape-rendering="geometricPrecision"/>
<polyline points="660.38,307.03 668.48,306.36 676.57,305.69 684.67,305.02 692.76,304.35 698.68,300.65 704.43,296.69 711.39,293.55 718.35,290.41 725.43,287.13 732.69,284.04 739.97,280.99 747.34,278.07 755.32,276.76 763.38,275.79 771.45,274.82 779.51,273.83 787.58,272.89 795.63,271.93 803.49,270.93 810.76,271.6" fill="none" stroke="#00ff00" stroke-width="1.0" shape-rendering="geometricPrecision"/>
<polyline points="664.54,309.98 672.55,309.35 680.56,308.73 688.57,308.1 696.59,307.47 702.73,304.25 708.73,300.79 715.77,298.05 722.81,295.31 729.94,292.35 737.23,289.57 744.53,286.81 751.91,284.17 759.81,282.92 767.79,282 775.77,281.06 783.75,280.12 791.74,279.21 799.7,278.26 807.45,277.06 814.7,277.3" fill="none" stroke="#00ff00" stroke-width="1.0" shape-rendering="geometricPrecision"/>
<polyline points="668.7,312.93 676.66,312.32 684.62,311.71 692.59,311.09 700.55,310.48 706.96,307.7 713.24,304.73 720.39,302.35 727.54,299.97 734.76,297.32 742.11,294.81 749.47,292.32 756.89,289.92 764.75,288.7 772.69,287.79 780.62,286.88 788.55,285.94 796.49,285.04 804.4,284.08 812.07,282.65 819.33,282.43" fill="none" stroke="#00ff00" stroke-width="1.0" shape-rendering="geometricPrecision"/>
<polyline points="672.86,315.89 680.78,315.28 688.7,314.67 696.63,314.06 704.55,313.46 711.22,311.11 717.8,308.62 725.08,306.6 732.35,304.58 739.67,302.23 747.08,299.98 754.51,297.74 761.99,295.59 769.81,294.39 777.71,293.49 785.6,292.59 793.49,291.66 801.39,290.76 809.25,289.77 816.86,288.11 824.13,287.41" fill="none" stroke="#00ff00" stroke-width="1.0" shape-rendering="geometricPrecision"/>
<polyline points="677.02,318.84 684.9,318.24 692.77,317.65 700.65,317.05 708.52,316.46 715.47,314.56 722.33,312.55 729.72,310.89 737.11,309.24 744.52,307.18 751.99,305.2 759.48,303.23 767.01,301.32 774.8,300.16 782.65,299.27 790.5,298.38 798.34,297.46 806.19,296.57 814,295.56 821.54,293.68 828.83,292.51" fill="none" stroke="#00ff00" stroke-width="1.0" shape-rendering="geometricPrecision"/>
<polyline points="681.18,321.79 689.01,321.21 696.84,320.62 704.67,320.04 712.5,319.45 719.71,318 726.86,316.48 734.37,315.19 741.88,313.9 749.37,312.13 756.91,310.42 764.46,308.72 772.03,307.06 779.78,305.92 787.59,305.05 795.39,304.17 803.19,303.27 810.99,302.37 818.76,301.35 826.22,299.24 833.52,297.61" fill="none" stroke="#00ff00" stroke-width="1.0" shape-rendering="geometricPrecision"/>
<polyline points="685.34,324.75 693.12,324.17 700.91,323.6 708.69,323.03 716.47,322.45 723.95,321.45 731.39,320.4 739.02,319.48 746.64,318.55 754.22,317.09 761.82,315.65 769.43,314.21 777.05,312.79 784.77,311.69 792.53,310.83 800.28,309.97 808.04,309.07 815.79,308.18 823.51,307.14 830.9,304.8 838.21,302.7" fill="none" stroke="#00ff00" stroke-width="1.0" shape-rendering="geometricPrecision"/>
<polyline points="689.5,327.7 697.24,327.14 704.97,326.58 712.71,326.02 720.45,325.45 728.19,324.89 735.92,324.33 743.66,323.77 751.4,323.21 759.07,322.04 766.74,320.87 774.41,319.7 782.07,318.53 789.76,317.45 797.47,316.61 805.18,315.76 812.88,314.88 820.59,313.99 828.26,312.93 835.58,310.37 842.9,307.8" fill="none" stroke="#00ff00" stroke-width="1.0" shape-rendering="geometricPrecision"/>
<rect x="626.1" y="282.4" width="2" height="2" fill="#00ff00"/>
<rect x="630.26" y="285.35" width="2" height="2" fill="#00ff00"/>
<rect x="634.42" y="288.31" width="2" height="2" fill="#00ff00"/>
<rect x="638.58" y="291.26" width="2" height="2" fill="#00ff00"/>
<rect x="642.74" y="294.21" width="2" height="2" fill="#00ff00"/>
<rect x="646.9" y="297.17" width="2" height="2" fill="#00ff00"/>
<rect x="651.06" y="300.12" width="2" height="2" fill="#00ff00"/>
<rect x="655.22" y="303.07" width="2" height="2" fill="#00ff00"/>
<rect x="659.38" y="306.03" width="2" height="2" fill="#00ff00"/>
<rect x="663.54" y="308.98" width="2" height="2" fill="#00ff00"/>
<rect x="667.7" y="311.93" width="2" height="2" fill="#00ff00"/>
<rect x="671.86" y="314.89" width="2" height="2" fill="#00ff00"/>
<rect x="676.02" y="317.84" width="2" height="2" fill="#00ff00"/>
<rect x="680.18" y="320.79" width="2" height="2" fill="#00ff00"/>
<rect x="684.34" y="323.75" width="2" height="2" fill="#00ff00"/>
<rect x="688.5" y="326.7" width="2" height="2" fill="#00ff00"/>
<rect x="644.82" y="280.93" width="2" height="2" fill="#00ff00"/>
<rect x="648.83" y="283.95" width="2" height="2" fill="#00ff00"/>
<rect x="652.84" y="286.97" width="2" height="2" fill="#00ff00"/>
<rect x="656.83" y="290" width="2" height="2" fill="#00ff00"/>
<rect x="660.9" y="292.95" width="2" height="2" fill="#00ff00"/>
<rect x="665.09" y="295.78" width="2" height="2" fill="#00ff00"/>
<rect x="669.27" y="298.61" width="2" height="2" fill="#00ff00"/>
<rect x="673.4" y="301.5" width="2" height="2" fill="#00ff00"/>
<rect x="677.37" y="304.54" width="2" height="2" fill="#00ff00"/>
<rect x="681.34" y="307.59" width="2" height="2" fill="#00ff00"/>
<rect x="685.39" y="310.57" width="2" height="2" fill="#00ff00"/>
<rect x="689.46" y="313.54" width="2" height="2" fill="#00ff00"/>
<rect x="693.52" y="316.52" width="2" height="2" fill="#00ff00"/>
<rect x="697.58" y="319.49" width="2" height="2" fill="#00ff00"/>
<rect x="701.64" y="322.47" width="2" height="2" fill="#00ff00"/>
<rect x="705.69" y="325.45" width="2" height="2" fill="#00ff00"/>
<rect x="661.7" y="276.9" width="2" height="2" fill="#00ff00"/>
<rect x="665.68" y="280.16" width="2" height="2" fill="#00ff00"/>
<rect x="669.66" y="283.42" width="2" height="2" fill="#00ff00"/>
<rect x="673.61" y="286.69" width="2" height="2" fill="#00ff00"/>
<rect x="677.72" y="289.81" width="2" height="2" fill="#00ff00"/>
<rect x="682.05" y="292.69" width="2" height="2" fill="#00ff00"/>
<rect x="686.38" y="295.56" width="2" height="2" fill="#00ff00"/>
<rect x="690.59" y="298.55" width="2" height="2" fill="#00ff00"/>
<rect x="694.5" y="301.86" width="2" height="2" fill="#00ff00"/>
<rect x="698.41" y="305.17" width="2" height="2" fill="#00ff00"/>
<rect x="702.48" y="308.35" width="2" height="2" fill="#00ff00"/>
<rect x="706.58" y="311.5" width="2" height="2" fill="#00ff00"/>
<rect x="710.66" y="314.68" width="2" height="2" fill="#00ff00"/>
<rect x="714.73" y="317.85" width="2" height="2" fill="#00ff00"/>
<rect x="718.81" y="321.03" width="2" height="2" fill="#00ff00"/>
<rect x="722.89" y="324.2" width="2" height="2" fill="#00ff00"/>
<rect x="670.93" y="260.89" width="2" height="2" fill="#ff8484"/>
<rect x="675.4" y="265.19" width="2" height="2" fill="#ff8484"/>
<rect x="679.86" y="269.48" width="2" height="2" fill="#ff8484"/>
<rect x="684.28" y="273.8" width="2" height="2" fill="#ff8484"/>
<rect x="688.93" y="277.88" width="2" height="2" fill="#ff8484"/>
<rect x="693.91" y="281.61" width="2" height="2" fill="#00ff00"/>
<rect x="698.89" y="285.33" width="2" height="2" fill="#00ff00"/>
<rect x="703.71" y="289.22" width="2" height="2" fill="#00ff00"/>
<rect x="708.07" y="293.59" width="2" height="2" fill="#00ff00"/>
<rect x="712.42" y="297.96" width="2" height="2" fill="#00ff00"/>
<rect x="717.01" y="302.14" width="2" height="2" fill="#00ff00"/>
<rect x="721.65" y="306.28" width="2" height="2" fill="#00ff00"/>
<rect x="726.26" y="310.45" width="2" height="2" fill="#00ff00"/>
<rect x="730.87" y="314.62" width="2" height="2" fill="#00ff00"/>
<rect x="735.47" y="318.79" width="2" height="2" fill="#00ff00"/>
<rect x="740.08" y="322.96" width="2" height="2" fill="#00ff00"/>
<rect x="684.51" y="247.95" width="2" height="2" fill="#ff8484"/>
<rect x="689.16" y="253.04" width="2" height="2" fill="#ff8484"/>
<rect x="693.81" y="258.13" width="2" height="2" fill="#ff8484"/>
<rect x="698.41" y="263.26" width="2" height="2" fill="#ff8484"/>
<rect x="703.3" y="268.07" width="2" height="2" fill="#ff8484"/>
<rect x="708.65" y="272.39" width="2" height="2" fill="#00ff00"/>
<rect x="713.99" y="276.72" width="2" height="2" fill="#00ff00"/>
<rect x="719.12" y="281.28" width="2" height="2" fill="#00ff00"/>
<rect x="723.63" y="286.47" width="2" height="2" fill="#00ff00"/>
<rect x="728.13" y="291.66" width="2" height="2" fill="#00ff00"/>
<rect x="732.95" y="296.6" width="2" height="2" fill="#00ff00"/>
<rect x="737.84" y="301.48" width="2" height="2" fill="#00ff00"/>
<rect x="742.69" y="306.4" width="2" height="2" fill="#00ff00"/>
<rect x="747.53" y="311.32" width="2" height="2" fill="#00ff00"/>
<rect x="752.37" y="316.25" width="2" height="2" fill="#00ff00"/>
<rect x="757.22" y="321.17" width="2" height="2" fill="#00ff00"/>
<rect x="699.49" y="236.63" width="2" height="2" fill="#ff8484"/>
<rect x="704.22" y="242.35" width="2" height="2" fill="#ff8484"/>
<rect x="708.96" y="248.08" width="2" height="2" fill="#ff8484"/>
<rect x="713.63" y="253.85" width="2" height="2" fill="#ff8484"/>
<rect x="718.68" y="259.22" width="2" height="2" fill="#ff8484"/>
<rect x="724.29" y="263.99" width="2" height="2" fill="#00ff00"/>
<rect x="729.9" y="268.76" width="2" height="2" fill="#00ff00"/>
<rect x="735.23" y="273.81" width="2" height="2" fill="#00ff00"/>
<rect x="739.79" y="279.67" width="2" height="2" fill="#00ff00"/>
<rect x="744.35" y="285.52" width="2" height="2" fill="#00ff00"/>
<rect x="749.29" y="291.05" width="2" height="2" fill="#00ff00"/>
<rect x="754.34" y="296.5" width="2" height="2" fill="#00ff00"/>
<rect x="759.32" y="302.02" width="2" height="2" fill="#00ff00"/>
<rect x="764.3" y="307.54" width="2" height="2" fill="#00ff00"/>
<rect x="769.28" y="313.05" width="2" height="2" fill="#00ff00"/>
<rect x="774.26" y="318.57" width="2" height="2" fill="#00ff00"/>
<rect x="716.69" y="230.6" width="2" height="2" fill="#ff8484"/>
<rect x="721.37" y="236.62" width="2" height="2" fill="#ff8484"/>
<rect x="726.04" y="242.63" width="2" height="2" fill="#ff8484"/>
<rect x="730.65" y="248.71" width="2" height="2" fill="#ff8484"/>
<rect x="735.7" y="254.3" width="2" height="2" fill="#ff8484"/>
<rect x="741.42" y="259.18" width="2" height="2" fill="#00ff00"/>
<rect x="747.15" y="264.05" width="2" height="2" fill="#00ff00"/>
<rect x="752.54" y="269.26" width="2" height="2" fill="#00ff00"/>
<rect x="757" y="275.44" width="2" height="2" fill="#00ff00"/>
<rect x="761.47" y="281.61" width="2" height="2" fill="#00ff00"/>
<rect x="766.4" y="287.4" width="2" height="2" fill="#00ff00"/>
<rect x="771.45" y="293.09" width="2" height="2" fill="#00ff00"/>
<rect x="776.42" y="298.86" width="2" height="2" fill="#00ff00"/>
<rect x="781.39" y="304.63" width="2" height="2" fill="#00ff00"/>
<rect x="786.36" y="310.4" width="2" height="2" fill="#00ff00"/>
<rect x="791.33" y="316.17" width="2" height="2" fill="#00ff00"/>
<rect x="735.33" y="228.4" width="2" height="2" fill="#ff8484"/>
<rect x="739.86" y="234.49" width="2" height="2" fill="#ff8484"/>
<rect x="744.39" y="240.58" width="2" height="2" fill="#ff8484"/>
<rect x="748.83" y="246.73" width="2" height="2" fill="#ff8484"/>
<rect x="753.79" y="252.33" width="2" height="2" fill="#ff8484"/>
<rect x="759.54" y="257.08" width="2" height="2" fill="#00ff00"/>
<rect x="765.29" y="261.84" width="2" height="2" fill="#00ff00"/>
<rect x="770.65" y="266.99" width="2" height="2" fill="#00ff00"/>
<rect x="774.93" y="273.26" width="2" height="2" fill="#00ff00"/>
<rect x="779.21" y="279.54" width="2" height="2" fill="#00ff00"/>
<rect x="784.03" y="285.36" width="2" height="2" fill="#00ff00"/>
<rect x="788.99" y="291.07" width="2" height="2" fill="#00ff00"/>
<rect x="793.85" y="296.87" width="2" height="2" fill="#00ff00"/>
<rect x="798.72" y="302.67" width="2" height="2" fill="#00ff00"/>
<rect x="803.59" y="308.47" width="2" height="2" fill="#00ff00"/>
<rect x="808.46" y="314.27" width="2" height="2" fill="#00ff00"/>
<rect x="754" y="226.47" width="2" height="2" fill="#ff8484"/>
<rect x="758.38" y="232.6" width="2" height="2" fill="#ff8484"/>
<rect x="762.75" y="238.74" width="2" height="2" fill="#ff8484"/>
<rect x="767.03" y="244.95" width="2" height="2" fill="#ff8484"/>
<rect x="771.9" y="250.52" width="2" height="2" fill="#ff8484"/>
<rect x="777.67" y="255.13" width="2" height="2" fill="#00ff00"/>
<rect x="783.44" y="259.74" width="2" height="2" fill="#00ff00"/>
<rect x="788.76" y="264.8" width="2" height="2" fill="#00ff00"/>
<rect x="792.85" y="271.15" width="2" height="2" fill="#00ff00"/>
<rect x="796.94" y="277.49" width="2" height="2" fill="#00ff00"/>
<rect x="801.65" y="283.32" width="2" height="2" fill="#00ff00"/>
<rect x="806.52" y="289.03" width="2" height="2" fill="#00ff00"/>
<rect x="811.28" y="294.83" width="2" height="2" fill="#00ff00"/>
<rect x="816.05" y="300.64" width="2" height="2" fill="#00ff00"/>
<rect x="820.81" y="306.44" width="2" height="2" fill="#00ff00"/>
<rect x="825.57" y="312.25" width="2" height="2" fill="#00ff00"/>
<rect x="771.4" y="231.8" width="2" height="2" fill="#00ff00"/>
<rect x="775.65" y="237.27" width="2" height="2" fill="#00ff00"/>
<rect x="779.91" y="242.74" width="2" height="2" fill="#00ff00"/>
<rect x="784.05" y="248.29" width="2" height="2" fill="#00ff00"/>
<rect x="788.86" y="253.12" width="2" height="2" fill="#00ff00"/>
<rect x="794.68" y="256.88" width="2" height="2" fill="#00ff00"/>
<rect x="800.5" y="260.63" width="2" height="2" fill="#00ff00"/>
<rect x="805.83" y="264.9" width="2" height="2" fill="#00ff00"/>
<rect x="809.76" y="270.6" width="2" height="2" fill="#00ff00"/>
<rect x="813.7" y="276.3" width="2" height="2" fill="#00ff00"/>
<rect x="818.33" y="281.43" width="2" height="2" fill="#00ff00"/>
<rect x="823.13" y="286.41" width="2" height="2" fill="#00ff00"/>
<rect x="827.83" y="291.51" width="2" height="2" fill="#00ff00"/>
<rect x="832.52" y="296.61" width="2" height="2" fill="#00ff00"/>
<rect x="837.21" y="301.7" width="2" height="2" fill="#00ff00"/>
<rect x="841.9" y="306.8" width="2" height="2" fill="#00ff00"/>
<text class="m" transform="translate(615.5,361.24) scale(0.8487654320987654,1)" text-anchor="start" font-size="10.8" fill="#20c020" opacity="0.8">g/r</text>
<rect x="386" y="226" width="226" height="146" fill="#000000" />
<line x1="386" y1="232.5" x2="612" y2="232.5" stroke="#646464" stroke-width="1" />
<line x1="386" y1="251.5" x2="612" y2="251.5" stroke="#646464" stroke-width="1" />
<line x1="386" y1="305.5" x2="612" y2="305.5" stroke="#646464" stroke-width="1" />
<line x1="386" y1="324.5" x2="612" y2="324.5" stroke="#646464" stroke-width="1" />
<line x1="386" y1="343.5" x2="612" y2="343.5" stroke="#646464" stroke-width="1" />
<rect x="380" y="226" width="6" height="2" fill="#d4d4d4" />
<rect x="858" y="222" width="345" height="150" fill="#000000" />
<rect x="1086" y="0" width="117" height="813" fill="#000000" />
<rect x="0" y="372" width="612" height="28" fill="#000000" />
<line x1="7.7" y1="366" x2="7.7" y2="372" stroke="#8a8a8a" stroke-width="1" />
<line x1="16.17" y1="366" x2="16.17" y2="372" stroke="#8a8a8a" stroke-width="1" />
<line x1="24.64" y1="366" x2="24.64" y2="372" stroke="#8a8a8a" stroke-width="1" />
<line x1="33.11" y1="366" x2="33.11" y2="372" stroke="#8a8a8a" stroke-width="1" />
<line x1="41.58" y1="366" x2="41.58" y2="372" stroke="#8a8a8a" stroke-width="1" />
<line x1="50.05" y1="366" x2="50.05" y2="372" stroke="#8a8a8a" stroke-width="1" />
<line x1="58.52" y1="366" x2="58.52" y2="372" stroke="#8a8a8a" stroke-width="1" />
<line x1="66.99" y1="366" x2="66.99" y2="372" stroke="#8a8a8a" stroke-width="1" />
<line x1="75.46" y1="366" x2="75.46" y2="372" stroke="#8a8a8a" stroke-width="1" />
<line x1="83.93" y1="366" x2="83.93" y2="372" stroke="#8a8a8a" stroke-width="1" />
<line x1="92.4" y1="366" x2="92.4" y2="372" stroke="#8a8a8a" stroke-width="1" />
<line x1="100.87" y1="366" x2="100.87" y2="372" stroke="#8a8a8a" stroke-width="1" />
<line x1="109.34" y1="366" x2="109.34" y2="372" stroke="#8a8a8a" stroke-width="1" />
<line x1="117.81" y1="366" x2="117.81" y2="372" stroke="#8a8a8a" stroke-width="1" />
<line x1="126.28" y1="366" x2="126.28" y2="372" stroke="#8a8a8a" stroke-width="1" />
<line x1="134.75" y1="366" x2="134.75" y2="372" stroke="#8a8a8a" stroke-width="1" />
<line x1="135" y1="381.5" x2="612" y2="381.5" stroke="#7a7a7a" stroke-width="1" />
<text class="m" transform="translate(2,384.24) scale(0.8796296296296297,1)" text-anchor="start" font-size="10.8" fill="#36a448" >/6926</text>
<text class="m" transform="translate(35.9,384.24) scale(0.8796296296296297,1)" text-anchor="start" font-size="10.8" fill="#36a448" >/6976</text>
<text class="m" transform="translate(69.8,384.24) scale(0.8796296296296297,1)" text-anchor="start" font-size="10.8" fill="#36a448" >/69C6</text>
<text class="m" transform="translate(103.7,384.24) scale(0.8796296296296297,1)" text-anchor="start" font-size="10.8" fill="#36a448" >/6A16</text>
<text class="m" transform="translate(137.6,384.24) scale(0.8796296296296297,1)" text-anchor="start" font-size="10.8" fill="#36a448" >/6A66</text>
<text class="m" transform="translate(171.5,384.24) scale(0.8796296296296297,1)" text-anchor="start" font-size="10.8" fill="#36a448" >/6AB6</text>
<text class="m" transform="translate(205.4,384.24) scale(0.8796296296296297,1)" text-anchor="start" font-size="10.8" fill="#36a448" >/6B06</text>
<text class="m" transform="translate(239.3,384.24) scale(0.8796296296296297,1)" text-anchor="start" font-size="10.8" fill="#36a448" >/6B56</text>
<text class="m" transform="translate(273.2,384.24) scale(0.8796296296296297,1)" text-anchor="start" font-size="10.8" fill="#36a448" >/6BA6</text>
<text class="m" transform="translate(307.1,384.24) scale(0.8796296296296297,1)" text-anchor="start" font-size="10.8" fill="#36a448" >/6BF6</text>
<text class="m" transform="translate(341,384.24) scale(0.8796296296296297,1)" text-anchor="start" font-size="10.8" fill="#36a448" >/6C46</text>
<text class="m" transform="translate(374.9,384.24) scale(0.8796296296296297,1)" text-anchor="start" font-size="10.8" fill="#36a448" >/6C96</text>
<text class="m" transform="translate(408.8,384.24) scale(0.8796296296296297,1)" text-anchor="start" font-size="10.8" fill="#36a448" >/6CE6</text>
<text class="m" transform="translate(442.7,384.24) scale(0.8796296296296297,1)" text-anchor="start" font-size="10.8" fill="#36a448" >/6D36</text>
<text class="m" transform="translate(476.6,384.24) scale(0.8796296296296297,1)" text-anchor="start" font-size="10.8" fill="#36a448" >/6D86</text>
<text class="m" transform="translate(510.5,384.24) scale(0.8796296296296297,1)" text-anchor="start" font-size="10.8" fill="#36a448" >/6DD6</text>
<text class="m" transform="translate(544.4,384.24) scale(0.8796296296296297,1)" text-anchor="start" font-size="10.8" fill="#36a448" >/6E26</text>
<text class="m" transform="translate(578.3,384.24) scale(0.8796296296296297,1)" text-anchor="start" font-size="10.8" fill="#36a448" >/6E76</text>
<line x1="100.5" y1="374" x2="100.5" y2="388" stroke="#8a8a8a" stroke-width="1" />
<line x1="169.5" y1="374" x2="169.5" y2="388" stroke="#8a8a8a" stroke-width="1" />
<line x1="203.5" y1="374" x2="203.5" y2="388" stroke="#8a8a8a" stroke-width="1" />
<line x1="237.5" y1="374" x2="237.5" y2="388" stroke="#8a8a8a" stroke-width="1" />
<line x1="270.5" y1="374" x2="270.5" y2="388" stroke="#8a8a8a" stroke-width="1" />
<line x1="304.5" y1="374" x2="304.5" y2="388" stroke="#8a8a8a" stroke-width="1" />
<line x1="338.5" y1="374" x2="338.5" y2="388" stroke="#8a8a8a" stroke-width="1" />
<line x1="373.5" y1="374" x2="373.5" y2="388" stroke="#8a8a8a" stroke-width="1" />
<line x1="407.5" y1="374" x2="407.5" y2="388" stroke="#8a8a8a" stroke-width="1" />
<line x1="441.5" y1="374" x2="441.5" y2="388" stroke="#8a8a8a" stroke-width="1" />
<line x1="509.5" y1="374" x2="509.5" y2="388" stroke="#8a8a8a" stroke-width="1" />
<line x1="543.5" y1="374" x2="543.5" y2="388" stroke="#8a8a8a" stroke-width="1" />
<line x1="611" y1="374" x2="611" y2="388" stroke="#8a8a8a" stroke-width="1" />
<rect x="0" y="389" width="612" height="9" fill="#000000" />
<polygon points="0,389 34,389 38,398 0,398" fill="#c8c8c8" stroke="none" stroke-width="1" />
<polygon points="0,393 0,398 3,398" fill="#808080" stroke="none" stroke-width="1" />
<text class="m" transform="translate(6,396.5) scale(1.0,1)" text-anchor="start" font-size="10" fill="#000000" font-weight="bold">Text</text>
<polygon points="57,398 61,389 82,389 79,398" fill="#c8c8c8" stroke="none" stroke-width="1" />
<text class="m" transform="translate(63,396.5) scale(1.0,1)" text-anchor="start" font-size="10" fill="#000000" font-weight="bold">2d</text>
<rect x="83" y="389" width="14.5" height="9" fill="#f0f0f0" />
<text class="m" transform="translate(86,396.5) scale(1.0,1)" text-anchor="start" font-size="10" fill="#333333" >&lt;</text>
<rect x="97.5" y="389" width="515" height="9" fill="#cdcdcd" />
<rect x="0" y="400" width="386" height="413" fill="#000000" />
<text class="m" transform="translate(-0.5,409.94) scale(0.9104938271604939,1)" text-anchor="start" font-size="10.8" fill="#12f012" font-weight="bold" fill-opacity="0.95">4D1CE</text>
<text class="m" transform="translate(-0.5,421.74) scale(0.9104938271604939,1)" text-anchor="start" font-size="10.8" fill="#12f012" font-weight="bold" fill-opacity="0.95">4D1DE</text>
<text class="m" transform="translate(-0.5,433.54) scale(0.9104938271604939,1)" text-anchor="start" font-size="10.8" fill="#12f012" font-weight="bold" fill-opacity="0.95">4D1EE</text>
<text class="m" transform="translate(-0.5,445.34) scale(0.9104938271604939,1)" text-anchor="start" font-size="10.8" fill="#12f012" font-weight="bold" fill-opacity="0.95">4D1FE</text>
<text class="m" transform="translate(-0.5,457.14) scale(0.9104938271604939,1)" text-anchor="start" font-size="10.8" fill="#12f012" font-weight="bold" fill-opacity="0.95">4D20E</text>
<text class="m" transform="translate(-0.5,468.94) scale(0.9104938271604939,1)" text-anchor="start" font-size="10.8" fill="#12f012" font-weight="bold" fill-opacity="0.95">4D21E</text>
<text class="m" transform="translate(-0.5,480.74) scale(0.9104938271604939,1)" text-anchor="start" font-size="10.8" fill="#12f012" font-weight="bold" fill-opacity="0.95">4D22E</text>
<text class="m" transform="translate(-0.5,492.54) scale(0.9104938271604939,1)" text-anchor="start" font-size="10.8" fill="#12f012" font-weight="bold" fill-opacity="0.95">4D23E</text>
<text class="m" transform="translate(-0.5,504.34) scale(0.9104938271604939,1)" text-anchor="start" font-size="10.8" fill="#12f012" font-weight="bold" fill-opacity="0.95">4D24E</text>
<text class="m" transform="translate(-0.5,516.14) scale(0.9104938271604939,1)" text-anchor="start" font-size="10.8" fill="#12f012" font-weight="bold" fill-opacity="0.95">4D25E</text>
<text class="m" transform="translate(-0.5,527.94) scale(0.9104938271604939,1)" text-anchor="start" font-size="10.8" fill="#12f012" font-weight="bold" fill-opacity="0.95">4D26E</text>
<text class="m" transform="translate(-0.5,539.74) scale(0.9104938271604939,1)" text-anchor="start" font-size="10.8" fill="#12f012" font-weight="bold" fill-opacity="0.95">4D27E</text>
<text class="m" transform="translate(-0.5,551.54) scale(0.9104938271604939,1)" text-anchor="start" font-size="10.8" fill="#12f012" font-weight="bold" fill-opacity="0.95">4D28E</text>
<text class="m" transform="translate(-0.5,563.34) scale(0.9104938271604939,1)" text-anchor="start" font-size="10.8" fill="#12f012" font-weight="bold" fill-opacity="0.95">4D29E</text>
<text class="m" transform="translate(-0.5,575.14) scale(0.9104938271604939,1)" text-anchor="start" font-size="10.8" fill="#12f012" font-weight="bold" fill-opacity="0.95">4D2AE</text>
<text class="m" transform="translate(-0.5,586.94) scale(0.9104938271604939,1)" text-anchor="start" font-size="10.8" fill="#12f012" font-weight="bold" fill-opacity="0.95">4D2BE</text>
<text class="m" transform="translate(-0.5,598.74) scale(0.9104938271604939,1)" text-anchor="start" font-size="10.8" fill="#12f012" font-weight="bold" fill-opacity="0.95">4D2CE</text>
<text class="m" transform="translate(-0.5,610.54) scale(0.9104938271604939,1)" text-anchor="start" font-size="10.8" fill="#12f012" font-weight="bold" fill-opacity="0.95">4D2DE</text>
<text class="m" transform="translate(-0.5,622.34) scale(0.9104938271604939,1)" text-anchor="start" font-size="10.8" fill="#12f012" font-weight="bold" fill-opacity="0.95">4D2EE</text>
<text class="m" transform="translate(-0.5,634.14) scale(0.9104938271604939,1)" text-anchor="start" font-size="10.8" fill="#12f012" font-weight="bold" fill-opacity="0.95">4D2FE</text>
<text class="m" transform="translate(-0.5,645.94) scale(0.9104938271604939,1)" text-anchor="start" font-size="10.8" fill="#12f012" font-weight="bold" fill-opacity="0.95">4D30E</text>
<text class="m" transform="translate(-0.5,657.74) scale(0.9104938271604939,1)" text-anchor="start" font-size="10.8" fill="#12f012" font-weight="bold" fill-opacity="0.95">4D31E</text>
<text class="m" transform="translate(-0.5,669.54) scale(0.9104938271604939,1)" text-anchor="start" font-size="10.8" fill="#12f012" font-weight="bold" fill-opacity="0.95">4D32E</text>
<text class="m" transform="translate(-0.5,681.34) scale(0.9104938271604939,1)" text-anchor="start" font-size="10.8" fill="#12f012" font-weight="bold" fill-opacity="0.95">4D33E</text>
<text class="m" transform="translate(-0.5,693.14) scale(0.9104938271604939,1)" text-anchor="start" font-size="10.8" fill="#12f012" font-weight="bold" fill-opacity="0.95">4D34E</text>
<text class="m" transform="translate(-0.5,704.94) scale(0.9104938271604939,1)" text-anchor="start" font-size="10.8" fill="#12f012" font-weight="bold" fill-opacity="0.95">4D35E</text>
<text class="m" transform="translate(-0.5,716.74) scale(0.9104938271604939,1)" text-anchor="start" font-size="10.8" fill="#12f012" font-weight="bold" fill-opacity="0.95">4D36E</text>
<text class="m" transform="translate(-0.5,728.54) scale(0.9104938271604939,1)" text-anchor="start" font-size="10.8" fill="#12f012" font-weight="bold" fill-opacity="0.95">4D37E</text>
<text class="m" transform="translate(-0.5,740.34) scale(0.9104938271604939,1)" text-anchor="start" font-size="10.8" fill="#12f012" font-weight="bold" fill-opacity="0.95">4D38E</text>
<text class="m" transform="translate(-0.5,752.14) scale(0.9104938271604939,1)" text-anchor="start" font-size="10.8" fill="#12f012" font-weight="bold" fill-opacity="0.95">4D39E</text>
<text class="m" transform="translate(-0.5,763.94) scale(0.9104938271604939,1)" text-anchor="start" font-size="10.8" fill="#12f012" font-weight="bold" fill-opacity="0.95">4D3AE</text>
<text class="m" transform="translate(-0.5,775.74) scale(0.9104938271604939,1)" text-anchor="start" font-size="10.8" fill="#12f012" font-weight="bold" fill-opacity="0.95">4D3BE</text>
<text class="m" transform="translate(-0.5,787.54) scale(0.9104938271604939,1)" text-anchor="start" font-size="10.8" fill="#12f012" font-weight="bold" fill-opacity="0.95">4D3CE</text>
<line x1="37.5" y1="400" x2="37.5" y2="788" stroke="#00ff00" stroke-width="1" />
<rect x="36" y="447" width="4" height="13" fill="#ffffff" />
<line x1="37.5" y1="447" x2="37.5" y2="460" stroke="#ff00ff" stroke-width="1" />
<rect x="47" y="447" width="287" height="190" fill="#404040" />
<text class="m" transform="translate(47.5,409.94) scale(0.8873456790123456,1)" text-anchor="start" font-size="10.8" fill="#12f012" >09490</text>
<text class="m" transform="translate(83.4,409.94) scale(0.8873456790123456,1)" text-anchor="start" font-size="10.8" fill="#12f012" >09490</text>
<text class="m" transform="translate(119.3,409.94) scale(0.8873456790123456,1)" text-anchor="start" font-size="10.8" fill="#12f012" >09490</text>
<text class="m" transform="translate(155.2,409.94) scale(0.8873456790123456,1)" text-anchor="start" font-size="10.8" fill="#12f012" >09490</text>
<text class="m" transform="translate(191.1,409.94) scale(0.8873456790123456,1)" text-anchor="start" font-size="10.8" fill="#12f012" >00462</text>
<text class="m" transform="translate(227,409.94) scale(0.8873456790123456,1)" text-anchor="start" font-size="10.8" fill="#12f012" >00016</text>
<text class="m" transform="translate(262.9,409.94) scale(0.8873456790123456,1)" text-anchor="start" font-size="10.8" fill="#12f012" >00000</text>
<text class="m" transform="translate(298.8,409.94) scale(0.8873456790123456,1)" text-anchor="start" font-size="10.8" fill="#12f012" >00399</text>
<text class="m" transform="translate(47.5,421.74) scale(0.8873456790123456,1)" text-anchor="start" font-size="10.8" fill="#12f012" >00609</text>
<text class="m" transform="translate(83.4,421.74) scale(0.8873456790123456,1)" text-anchor="start" font-size="10.8" fill="#12f012" >00659</text>
<text class="m" transform="translate(119.3,421.74) scale(0.8873456790123456,1)" text-anchor="start" font-size="10.8" fill="#12f012" >00790</text>
<text class="m" transform="translate(155.2,421.74) scale(0.8873456790123456,1)" text-anchor="start" font-size="10.8" fill="#12f012" >009C0</text>
<text class="m" transform="translate(191.1,421.74) scale(0.8873456790123456,1)" text-anchor="start" font-size="10.8" fill="#12f012" >01000</text>
<text class="m" transform="translate(227,421.74) scale(0.8873456790123456,1)" text-anchor="start" font-size="10.8" fill="#12f012" >01113</text>
<text class="m" transform="translate(262.9,421.74) scale(0.8873456790123456,1)" text-anchor="start" font-size="10.8" fill="#12f012" >01210</text>
<text class="m" transform="translate(298.8,421.74) scale(0.8873456790123456,1)" text-anchor="start" font-size="10.8" fill="#12f012" >01491</text>
<text class="m" transform="translate(47.5,433.54) scale(0.8873456790123456,1)" text-anchor="start" font-size="10.8" fill="#12f012" >01995</text>
<text class="m" transform="translate(83.4,433.54) scale(0.8873456790123456,1)" text-anchor="start" font-size="10.8" fill="#12f012" >02499</text>
<text class="m" transform="translate(119.3,433.54) scale(0.8873456790123456,1)" text-anchor="start" font-size="10.8" fill="#12f012" >03000</text>
<text class="m" transform="translate(155.2,433.54) scale(0.8873456790123456,1)" text-anchor="start" font-size="10.8" fill="#12f012" >0399C</text>
<text class="m" transform="translate(191.1,433.54) scale(0.8873456790123456,1)" text-anchor="start" font-size="10.8" fill="#12f012" >04998</text>
<text class="m" transform="translate(227,433.54) scale(0.8873456790123456,1)" text-anchor="start" font-size="10.8" fill="#12f012" >05333</text>
<text class="m" transform="translate(262.9,433.54) scale(0.8873456790123456,1)" text-anchor="start" font-size="10.8" fill="#12f012" >49336</text>
<text class="m" transform="translate(298.8,433.54) scale(0.8873456790123456,1)" text-anchor="start" font-size="10.8" fill="#12f012" >00008</text>
<text class="m" transform="translate(155.2,445.34) scale(0.8873456790123456,1)" text-anchor="start" font-size="10.8" fill="#12f012" >02500</text>
<text class="m" transform="translate(191.1,445.34) scale(0.8873456790123456,1)" text-anchor="start" font-size="10.8" fill="#12f012" >03700</text>
<text class="m" transform="translate(227,445.34) scale(0.8873456790123456,1)" text-anchor="start" font-size="10.8" fill="#12f012" >05600</text>
<text class="m" transform="translate(262.9,445.34) scale(0.8873456790123456,1)" text-anchor="start" font-size="10.8" fill="#12f012" >08000</text>
<text class="m" transform="translate(298.8,445.34) scale(0.8873456790123456,1)" text-anchor="start" font-size="10.8" fill="#12f012" >10000</text>
<text class="m" transform="translate(47.5,457.14) scale(0.8873456790123456,1)" text-anchor="start" font-size="10.8" fill="#12f012" >01070</text>
<text class="m" transform="translate(83.4,457.14) scale(0.8873456790123456,1)" text-anchor="start" font-size="10.8" fill="#12f012" >04150</text>
<text class="m" transform="translate(119.3,457.14) scale(0.8873456790123456,1)" text-anchor="start" font-size="10.8" fill="#12f012" >04600</text>
<text class="m" transform="translate(155.2,457.14) scale(0.8873456790123456,1)" text-anchor="start" font-size="10.8" fill="#12f012" >05400</text>
<text class="m" transform="translate(191.1,457.14) scale(0.8873456790123456,1)" text-anchor="start" font-size="10.8" fill="#12f012" >06170</text>
<text class="m" transform="translate(227,457.14) scale(0.8873456790123456,1)" text-anchor="start" font-size="10.8" fill="#12f012" >06090</text>
<text class="m" transform="translate(262.9,457.14) scale(0.8873456790123456,1)" text-anchor="start" font-size="10.8" fill="#12f012" >07000</text>
<text class="m" transform="translate(298.8,457.14) scale(0.8873456790123456,1)" text-anchor="start" font-size="10.8" fill="#12f012" >07000</text>
<text class="m" transform="translate(47.5,468.94) scale(0.8873456790123456,1)" text-anchor="start" font-size="10.8" fill="#12f012" >00770</text>
<text class="m" transform="translate(83.4,468.94) scale(0.8873456790123456,1)" text-anchor="start" font-size="10.8" fill="#12f012" >02700</text>
<text class="m" transform="translate(119.3,468.94) scale(0.8873456790123456,1)" text-anchor="start" font-size="10.8" fill="#12f012" >03334</text>
<text class="m" transform="translate(155.2,468.94) scale(0.8873456790123456,1)" text-anchor="start" font-size="10.8" fill="#12f012" >04120</text>
<text class="m" transform="translate(191.1,468.94) scale(0.8873456790123456,1)" text-anchor="start" font-size="10.8" fill="#12f012" >04950</text>
<text class="m" transform="translate(227,468.94) scale(0.8873456790123456,1)" text-anchor="start" font-size="10.8" fill="#12f012" >06270</text>
<text class="m" transform="translate(262.9,468.94) scale(0.8873456790123456,1)" text-anchor="start" font-size="10.8" fill="#12f012" >07000</text>
<text class="m" transform="translate(298.8,468.94) scale(0.8873456790123456,1)" text-anchor="start" font-size="10.8" fill="#12f012" >07000</text>
<text class="m" transform="translate(47.5,480.74) scale(0.8873456790123456,1)" text-anchor="start" font-size="10.8" fill="#12f012" >00000</text>
<text class="m" transform="translate(83.4,480.74) scale(0.8873456790123456,1)" text-anchor="start" font-size="10.8" fill="#12f012" >01962</text>
<text class="m" transform="translate(119.3,480.74) scale(0.8873456790123456,1)" text-anchor="start" font-size="10.8" fill="#12f012" >02580</text>
<text class="m" transform="translate(155.2,480.74) scale(0.8873456790123456,1)" text-anchor="start" font-size="10.8" fill="#12f012" >03470</text>
<text class="m" transform="translate(191.1,480.74) scale(0.8873456790123456,1)" text-anchor="start" font-size="10.8" fill="#12f012" >04360</text>
<text class="m" transform="translate(227,480.74) scale(0.8873456790123456,1)" text-anchor="start" font-size="10.8" fill="#12f012" >06510</text>
<text class="m" transform="translate(262.9,480.74) scale(0.8873456790123456,1)" text-anchor="start" font-size="10.8" fill="#12f012" >07000</text>
<text class="m" transform="translate(298.8,480.74) scale(0.8873456790123456,1)" text-anchor="start" font-size="10.8" fill="#12f012" >07000</text>
<text class="m" transform="translate(47.5,492.54) scale(0.8873456790123456,1)" text-anchor="start" font-size="10.8" fill="#12f012" >00000</text>
<text class="m" transform="translate(83.4,492.54) scale(0.8873456790123456,1)" text-anchor="start" font-size="10.8" fill="#12f012" >01600</text>
<text class="m" transform="translate(119.3,492.54) scale(0.8873456790123456,1)" text-anchor="start" font-size="10.8" fill="#12f012" >02270</text>
<text class="m" transform="translate(155.2,492.54) scale(0.8873456790123456,1)" text-anchor="start" font-size="10.8" fill="#12f012" >03200</text>
<text class="m" transform="translate(191.1,492.54) scale(0.8873456790123456,1)" text-anchor="start" font-size="10.8" fill="#12f012" >04140</text>
<text class="m" transform="translate(227,492.54) scale(0.8873456790123456,1)" text-anchor="start" font-size="10.8" fill="#12f012" >05760</text>
<text class="m" transform="translate(262.9,492.54) scale(0.8873456790123456,1)" text-anchor="start" font-size="10.8" fill="#12f012" >07000</text>
<text class="m" transform="translate(298.8,492.54) scale(0.8873456790123456,1)" text-anchor="start" font-size="10.8" fill="#12f012" >07000</text>
<text class="m" transform="translate(47.5,504.34) scale(0.8873456790123456,1)" text-anchor="start" font-size="10.8" fill="#12f012" >00000</text>
<text class="m" transform="translate(83.4,504.34) scale(0.8873456790123456,1)" text-anchor="start" font-size="10.8" fill="#12f012" >01140</text>
<text class="m" transform="translate(119.3,504.34) scale(0.8873456790123456,1)" text-anchor="start" font-size="10.8" fill="#12f012" >01900</text>
<text class="m" transform="translate(155.2,504.34) scale(0.8873456790123456,1)" text-anchor="start" font-size="10.8" fill="#12f012" >02830</text>
<text class="m" transform="translate(191.1,504.34) scale(0.8873456790123456,1)" text-anchor="start" font-size="10.8" fill="#12f012" >03760</text>
<text class="m" transform="translate(227,504.34) scale(0.8873456790123456,1)" text-anchor="start" font-size="10.8" fill="#12f012" >05630</text>
<text class="m" transform="translate(262.9,504.34) scale(0.8873456790123456,1)" text-anchor="start" font-size="10.8" fill="#12f012" >07000</text>
<text class="m" transform="translate(298.8,504.34) scale(0.8873456790123456,1)" text-anchor="start" font-size="10.8" fill="#12f012" >07000</text>
<text class="m" transform="translate(47.5,516.14) scale(0.8873456790123456,1)" text-anchor="start" font-size="10.8" fill="#12f012" >00000</text>
<text class="m" transform="translate(83.4,516.14) scale(0.8873456790123456,1)" text-anchor="start" font-size="10.8" fill="#12f012" >00660</text>
<text class="m" transform="translate(119.3,516.14) scale(0.8873456790123456,1)" text-anchor="start" font-size="10.8" fill="#12f012" >01500</text>
<text class="m" transform="translate(155.2,516.14) scale(0.8873456790123456,1)" text-anchor="start" font-size="10.8" fill="#12f012" >02460</text>
<text class="m" transform="translate(191.1,516.14) scale(0.8873456790123456,1)" text-anchor="start" font-size="10.8" fill="#12f012" >03390</text>
<text class="m" transform="translate(227,516.14) scale(0.8873456790123456,1)" text-anchor="start" font-size="10.8" fill="#12f012" >05470</text>
<text class="m" transform="translate(262.9,516.14) scale(0.8873456790123456,1)" text-anchor="start" font-size="10.8" fill="#12f012" >07000</text>
<text class="m" transform="translate(298.8,516.14) scale(0.8873456790123456,1)" text-anchor="start" font-size="10.8" fill="#12f012" >07000</text>
<text class="m" transform="translate(47.5,527.94) scale(0.8873456790123456,1)" text-anchor="start" font-size="10.8" fill="#12f012" >00000</text>
<text class="m" transform="translate(83.4,527.94) scale(0.8873456790123456,1)" text-anchor="start" font-size="10.8" fill="#12f012" >00490</text>
<text class="m" transform="translate(119.3,527.94) scale(0.8873456790123456,1)" text-anchor="start" font-size="10.8" fill="#12f012" >01100</text>
<text class="m" transform="translate(155.2,527.94) scale(0.8873456790123456,1)" text-anchor="start" font-size="10.8" fill="#12f012" >02100</text>
<text class="m" transform="translate(191.1,527.94) scale(0.8873456790123456,1)" text-anchor="start" font-size="10.8" fill="#12f012" >03030</text>
<text class="m" transform="translate(227,527.94) scale(0.8873456790123456,1)" text-anchor="start" font-size="10.8" fill="#12f012" >05310</text>
<text class="m" transform="translate(262.9,527.94) scale(0.8873456790123456,1)" text-anchor="start" font-size="10.8" fill="#12f012" >07000</text>
<text class="m" transform="translate(298.8,527.94) scale(0.8873456790123456,1)" text-anchor="start" font-size="10.8" fill="#12f012" >07000</text>
<text class="m" transform="translate(47.5,539.74) scale(0.8873456790123456,1)" text-anchor="start" font-size="10.8" fill="#12f012" >00000</text>
<text class="m" transform="translate(83.4,539.74) scale(0.8873456790123456,1)" text-anchor="start" font-size="10.8" fill="#12f012" >00380</text>
<text class="m" transform="translate(119.3,539.74) scale(0.8873456790123456,1)" text-anchor="start" font-size="10.8" fill="#12f012" >00800</text>
<text class="m" transform="translate(155.2,539.74) scale(0.8873456790123456,1)" text-anchor="start" font-size="10.8" fill="#12f012" >01835</text>
<text class="m" transform="translate(191.1,539.74) scale(0.8873456790123456,1)" text-anchor="start" font-size="10.8" fill="#12f012" >02720</text>
<text class="m" transform="translate(227,539.74) scale(0.8873456790123456,1)" text-anchor="start" font-size="10.8" fill="#12f012" >05132</text>
<text class="m" transform="translate(262.9,539.74) scale(0.8873456790123456,1)" text-anchor="start" font-size="10.8" fill="#12f012" >06500</text>
<text class="m" transform="translate(298.8,539.74) scale(0.8873456790123456,1)" text-anchor="start" font-size="10.8" fill="#12f012" >07000</text>
<text class="m" transform="translate(47.5,551.54) scale(0.8873456790123456,1)" text-anchor="start" font-size="10.8" fill="#12f012" >00000</text>
<text class="m" transform="translate(83.4,551.54) scale(0.8873456790123456,1)" text-anchor="start" font-size="10.8" fill="#12f012" >00280</text>
<text class="m" transform="translate(119.3,551.54) scale(0.8873456790123456,1)" text-anchor="start" font-size="10.8" fill="#12f012" >00650</text>
<text class="m" transform="translate(155.2,551.54) scale(0.8873456790123456,1)" text-anchor="start" font-size="10.8" fill="#12f012" >01570</text>
<text class="m" transform="translate(191.1,551.54) scale(0.8873456790123456,1)" text-anchor="start" font-size="10.8" fill="#12f012" >02460</text>
<text class="m" transform="translate(227,551.54) scale(0.8873456790123456,1)" text-anchor="start" font-size="10.8" fill="#12f012" >04960</text>
<text class="m" transform="translate(262.9,551.54) scale(0.8873456790123456,1)" text-anchor="start" font-size="10.8" fill="#12f012" >06800</text>
<text class="m" transform="translate(298.8,551.54) scale(0.8873456790123456,1)" text-anchor="start" font-size="10.8" fill="#12f012" >07000</text>
<text class="m" transform="translate(47.5,563.34) scale(0.8873456790123456,1)" text-anchor="start" font-size="10.8" fill="#12f012" >00000</text>
<text class="m" transform="translate(83.4,563.34) scale(0.8873456790123456,1)" text-anchor="start" font-size="10.8" fill="#12f012" >00150</text>
<text class="m" transform="translate(119.3,563.34) scale(0.8873456790123456,1)" text-anchor="start" font-size="10.8" fill="#12f012" >00350</text>
<text class="m" transform="translate(155.2,563.34) scale(0.8873456790123456,1)" text-anchor="start" font-size="10.8" fill="#12f012" >01150</text>
<text class="m" transform="translate(191.1,563.34) scale(0.8873456790123456,1)" text-anchor="start" font-size="10.8" fill="#12f012" >02066</text>
<text class="m" transform="translate(227,563.34) scale(0.8873456790123456,1)" text-anchor="start" font-size="10.8" fill="#12f012" >04560</text>
<text class="m" transform="translate(262.9,563.34) scale(0.8873456790123456,1)" text-anchor="start" font-size="10.8" fill="#12f012" >06600</text>
<text class="m" transform="translate(298.8,563.34) scale(0.8873456790123456,1)" text-anchor="start" font-size="10.8" fill="#12f012" >07000</text>
<text class="m" transform="translate(47.5,575.14) scale(0.8873456790123456,1)" text-anchor="start" font-size="10.8" fill="#12f012" >00000</text>
<text class="m" transform="translate(83.4,575.14) scale(0.8873456790123456,1)" text-anchor="start" font-size="10.8" fill="#12f012" >00100</text>
<text class="m" transform="translate(119.3,575.14) scale(0.8873456790123456,1)" text-anchor="start" font-size="10.8" fill="#12f012" >00250</text>
<text class="m" transform="translate(155.2,575.14) scale(0.8873456790123456,1)" text-anchor="start" font-size="10.8" fill="#12f012" >00900</text>
<text class="m" transform="translate(191.1,575.14) scale(0.8873456790123456,1)" text-anchor="start" font-size="10.8" fill="#12f012" >01700</text>
<text class="m" transform="translate(227,575.14) scale(0.8873456790123456,1)" text-anchor="start" font-size="10.8" fill="#12f012" >04132</text>
<text class="m" transform="translate(262.9,575.14) scale(0.8873456790123456,1)" text-anchor="start" font-size="10.8" fill="#12f012" >06510</text>
<text class="m" transform="translate(298.8,575.14) scale(0.8873456790123456,1)" text-anchor="start" font-size="10.8" fill="#12f012" >07000</text>
<text class="m" transform="translate(47.5,586.94) scale(0.8873456790123456,1)" text-anchor="start" font-size="10.8" fill="#12f012" >00000</text>
<text class="m" transform="translate(83.4,586.94) scale(0.8873456790123456,1)" text-anchor="start" font-size="10.8" fill="#12f012" >00070</text>
<text class="m" transform="translate(119.3,586.94) scale(0.8873456790123456,1)" text-anchor="start" font-size="10.8" fill="#12f012" >00200</text>
<text class="m" transform="translate(155.2,586.94) scale(0.8873456790123456,1)" text-anchor="start" font-size="10.8" fill="#12f012" >00750</text>
<text class="m" transform="translate(191.1,586.94) scale(0.8873456790123456,1)" text-anchor="start" font-size="10.8" fill="#12f012" >01500</text>
<text class="m" transform="translate(227,586.94) scale(0.8873456790123456,1)" text-anchor="start" font-size="10.8" fill="#12f012" >03832</text>
<text class="m" transform="translate(262.9,586.94) scale(0.8873456790123456,1)" text-anchor="start" font-size="10.8" fill="#12f012" >06510</text>
<text class="m" transform="translate(298.8,586.94) scale(0.8873456790123456,1)" text-anchor="start" font-size="10.8" fill="#12f012" >07000</text>
<text class="m" transform="translate(47.5,598.74) scale(0.8873456790123456,1)" text-anchor="start" font-size="10.8" fill="#12f012" >00000</text>
<text class="m" transform="translate(83.4,598.74) scale(0.8873456790123456,1)" text-anchor="start" font-size="10.8" fill="#12f012" >00050</text>
<text class="m" transform="translate(119.3,598.74) scale(0.8873456790123456,1)" text-anchor="start" font-size="10.8" fill="#12f012" >00150</text>
<text class="m" transform="translate(155.2,598.74) scale(0.8873456790123456,1)" text-anchor="start" font-size="10.8" fill="#12f012" >00650</text>
<text class="m" transform="translate(191.1,598.74) scale(0.8873456790123456,1)" text-anchor="start" font-size="10.8" fill="#12f012" >01300</text>
<text class="m" transform="translate(227,598.74) scale(0.8873456790123456,1)" text-anchor="start" font-size="10.8" fill="#12f012" >03550</text>
<text class="m" transform="translate(262.9,598.74) scale(0.8873456790123456,1)" text-anchor="start" font-size="10.8" fill="#12f012" >06510</text>
<text class="m" transform="translate(298.8,598.74) scale(0.8873456790123456,1)" text-anchor="start" font-size="10.8" fill="#12f012" >07000</text>
<text class="m" transform="translate(47.5,610.54) scale(0.8873456790123456,1)" text-anchor="start" font-size="10.8" fill="#12f012" >00000</text>
<text class="m" transform="translate(83.4,610.54) scale(0.8873456790123456,1)" text-anchor="start" font-size="10.8" fill="#12f012" >00000</text>
<text class="m" transform="translate(119.3,610.54) scale(0.8873456790123456,1)" text-anchor="start" font-size="10.8" fill="#12f012" >00100</text>
<text class="m" transform="translate(155.2,610.54) scale(0.8873456790123456,1)" text-anchor="start" font-size="10.8" fill="#12f012" >00499</text>
<text class="m" transform="translate(191.1,610.54) scale(0.8873456790123456,1)" text-anchor="start" font-size="10.8" fill="#12f012" >01090</text>
<text class="m" transform="translate(227,610.54) scale(0.8873456790123456,1)" text-anchor="start" font-size="10.8" fill="#12f012" >03188</text>
<text class="m" transform="translate(262.9,610.54) scale(0.8873456790123456,1)" text-anchor="start" font-size="10.8" fill="#12f012" >06510</text>
<text class="m" transform="translate(298.8,610.54) scale(0.8873456790123456,1)" text-anchor="start" font-size="10.8" fill="#12f012" >07000</text>
<text class="m" transform="translate(47.5,622.34) scale(0.8873456790123456,1)" text-anchor="start" font-size="10.8" fill="#12f012" >00000</text>
<text class="m" transform="translate(83.4,622.34) scale(0.8873456790123456,1)" text-anchor="start" font-size="10.8" fill="#12f012" >00000</text>
<text class="m" transform="translate(119.3,622.34) scale(0.8873456790123456,1)" text-anchor="start" font-size="10.8" fill="#12f012" >00000</text>
<text class="m" transform="translate(155.2,622.34) scale(0.8873456790123456,1)" text-anchor="start" font-size="10.8" fill="#12f012" >00262</text>
<text class="m" transform="translate(191.1,622.34) scale(0.8873456790123456,1)" text-anchor="start" font-size="10.8" fill="#12f012" >00788</text>
<text class="m" transform="translate(227,622.34) scale(0.8873456790123456,1)" text-anchor="start" font-size="10.8" fill="#12f012" >02666</text>
<text class="m" transform="translate(262.9,622.34) scale(0.8873456790123456,1)" text-anchor="start" font-size="10.8" fill="#12f012" >06510</text>
<text class="m" transform="translate(298.8,622.34) scale(0.8873456790123456,1)" text-anchor="start" font-size="10.8" fill="#12f012" >07000</text>
<text class="m" transform="translate(47.5,634.14) scale(0.8873456790123456,1)" text-anchor="start" font-size="10.8" fill="#12f012" >00000</text>
<text class="m" transform="translate(83.4,634.14) scale(0.8873456790123456,1)" text-anchor="start" font-size="10.8" fill="#12f012" >00000</text>
<text class="m" transform="translate(119.3,634.14) scale(0.8873456790123456,1)" text-anchor="start" font-size="10.8" fill="#12f012" >00000</text>
<text class="m" transform="translate(155.2,634.14) scale(0.8873456790123456,1)" text-anchor="start" font-size="10.8" fill="#12f012" >00000</text>
<text class="m" transform="translate(191.1,634.14) scale(0.8873456790123456,1)" text-anchor="start" font-size="10.8" fill="#12f012" >00110</text>
<text class="m" transform="translate(227,634.14) scale(0.8873456790123456,1)" text-anchor="start" font-size="10.8" fill="#12f012" >02000</text>
<text class="m" transform="translate(262.9,634.14) scale(0.8873456790123456,1)" text-anchor="start" font-size="10.8" fill="#12f012" >06510</text>
<text class="m" transform="translate(298.8,634.14) scale(0.8873456790123456,1)" text-anchor="start" font-size="10.8" fill="#12f012" >07000</text>
<text class="m" transform="translate(155.2,645.94) scale(0.8873456790123456,1)" text-anchor="start" font-size="10.8" fill="#12f012" >03960</text>
<text class="m" transform="translate(191.1,645.94) scale(0.8873456790123456,1)" text-anchor="start" font-size="10.8" fill="#12f012" >03960</text>
<text class="m" transform="translate(227,645.94) scale(0.8873456790123456,1)" text-anchor="start" font-size="10.8" fill="#12f012" >03960</text>
<text class="m" transform="translate(262.9,645.94) scale(0.8873456790123456,1)" text-anchor="start" font-size="10.8" fill="#12f012" >03960</text>
<text class="m" transform="translate(298.8,645.94) scale(0.8873456790123456,1)" text-anchor="start" font-size="10.8" fill="#12f012" >03960</text>
<line x1="115.5" y1="400" x2="115.5" y2="650" stroke="#0a6a0a" stroke-width="1" />
<line x1="187.5" y1="400" x2="187.5" y2="650" stroke="#0a6a0a" stroke-width="1" />
<line x1="258.5" y1="400" x2="258.5" y2="650" stroke="#0a6a0a" stroke-width="1" />
<polyline points="48,413 190,413 190,401.5 333,401.5 333,636 48,636 48,413" fill="none" stroke="#ff0000" stroke-width="2.2"/>
<rect x="47" y="446" width="287" height="2.2" fill="#ff0000" />
<rect x="47" y="436.5" width="106" height="10" fill="#ff0000" />
<text class="s" x="48" y="445" font-size="10.5" fill="#ffffff" textLength="104" lengthAdjust="spacingAndGlyphs">Statistical: 8x15 (16 Bit)</text>
<rect x="48" y="447.5" width="28" height="12.5" fill="#c0c0c0" />
<line x1="48.5" y1="447.5" x2="48.5" y2="460" stroke="#00ffff" stroke-width="1" />
<line x1="48" y1="448" x2="76" y2="448" stroke="#00ffff" stroke-width="1" />
<text class="m" transform="translate(47.5,457.14) scale(0.8873456790123456,1)" text-anchor="start" font-size="10.8" fill="#ff00ff" >01070</text>
<rect x="46" y="637.5" width="290" height="2" fill="#008080" />
<rect x="46" y="638.5" width="105" height="11" fill="#008080" />
<rect x="46" y="648.5" width="290" height="2" fill="#008080" />
<text class="s" x="47" y="647.5" font-size="10.5" fill="#ffffff" textLength="102" lengthAdjust="spacingAndGlyphs">Statistical: 16x8 (16 Bit)</text>
<line x1="333.5" y1="637" x2="333.5" y2="650" stroke="#008080" stroke-width="1" />
<rect x="46" y="400" width="2" height="11" fill="#008080" />
<line x1="335.5" y1="400" x2="335.5" y2="788" stroke="#00ff00" stroke-width="1" />
<text class="m" transform="translate(298.8,657.74) scale(0.8873456790123456,1)" text-anchor="start" font-size="10.8" fill="#12f012" >03640</text>
<text class="m" transform="translate(274.4,657.74) scale(0.8873456790123456,1)" text-anchor="start" font-size="10.8" fill="#12f012" >40</text>
<text class="m" transform="translate(298.8,669.54) scale(0.8873456790123456,1)" text-anchor="start" font-size="10.8" fill="#12f012" >03640</text>
<text class="m" transform="translate(274.4,669.54) scale(0.8873456790123456,1)" text-anchor="start" font-size="10.8" fill="#12f012" >40</text>
<text class="m" transform="translate(298.8,681.34) scale(0.8873456790123456,1)" text-anchor="start" font-size="10.8" fill="#12f012" >03540</text>
<text class="m" transform="translate(274.4,681.34) scale(0.8873456790123456,1)" text-anchor="start" font-size="10.8" fill="#12f012" >20</text>
<text class="m" transform="translate(298.8,693.14) scale(0.8873456790123456,1)" text-anchor="start" font-size="10.8" fill="#12f012" >03540</text>
<text class="m" transform="translate(274.4,693.14) scale(0.8873456790123456,1)" text-anchor="start" font-size="10.8" fill="#12f012" >40</text>
<text class="m" transform="translate(298.8,704.94) scale(0.8873456790123456,1)" text-anchor="start" font-size="10.8" fill="#12f012" >03400</text>
<text class="m" transform="translate(274.4,704.94) scale(0.8873456790123456,1)" text-anchor="start" font-size="10.8" fill="#12f012" >40</text>
<text class="m" transform="translate(298.8,716.74) scale(0.8873456790123456,1)" text-anchor="start" font-size="10.8" fill="#12f012" >03400</text>
<text class="m" transform="translate(274.4,716.74) scale(0.8873456790123456,1)" text-anchor="start" font-size="10.8" fill="#12f012" >00</text>
<text class="m" transform="translate(298.8,728.54) scale(0.8873456790123456,1)" text-anchor="start" font-size="10.8" fill="#12f012" >02820</text>
<text class="m" transform="translate(274.4,728.54) scale(0.8873456790123456,1)" text-anchor="start" font-size="10.8" fill="#12f012" >60</text>
<text class="m" transform="translate(298.8,740.34) scale(0.8873456790123456,1)" text-anchor="start" font-size="10.8" fill="#12f012" >02820</text>
<text class="m" transform="translate(274.4,740.34) scale(0.8873456790123456,1)" text-anchor="start" font-size="10.8" fill="#12f012" >20</text>
<text class="m" transform="translate(298.8,752.14) scale(0.8873456790123456,1)" text-anchor="start" font-size="10.8" fill="#12f012" >02820</text>
<text class="m" transform="translate(274.4,752.14) scale(0.8873456790123456,1)" text-anchor="start" font-size="10.8" fill="#12f012" >60</text>
<text class="m" transform="translate(298.8,763.94) scale(0.8873456790123456,1)" text-anchor="start" font-size="10.8" fill="#12f012" >02820</text>
<text class="m" transform="translate(274.4,763.94) scale(0.8873456790123456,1)" text-anchor="start" font-size="10.8" fill="#12f012" >20</text>
<text class="m" transform="translate(298.8,775.74) scale(0.8873456790123456,1)" text-anchor="start" font-size="10.8" fill="#12f012" >02820</text>
<text class="m" transform="translate(274.4,775.74) scale(0.8873456790123456,1)" text-anchor="start" font-size="10.8" fill="#12f012" >60</text>
<text class="m" transform="translate(298.8,787.54) scale(0.8873456790123456,1)" text-anchor="start" font-size="10.8" fill="#12f012" >02820</text>
<text class="m" transform="translate(274.4,787.54) scale(0.8873456790123456,1)" text-anchor="start" font-size="10.8" fill="#12f012" >20</text>
<rect x="339" y="447" width="47" height="190" fill="#404040" />
<rect x="339" y="456" width="5" height="3" fill="#00ff00" />
<rect x="345" y="453" width="5" height="6" fill="#00ff00" />
<rect x="351" y="452" width="5" height="7" fill="#00ff00" />
<rect x="357" y="451" width="5" height="8" fill="#00ff00" />
<rect x="363" y="450" width="5" height="9" fill="#00ff00" />
<rect x="369" y="450" width="5" height="9" fill="#00ff00" />
<rect x="375" y="449" width="5" height="10" fill="#00ff00" />
<rect x="381" y="449" width="5" height="10" fill="#00ff00" />
<rect x="345" y="468" width="5" height="3" fill="#00ff00" />
<rect x="351" y="466" width="5" height="5" fill="#00ff00" />
<rect x="357" y="465" width="5" height="6" fill="#00ff00" />
<rect x="363" y="464" width="5" height="7" fill="#00ff00" />
<rect x="369" y="462" width="5" height="9" fill="#00ff00" />
<rect x="375" y="461" width="5" height="10" fill="#00ff00" />
<rect x="381" y="461" width="5" height="10" fill="#00ff00" />
<rect x="345" y="479" width="5" height="3" fill="#00ff00" />
<rect x="351" y="478" width="5" height="4" fill="#00ff00" />
<rect x="357" y="477" width="5" height="5" fill="#00ff00" />
<rect x="363" y="476" width="5" height="6" fill="#00ff00" />
<rect x="369" y="474" width="5" height="8" fill="#00ff00" />
<rect x="375" y="472" width="5" height="10" fill="#00ff00" />
<rect x="381" y="472" width="5" height="10" fill="#00ff00" />
<rect x="345" y="492" width="5" height="2" fill="#00ff00" />
<rect x="351" y="491" width="5" height="3" fill="#00ff00" />
<rect x="357" y="489" width="5" height="5" fill="#00ff00" />
<rect x="363" y="488" width="5" height="6" fill="#00ff00" />
<rect x="369" y="486" width="5" height="8" fill="#00ff00" />
<rect x="375" y="484" width="5" height="10" fill="#00ff00" />
<rect x="381" y="484" width="5" height="10" fill="#00ff00" />
<rect x="345" y="504" width="5" height="2" fill="#00ff00" />
<rect x="351" y="504" width="5" height="2" fill="#00ff00" />
<rect x="357" y="502" width="5" height="4" fill="#00ff00" />
<rect x="363" y="501" width="5" height="5" fill="#00ff00" />
<rect x="369" y="498" width="5" height="8" fill="#00ff00" />
<rect x="375" y="496" width="5" height="10" fill="#00ff00" />
<rect x="381" y="496" width="5" height="10" fill="#00ff00" />
<rect x="345" y="517" width="5" height="1" fill="#00ff00" />
<rect x="351" y="516" width="5" height="2" fill="#00ff00" />
<rect x="357" y="514" width="5" height="4" fill="#00ff00" />
<rect x="363" y="513" width="5" height="5" fill="#00ff00" />
<rect x="369" y="510" width="5" height="8" fill="#00ff00" />
<rect x="375" y="508" width="5" height="10" fill="#00ff00" />
<rect x="381" y="508" width="5" height="10" fill="#00ff00" />
<rect x="345" y="529" width="5" height="1" fill="#00ff00" />
<rect x="351" y="528" width="5" height="2" fill="#00ff00" />
<rect x="357" y="527" width="5" height="3" fill="#00ff00" />
<rect x="363" y="526" width="5" height="4" fill="#00ff00" />
<rect x="369" y="522" width="5" height="8" fill="#00ff00" />
<rect x="375" y="520" width="5" height="10" fill="#00ff00" />
<rect x="381" y="520" width="5" height="10" fill="#00ff00" />
<rect x="345" y="541" width="5" height="1" fill="#00ff00" />
<rect x="351" y="541" width="5" height="1" fill="#00ff00" />
<rect x="357" y="539" width="5" height="3" fill="#00ff00" />
<rect x="363" y="538" width="5" height="4" fill="#00ff00" />
<rect x="369" y="535" width="5" height="7" fill="#00ff00" />
<rect x="375" y="532" width="5" height="10" fill="#00ff00" />
<rect x="381" y="532" width="5" height="10" fill="#00ff00" />
<rect x="351" y="552" width="5" height="1" fill="#00ff00" />
<rect x="357" y="551" width="5" height="2" fill="#00ff00" />
<rect x="363" y="549" width="5" height="4" fill="#00ff00" />
<rect x="369" y="546" width="5" height="7" fill="#00ff00" />
<rect x="375" y="543" width="5" height="10" fill="#00ff00" />
<rect x="381" y="543" width="5" height="10" fill="#00ff00" />
<rect x="351" y="564" width="5" height="1" fill="#00ff00" />
<rect x="357" y="563" width="5" height="2" fill="#00ff00" />
<rect x="363" y="562" width="5" height="3" fill="#00ff00" />
<rect x="369" y="558" width="5" height="7" fill="#00ff00" />
<rect x="375" y="556" width="5" height="9" fill="#00ff00" />
<rect x="381" y="555" width="5" height="10" fill="#00ff00" />
<rect x="357" y="576" width="5" height="1" fill="#00ff00" />
<rect x="363" y="575" width="5" height="2" fill="#00ff00" />
<rect x="369" y="571" width="5" height="6" fill="#00ff00" />
<rect x="375" y="568" width="5" height="9" fill="#00ff00" />
<rect x="381" y="567" width="5" height="10" fill="#00ff00" />
<rect x="357" y="588" width="5" height="1" fill="#00ff00" />
<rect x="363" y="587" width="5" height="2" fill="#00ff00" />
<rect x="369" y="584" width="5" height="5" fill="#00ff00" />
<rect x="375" y="580" width="5" height="9" fill="#00ff00" />
<rect x="381" y="579" width="5" height="10" fill="#00ff00" />
<rect x="357" y="599" width="5" height="1" fill="#00ff00" />
<rect x="363" y="598" width="5" height="2" fill="#00ff00" />
<rect x="369" y="595" width="5" height="5" fill="#00ff00" />
<rect x="375" y="591" width="5" height="9" fill="#00ff00" />
<rect x="381" y="590" width="5" height="10" fill="#00ff00" />
<rect x="357" y="611" width="5" height="1" fill="#00ff00" />
<rect x="363" y="610" width="5" height="2" fill="#00ff00" />
<rect x="369" y="607" width="5" height="5" fill="#00ff00" />
<rect x="375" y="603" width="5" height="9" fill="#00ff00" />
<rect x="381" y="602" width="5" height="10" fill="#00ff00" />
<rect x="363" y="623" width="5" height="1" fill="#00ff00" />
<rect x="369" y="620" width="5" height="4" fill="#00ff00" />
<rect x="375" y="615" width="5" height="9" fill="#00ff00" />
<rect x="381" y="614" width="5" height="10" fill="#00ff00" />
<rect x="369" y="633" width="5" height="3" fill="#00ff00" />
<rect x="375" y="627" width="5" height="9" fill="#00ff00" />
<rect x="381" y="626" width="5" height="10" fill="#00ff00" />
<rect x="340" y="400" width="5" height="2" fill="#00ff00" />
<rect x="346" y="400" width="5" height="2" fill="#00ff00" />
<rect x="352" y="400" width="5" height="2" fill="#00ff00" />
<rect x="358" y="400" width="5" height="2" fill="#00ff00" />
<rect x="364" y="400" width="5" height="2" fill="#00ff00" />
<rect x="375" y="400" width="5" height="2" fill="#00ff00" />
<rect x="381" y="400" width="5" height="2" fill="#00ff00" />
<rect x="340" y="410" width="5" height="2" fill="#00ff00" />
<rect x="346" y="410" width="5" height="2" fill="#00ff00" />
<rect x="352" y="410" width="5" height="2" fill="#00ff00" />
<rect x="358" y="410" width="5" height="2" fill="#00ff00" />
<rect x="364" y="402" width="5" height="10" fill="#00ff00" />
<rect x="371" y="419" width="5" height="2" fill="#00ff00" />
<rect x="377" y="419" width="5" height="2" fill="#00ff00" />
<rect x="357" y="432" width="5" height="2" fill="#00ff00" />
<rect x="363" y="432" width="5" height="2" fill="#00ff00" />
<rect x="369" y="432" width="5" height="2" fill="#00ff00" />
<rect x="376" y="422" width="5" height="12" fill="#00ff00" />
<rect x="382" y="436" width="4" height="11" fill="#00ff00" />
<rect x="370" y="445" width="5" height="2" fill="#00ff00" />
<rect x="376" y="445" width="5" height="2" fill="#00ff00" />
<rect x="339" y="642" width="5" height="6" fill="#00ff00" />
<rect x="345" y="642" width="5" height="6" fill="#00ff00" />
<rect x="351" y="642" width="5" height="6" fill="#00ff00" />
<rect x="357" y="642" width="5" height="6" fill="#00ff00" />
<rect x="363" y="642" width="5" height="6" fill="#00ff00" />
<rect x="369" y="642" width="5" height="6" fill="#00ff00" />
<rect x="375" y="642" width="5" height="6" fill="#00ff00" />
<rect x="381" y="642" width="5" height="6" fill="#00ff00" />
<rect x="363" y="658" width="5" height="2" fill="#00ff00" />
<rect x="369" y="657" width="5" height="3" fill="#00ff00" />
<rect x="375" y="655" width="5" height="5" fill="#00ff00" />
<rect x="381" y="653" width="5" height="7" fill="#00ff00" />
<rect x="339" y="661" width="5" height="10" fill="#00ff00" />
<rect x="345" y="661" width="5" height="10" fill="#00ff00" />
<rect x="351" y="661" width="5" height="10" fill="#00ff00" />
<rect x="357" y="661" width="5" height="10" fill="#00ff00" />
<rect x="363" y="661" width="5" height="10" fill="#00ff00" />
<rect x="369" y="661" width="5" height="10" fill="#00ff00" />
<rect x="375" y="661" width="5" height="10" fill="#00ff00" />
<rect x="381" y="661" width="5" height="10" fill="#00ff00" />
<rect x="363" y="681" width="5" height="2" fill="#00ff00" />
<rect x="369" y="680" width="5" height="3" fill="#00ff00" />
<rect x="375" y="678" width="5" height="5" fill="#00ff00" />
<rect x="381" y="676" width="5" height="7" fill="#00ff00" />
<rect x="339" y="685" width="5" height="10" fill="#00ff00" />
<rect x="345" y="685" width="5" height="10" fill="#00ff00" />
<rect x="351" y="685" width="5" height="10" fill="#00ff00" />
<rect x="357" y="685" width="5" height="10" fill="#00ff00" />
<rect x="363" y="685" width="5" height="10" fill="#00ff00" />
<rect x="369" y="685" width="5" height="10" fill="#00ff00" />
<rect x="375" y="685" width="5" height="10" fill="#00ff00" />
<rect x="381" y="685" width="5" height="10" fill="#00ff00" />
<rect x="363" y="705" width="5" height="2" fill="#00ff00" />
<rect x="369" y="704" width="5" height="3" fill="#00ff00" />
<rect x="375" y="702" width="5" height="5" fill="#00ff00" />
<rect x="381" y="700" width="5" height="7" fill="#00ff00" />
<rect x="339" y="708" width="5" height="10" fill="#00ff00" />
<rect x="345" y="708" width="5" height="10" fill="#00ff00" />
<rect x="351" y="708" width="5" height="10" fill="#00ff00" />
<rect x="357" y="708" width="5" height="10" fill="#00ff00" />
<rect x="363" y="708" width="5" height="10" fill="#00ff00" />
<rect x="369" y="708" width="5" height="10" fill="#00ff00" />
<rect x="375" y="708" width="5" height="10" fill="#00ff00" />
<rect x="381" y="708" width="5" height="10" fill="#00ff00" />
<rect x="369" y="728" width="5" height="2" fill="#00ff00" />
<rect x="375" y="726" width="5" height="4" fill="#00ff00" />
<rect x="381" y="723" width="5" height="7" fill="#00ff00" />
<rect x="339" y="732" width="5" height="10" fill="#00ff00" />
<rect x="345" y="732" width="5" height="10" fill="#00ff00" />
<rect x="351" y="732" width="5" height="10" fill="#00ff00" />
<rect x="357" y="732" width="5" height="10" fill="#00ff00" />
<rect x="363" y="732" width="5" height="10" fill="#00ff00" />
<rect x="369" y="732" width="5" height="10" fill="#00ff00" />
<rect x="375" y="732" width="5" height="10" fill="#00ff00" />
<rect x="381" y="732" width="5" height="10" fill="#00ff00" />
<rect x="369" y="752" width="5" height="2" fill="#00ff00" />
<rect x="375" y="750" width="5" height="4" fill="#00ff00" />
<rect x="381" y="747" width="5" height="7" fill="#00ff00" />
<rect x="339" y="756" width="5" height="10" fill="#00ff00" />
<rect x="345" y="756" width="5" height="10" fill="#00ff00" />
<rect x="351" y="756" width="5" height="10" fill="#00ff00" />
<rect x="357" y="756" width="5" height="10" fill="#00ff00" />
<rect x="363" y="756" width="5" height="10" fill="#00ff00" />
<rect x="369" y="756" width="5" height="10" fill="#00ff00" />
<rect x="375" y="756" width="5" height="10" fill="#00ff00" />
<rect x="381" y="756" width="5" height="10" fill="#00ff00" />
<rect x="369" y="776" width="5" height="2" fill="#00ff00" />
<rect x="375" y="774" width="5" height="4" fill="#00ff00" />
<rect x="381" y="771" width="5" height="7" fill="#00ff00" />
<rect x="339" y="779" width="5" height="10" fill="#00ff00" />
<rect x="345" y="779" width="5" height="10" fill="#00ff00" />
<rect x="351" y="779" width="5" height="10" fill="#00ff00" />
<rect x="357" y="779" width="5" height="10" fill="#00ff00" />
<rect x="363" y="779" width="5" height="10" fill="#00ff00" />
<rect x="369" y="779" width="5" height="10" fill="#00ff00" />
<rect x="375" y="779" width="5" height="10" fill="#00ff00" />
<rect x="381" y="779" width="5" height="10" fill="#00ff00" />
<rect x="46" y="651" width="231" height="156" fill="#000000" />
<rect x="45" y="651" width="232" height="2" fill="#e0e0e0" />
<rect x="45" y="651" width="2" height="156" fill="#b0b0b0" />
<g stroke="#2e6a2e" stroke-width="1" stroke-dasharray="3,3">
<line x1="59" y1="655" x2="59" y2="770"/>
<line x1="90" y1="655" x2="90" y2="770"/>
<line x1="120" y1="655" x2="120" y2="770"/>
<line x1="150" y1="655" x2="150" y2="770"/>
<line x1="180" y1="655" x2="180" y2="770"/>
<line x1="210" y1="655" x2="210" y2="770"/>
<line x1="240" y1="655" x2="240" y2="770"/>
<line x1="59" y1="670" x2="275" y2="670"/>
<line x1="59" y1="690" x2="275" y2="690"/>
<line x1="59" y1="710" x2="275" y2="710"/>
<line x1="59" y1="730" x2="275" y2="730"/>
<line x1="59" y1="750" x2="275" y2="750"/>
<line x1="150" y1="800" x2="220" y2="730"/>
<line x1="165" y1="798" x2="228" y2="736"/>
<line x1="180" y1="796" x2="236" y2="742"/>
<line x1="195" y1="794" x2="244" y2="748"/>
<line x1="210" y1="792" x2="252" y2="754"/>
<line x1="225" y1="790" x2="260" y2="760"/>
<line x1="240" y1="788" x2="268" y2="766"/>
<line x1="255" y1="786" x2="276" y2="772"/>
</g>
<line x1="59.5" y1="653" x2="59.5" y2="770" stroke="#3a8a3a" stroke-width="1" />
<line x1="275.5" y1="653" x2="275.5" y2="787" stroke="#3a8a3a" stroke-width="1" />
<polyline points="59,768 135,801 275,787" fill="none" stroke="#4a9a4a" stroke-width="1" />
<polygon points="63.4,708 72.76,701.25 72.19,711.38 62.06,718" fill="#262626" stroke="#262626" stroke-width="0.6" />
<polygon points="62.06,718 72.19,711.38 71.62,721.52 60.71,728.01" fill="#262626" stroke="#262626" stroke-width="0.6" />
<polygon points="60.71,728.01 71.62,721.52 71.05,731.65 59.37,738.01" fill="#262626" stroke="#262626" stroke-width="0.6" />
<polygon points="59.37,738.01 71.05,731.65 73.56,741.56 61.34,747.77" fill="#262626" stroke="#262626" stroke-width="0.6" />
<polygon points="61.34,747.77 73.56,741.56 76.83,751.41 64.14,757.47" fill="#262626" stroke="#262626" stroke-width="0.6" />
<polygon points="64.14,757.47 76.83,751.41 80.11,761.26 66.94,767.17" fill="#262626" stroke="#262626" stroke-width="0.6" />
<polygon points="66.94,767.17 80.11,761.26 87.31,768.13 73.97,773.65" fill="#262626" stroke="#262626" stroke-width="0.6" />
<polygon points="73.97,773.65 87.31,768.13 95.97,773.89 82.56,778.94" fill="#262626" stroke="#262626" stroke-width="0.6" />
<polygon points="82.56,778.94 95.97,773.89 104.63,779.64 91.16,784.23" fill="#262626" stroke="#262626" stroke-width="0.6" />
<polygon points="91.16,784.23 104.63,779.64 113.31,785.36 99.76,789.51" fill="#262626" stroke="#262626" stroke-width="0.6" />
<polygon points="99.76,789.51 113.31,785.36 121.99,791.08 108.36,794.8" fill="#262626" stroke="#262626" stroke-width="0.6" />
<polygon points="108.36,794.8 121.99,791.08 130.67,796.79 116.96,800.09" fill="#262626" stroke="#262626" stroke-width="0.6" />
<polygon points="116.96,800.09 130.67,796.79 139.68,800.37 125.91,803.07" fill="#262626" stroke="#262626" stroke-width="0.6" />
<polygon points="125.91,803.07 139.68,800.37 149.47,798.89 135.7,800.6" fill="#262626" stroke="#262626" stroke-width="0.6" />
<polygon points="72.76,701.25 82.7,695.36 82.86,705.57 72.19,711.38" fill="#262626" stroke="#262626" stroke-width="0.6" />
<polygon points="72.19,711.38 82.86,705.57 83.02,715.77 71.62,721.52" fill="#262626" stroke="#262626" stroke-width="0.6" />
<polygon points="71.62,721.52 83.02,715.77 83.18,725.98 71.05,731.65" fill="#262626" stroke="#262626" stroke-width="0.6" />
<polygon points="71.05,731.65 83.18,725.98 86.18,735.97 73.56,741.56" fill="#262626" stroke="#262626" stroke-width="0.6" />
<polygon points="73.56,741.56 86.18,735.97 89.89,745.91 76.83,751.41" fill="#262626" stroke="#262626" stroke-width="0.6" />
<polygon points="76.83,751.41 89.89,745.91 93.6,755.86 80.11,761.26" fill="#262626" stroke="#262626" stroke-width="0.6" />
<polygon points="80.11,761.26 93.6,755.86 100.94,763.04 87.31,768.13" fill="#262626" stroke="#262626" stroke-width="0.6" />
<polygon points="87.31,768.13 100.94,763.04 109.62,769.2 95.97,773.89" fill="#262626" stroke="#262626" stroke-width="0.6" />
<polygon points="95.97,773.89 109.62,769.2 118.3,775.36 104.63,779.64" fill="#262626" stroke="#262626" stroke-width="0.6" />
<polygon points="104.63,779.64 118.3,775.36 127.02,781.46 113.31,785.36" fill="#262626" stroke="#262626" stroke-width="0.6" />
<polygon points="113.31,785.36 127.02,781.46 135.75,787.54 121.99,791.08" fill="#262626" stroke="#262626" stroke-width="0.6" />
<polygon points="121.99,791.08 135.75,787.54 144.47,793.63 130.67,796.79" fill="#262626" stroke="#262626" stroke-width="0.6" />
<polygon points="130.67,796.79 144.47,793.63 153.49,797.73 139.68,800.37" fill="#262626" stroke="#262626" stroke-width="0.6" />
<polygon points="139.68,800.37 153.49,797.73 163.24,797.17 149.47,798.89" fill="#262626" stroke="#262626" stroke-width="0.6" />
<polygon points="82.7,695.36 92.63,689.48 93.52,699.75 82.86,705.57" fill="#262626" stroke="#262626" stroke-width="0.6" />
<polygon points="82.86,705.57 93.52,699.75 94.42,710.03 83.02,715.77" fill="#262626" stroke="#262626" stroke-width="0.6" />
<polygon points="83.02,715.77 94.42,710.03 95.31,720.3 83.18,725.98" fill="#262626" stroke="#262626" stroke-width="0.6" />
<polygon points="83.18,725.98 95.31,720.3 98.81,730.38 86.18,735.97" fill="#262626" stroke="#262626" stroke-width="0.6" />
<polygon points="86.18,735.97 98.81,730.38 102.95,740.42 89.89,745.91" fill="#262626" stroke="#262626" stroke-width="0.6" />
<polygon points="89.89,745.91 102.95,740.42 107.1,750.45 93.6,755.86" fill="#262626" stroke="#262626" stroke-width="0.6" />
<polygon points="93.6,755.86 107.1,750.45 114.57,757.96 100.94,763.04" fill="#262626" stroke="#262626" stroke-width="0.6" />
<polygon points="100.94,763.04 114.57,757.96 123.27,764.52 109.62,769.2" fill="#262626" stroke="#262626" stroke-width="0.6" />
<polygon points="109.62,769.2 123.27,764.52 131.98,771.09 118.3,775.36" fill="#262626" stroke="#262626" stroke-width="0.6" />
<polygon points="118.3,775.36 131.98,771.09 140.74,777.55 127.02,781.46" fill="#262626" stroke="#262626" stroke-width="0.6" />
<polygon points="127.02,781.46 140.74,777.55 149.5,784.01 135.75,787.54" fill="#262626" stroke="#262626" stroke-width="0.6" />
<polygon points="135.75,787.54 149.5,784.01 158.26,790.46 144.47,793.63" fill="#262626" stroke="#262626" stroke-width="0.6" />
<polygon points="144.47,793.63 158.26,790.46 167.31,795.1 153.49,797.73" fill="#262626" stroke="#262626" stroke-width="0.6" />
<polygon points="153.49,797.73 167.31,795.1 177,795.46 163.24,797.17" fill="#262626" stroke="#262626" stroke-width="0.6" />
<polygon points="92.63,689.48 102.51,683.5 103.84,693.29 93.52,699.75" fill="#262626" stroke="#262626" stroke-width="0.6" />
<polygon points="93.52,699.75 103.84,693.29 105.16,703.07 94.42,710.03" fill="#262626" stroke="#262626" stroke-width="0.6" />
<polygon points="94.42,710.03 105.16,703.07 106.49,712.85 95.31,720.3" fill="#262626" stroke="#262626" stroke-width="0.6" />
<polygon points="95.31,720.3 106.49,712.85 110.18,722.46 98.81,730.38" fill="#262626" stroke="#262626" stroke-width="0.6" />
<polygon points="98.81,730.38 110.18,722.46 114.47,732.02 102.95,740.42" fill="#262626" stroke="#262626" stroke-width="0.6" />
<polygon points="102.95,740.42 114.47,732.02 118.75,741.59 107.1,750.45" fill="#262626" stroke="#262626" stroke-width="0.6" />
<polygon points="107.1,750.45 118.75,741.59 126.05,748.85 114.57,757.96" fill="#262626" stroke="#262626" stroke-width="0.6" />
<polygon points="114.57,757.96 126.05,748.85 134.48,755.27 123.27,764.52" fill="#262626" stroke="#262626" stroke-width="0.6" />
<polygon points="123.27,764.52 134.48,755.27 142.91,761.68 131.98,771.09" fill="#262626" stroke="#262626" stroke-width="0.6" />
<polygon points="131.98,771.09 142.91,761.68 151.41,767.95 140.74,777.55" fill="#262626" stroke="#262626" stroke-width="0.6" />
<polygon points="140.74,777.55 151.41,767.95 159.92,774.21 149.5,784.01" fill="#262626" stroke="#262626" stroke-width="0.6" />
<polygon points="149.5,784.01 159.92,774.21 168.42,780.47 158.26,790.46" fill="#262626" stroke="#262626" stroke-width="0.6" />
<polygon points="158.26,790.46 168.42,780.47 177.18,785.09 167.31,795.1" fill="#262626" stroke="#262626" stroke-width="0.6" />
<polygon points="167.31,795.1 177.18,785.09 186.54,785.81 177,795.46" fill="#262626" stroke="#262626" stroke-width="0.6" />
<polygon points="102.51,683.5 112.37,677.5 114.1,686.73 103.84,693.29" fill="#2e2e2e" stroke="#2e2e2e" stroke-width="0.6" />
<polygon points="103.84,693.29 114.1,686.73 115.83,695.97 105.16,703.07" fill="#2e2e2e" stroke="#2e2e2e" stroke-width="0.6" />
<polygon points="105.16,703.07 115.83,695.97 117.56,705.2 106.49,712.85" fill="#2e2e2e" stroke="#2e2e2e" stroke-width="0.6" />
<polygon points="106.49,712.85 117.56,705.2 121.42,714.28 110.18,722.46" fill="#2e2e2e" stroke="#2e2e2e" stroke-width="0.6" />
<polygon points="110.18,722.46 121.42,714.28 125.81,723.31 114.47,732.02" fill="#2e2e2e" stroke="#2e2e2e" stroke-width="0.6" />
<polygon points="114.47,732.02 125.81,723.31 130.2,732.35 118.75,741.59" fill="#2e2e2e" stroke="#2e2e2e" stroke-width="0.6" />
<polygon points="118.75,741.59 130.2,732.35 137.31,739.32 126.05,748.85" fill="#2e2e2e" stroke="#2e2e2e" stroke-width="0.6" />
<polygon points="126.05,748.85 137.31,739.32 145.43,745.53 134.48,755.27" fill="#2e2e2e" stroke="#2e2e2e" stroke-width="0.6" />
<polygon points="134.48,755.27 145.43,745.53 153.55,751.72 142.91,761.68" fill="#2e2e2e" stroke="#2e2e2e" stroke-width="0.6" />
<polygon points="142.91,761.68 153.55,751.72 161.76,757.75 151.41,767.95" fill="#2e2e2e" stroke="#2e2e2e" stroke-width="0.6" />
<polygon points="151.41,767.95 161.76,757.75 169.98,763.76 159.92,774.21" fill="#2e2e2e" stroke="#2e2e2e" stroke-width="0.6" />
<polygon points="159.92,774.21 169.98,763.76 178.2,769.78 168.42,780.47" fill="#2e2e2e" stroke="#2e2e2e" stroke-width="0.6" />
<polygon points="168.42,780.47 178.2,769.78 186.65,774.31 177.18,785.09" fill="#2e2e2e" stroke="#2e2e2e" stroke-width="0.6" />
<polygon points="177.18,785.09 186.65,774.31 195.64,775.33 186.54,785.81" fill="#2e2e2e" stroke="#2e2e2e" stroke-width="0.6" />
<polygon points="112.37,677.5 122.71,672.37 124.8,681 114.1,686.73" fill="#2e2e2e" stroke="#2e2e2e" stroke-width="0.6" />
<polygon points="114.1,686.73 124.8,681 126.9,689.62 115.83,695.97" fill="#2e2e2e" stroke="#2e2e2e" stroke-width="0.6" />
<polygon points="115.83,695.97 126.9,689.62 129,698.24 117.56,705.2" fill="#2e2e2e" stroke="#2e2e2e" stroke-width="0.6" />
<polygon points="117.56,705.2 129,698.24 132.99,706.73 121.42,714.28" fill="#555555" stroke="#555555" stroke-width="0.6" />
<polygon points="121.42,714.28 132.99,706.73 137.46,715.17 125.81,723.31" fill="#555555" stroke="#555555" stroke-width="0.6" />
<polygon points="125.81,723.31 137.46,715.17 141.92,723.62 130.2,732.35" fill="#555555" stroke="#555555" stroke-width="0.6" />
<polygon points="130.2,732.35 141.92,723.62 148.8,730.23 137.31,739.32" fill="#555555" stroke="#555555" stroke-width="0.6" />
<polygon points="137.31,739.32 148.8,730.23 156.58,736.16 145.43,745.53" fill="#555555" stroke="#555555" stroke-width="0.6" />
<polygon points="145.43,745.53 156.58,736.16 164.36,742.09 153.55,751.72" fill="#555555" stroke="#555555" stroke-width="0.6" />
<polygon points="153.55,751.72 164.36,742.09 172.25,747.81 161.76,757.75" fill="#555555" stroke="#555555" stroke-width="0.6" />
<polygon points="161.76,757.75 172.25,747.81 180.15,753.51 169.98,763.76" fill="#555555" stroke="#555555" stroke-width="0.6" />
<polygon points="169.98,763.76 180.15,753.51 188.05,759.21 178.2,769.78" fill="#555555" stroke="#555555" stroke-width="0.6" />
<polygon points="178.2,769.78 188.05,759.21 196.15,763.59 186.65,774.31" fill="#555555" stroke="#555555" stroke-width="0.6" />
<polygon points="186.65,774.31 196.15,763.59 204.73,764.86 195.64,775.33" fill="#555555" stroke="#555555" stroke-width="0.6" />
<polygon points="122.71,672.37 133.17,667.49 135.49,675.39 124.8,681" fill="#2e2e2e" stroke="#2e2e2e" stroke-width="0.6" />
<polygon points="124.8,681 135.49,675.39 137.81,683.28 126.9,689.62" fill="#2e2e2e" stroke="#2e2e2e" stroke-width="0.6" />
<polygon points="126.9,689.62 137.81,683.28 140.12,691.18 129,698.24" fill="#2e2e2e" stroke="#2e2e2e" stroke-width="0.6" />
<polygon points="129,698.24 140.12,691.18 144.1,698.95 132.99,706.73" fill="#555555" stroke="#555555" stroke-width="0.6" />
<polygon points="132.99,706.73 144.1,698.95 148.49,706.7 137.46,715.17" fill="#555555" stroke="#555555" stroke-width="0.6" />
<polygon points="137.46,715.17 148.49,706.7 152.88,714.44 141.92,723.62" fill="#555555" stroke="#555555" stroke-width="0.6" />
<polygon points="141.92,723.62 152.88,714.44 159.38,720.58 148.8,730.23" fill="#555555" stroke="#555555" stroke-width="0.6" />
<polygon points="148.8,730.23 159.38,720.58 166.67,726.11 156.58,736.16" fill="#555555" stroke="#555555" stroke-width="0.6" />
<polygon points="156.58,736.16 166.67,726.11 173.96,731.65 164.36,742.09" fill="#555555" stroke="#555555" stroke-width="0.6" />
<polygon points="164.36,742.09 173.96,731.65 181.38,736.94 172.25,747.81" fill="#555555" stroke="#555555" stroke-width="0.6" />
<polygon points="172.25,747.81 181.38,736.94 188.81,742.21 180.15,753.51" fill="#555555" stroke="#555555" stroke-width="0.6" />
<polygon points="180.15,753.51 188.81,742.21 196.24,747.49 188.05,759.21" fill="#555555" stroke="#555555" stroke-width="0.6" />
<polygon points="188.05,759.21 196.24,747.49 203.84,751.6 196.15,763.59" fill="#555555" stroke="#555555" stroke-width="0.6" />
<polygon points="196.15,763.59 203.84,751.6 211.87,753 204.73,764.86" fill="#555555" stroke="#555555" stroke-width="0.6" />
<polygon points="133.17,667.49 143.66,662.7 146.18,669.85 135.49,675.39" fill="#2e2e2e" stroke="#2e2e2e" stroke-width="0.6" />
<polygon points="135.49,675.39 146.18,669.85 148.69,677 137.81,683.28" fill="#2e2e2e" stroke="#2e2e2e" stroke-width="0.6" />
<polygon points="137.81,683.28 148.69,677 151.2,684.14 140.12,691.18" fill="#2e2e2e" stroke="#2e2e2e" stroke-width="0.6" />
<polygon points="140.12,691.18 151.2,684.14 155.14,691.18 144.1,698.95" fill="#555555" stroke="#555555" stroke-width="0.6" />
<polygon points="144.1,698.95 155.14,691.18 159.43,698.2 148.49,706.7" fill="#555555" stroke="#555555" stroke-width="0.6" />
<polygon points="148.49,706.7 159.43,698.2 163.72,705.21 152.88,714.44" fill="#555555" stroke="#555555" stroke-width="0.6" />
<polygon points="152.88,714.44 163.72,705.21 169.81,710.85 159.38,720.58" fill="#555555" stroke="#555555" stroke-width="0.6" />
<polygon points="159.38,720.58 169.81,710.85 176.59,715.98 166.67,726.11" fill="#555555" stroke="#555555" stroke-width="0.6" />
<polygon points="166.67,726.11 176.59,715.98 183.37,721.1 173.96,731.65" fill="#555555" stroke="#555555" stroke-width="0.6" />
<polygon points="173.96,731.65 183.37,721.1 190.29,725.94 181.38,736.94" fill="#555555" stroke="#555555" stroke-width="0.6" />
<polygon points="181.38,736.94 190.29,725.94 197.22,730.76 188.81,742.21" fill="#555555" stroke="#555555" stroke-width="0.6" />
<polygon points="188.81,742.21 197.22,730.76 204.16,735.59 196.24,747.49" fill="#555555" stroke="#555555" stroke-width="0.6" />
<polygon points="196.24,747.49 204.16,735.59 211.24,739.42 203.84,751.6" fill="#555555" stroke="#555555" stroke-width="0.6" />
<polygon points="203.84,751.6 211.24,739.42 218.69,740.92 211.87,753" fill="#555555" stroke="#555555" stroke-width="0.6" />
<polygon points="143.66,662.7 155,660.73 157.65,666.92 146.18,669.85" fill="#2e2e2e" stroke="#2e2e2e" stroke-width="0.6" />
<polygon points="146.18,669.85 157.65,666.92 160.29,673.12 148.69,677" fill="#2e2e2e" stroke="#2e2e2e" stroke-width="0.6" />
<polygon points="148.69,677 160.29,673.12 162.94,679.32 151.2,684.14" fill="#2e2e2e" stroke="#2e2e2e" stroke-width="0.6" />
<polygon points="151.2,684.14 162.94,679.32 166.78,685.42 155.14,691.18" fill="#555555" stroke="#555555" stroke-width="0.6" />
<polygon points="155.14,691.18 166.78,685.42 170.9,691.51 159.43,698.2" fill="#555555" stroke="#555555" stroke-width="0.6" />
<polygon points="159.43,698.2 170.9,691.51 175.03,697.6 163.72,705.21" fill="#555555" stroke="#555555" stroke-width="0.6" />
<polygon points="163.72,705.21 175.03,697.6 180.67,702.53 169.81,710.85" fill="#555555" stroke="#555555" stroke-width="0.6" />
<polygon points="169.81,710.85 180.67,702.53 186.87,707.04 176.59,715.98" fill="#555555" stroke="#555555" stroke-width="0.6" />
<polygon points="176.59,715.98 186.87,707.04 193.07,711.55 183.37,721.1" fill="#555555" stroke="#555555" stroke-width="0.6" />
<polygon points="183.37,721.1 193.07,711.55 199.43,715.75 190.29,725.94" fill="#555555" stroke="#555555" stroke-width="0.6" />
<polygon points="190.29,725.94 199.43,715.75 205.81,719.92 197.22,730.76" fill="#555555" stroke="#555555" stroke-width="0.6" />
<polygon points="197.22,730.76 205.81,719.92 212.19,724.09 204.16,735.59" fill="#555555" stroke="#555555" stroke-width="0.6" />
<polygon points="204.16,735.59 212.19,724.09 218.7,727.43 211.24,739.42" fill="#555555" stroke="#555555" stroke-width="0.6" />
<polygon points="211.24,739.42 218.7,727.43 225.5,728.83 218.69,740.92" fill="#555555" stroke="#555555" stroke-width="0.6" />
<polygon points="155,660.73 166.42,659.05 169.2,664.28 157.65,666.92" fill="#2e2e2e" stroke="#2e2e2e" stroke-width="0.6" />
<polygon points="157.65,666.92 169.2,664.28 171.98,669.5 160.29,673.12" fill="#2e2e2e" stroke="#2e2e2e" stroke-width="0.6" />
<polygon points="160.29,673.12 171.98,669.5 174.75,674.72 162.94,679.32" fill="#2e2e2e" stroke="#2e2e2e" stroke-width="0.6" />
<polygon points="162.94,679.32 174.75,674.72 178.48,679.88 166.78,685.42" fill="#555555" stroke="#555555" stroke-width="0.6" />
<polygon points="166.78,685.42 178.48,679.88 182.44,685.01 170.9,691.51" fill="#555555" stroke="#555555" stroke-width="0.6" />
<polygon points="170.9,691.51 182.44,685.01 186.4,690.15 175.03,697.6" fill="#555555" stroke="#555555" stroke-width="0.6" />
<polygon points="175.03,697.6 186.4,690.15 191.57,694.36 180.67,702.53" fill="#555555" stroke="#555555" stroke-width="0.6" />
<polygon points="180.67,702.53 191.57,694.36 197.19,698.24 186.87,707.04" fill="#555555" stroke="#555555" stroke-width="0.6" />
<polygon points="186.87,707.04 197.19,698.24 202.81,702.11 193.07,711.55" fill="#555555" stroke="#555555" stroke-width="0.6" />
<polygon points="193.07,711.55 202.81,702.11 208.61,705.64 199.43,715.75" fill="#555555" stroke="#555555" stroke-width="0.6" />
<polygon points="199.43,715.75 208.61,705.64 214.43,709.14 205.81,719.92" fill="#555555" stroke="#555555" stroke-width="0.6" />
<polygon points="205.81,719.92 214.43,709.14 220.25,712.63 212.19,724.09" fill="#555555" stroke="#555555" stroke-width="0.6" />
<polygon points="212.19,724.09 220.25,712.63 226.16,715.47 218.7,727.43" fill="#555555" stroke="#555555" stroke-width="0.6" />
<polygon points="218.7,727.43 226.16,715.47 232.32,716.75 225.5,728.83" fill="#555555" stroke="#555555" stroke-width="0.6" />
<polygon points="166.42,659.05 177.85,657.37 180.75,661.63 169.2,664.28" fill="#2e2e2e" stroke="#2e2e2e" stroke-width="0.6" />
<polygon points="169.2,664.28 180.75,661.63 183.66,665.88 171.98,669.5" fill="#2e2e2e" stroke="#2e2e2e" stroke-width="0.6" />
<polygon points="171.98,669.5 183.66,665.88 186.56,670.13 174.75,674.72" fill="#2e2e2e" stroke="#2e2e2e" stroke-width="0.6" />
<polygon points="174.75,674.72 186.56,670.13 190.18,674.33 178.48,679.88" fill="#555555" stroke="#555555" stroke-width="0.6" />
<polygon points="178.48,679.88 190.18,674.33 193.98,678.51 182.44,685.01" fill="#555555" stroke="#555555" stroke-width="0.6" />
<polygon points="182.44,685.01 193.98,678.51 197.77,682.7 186.4,690.15" fill="#555555" stroke="#555555" stroke-width="0.6" />
<polygon points="186.4,690.15 197.77,682.7 202.47,686.2 191.57,694.36" fill="#555555" stroke="#555555" stroke-width="0.6" />
<polygon points="191.57,694.36 202.47,686.2 207.5,689.44 197.19,698.24" fill="#555555" stroke="#555555" stroke-width="0.6" />
<polygon points="197.19,698.24 207.5,689.44 212.54,692.67 202.81,702.11" fill="#555555" stroke="#555555" stroke-width="0.6" />
<polygon points="202.81,702.11 212.54,692.67 217.78,695.53 208.61,705.64" fill="#555555" stroke="#555555" stroke-width="0.6" />
<polygon points="208.61,705.64 217.78,695.53 223.04,698.35 214.43,709.14" fill="#555555" stroke="#555555" stroke-width="0.6" />
<polygon points="214.43,709.14 223.04,698.35 228.3,701.18 220.25,712.63" fill="#555555" stroke="#555555" stroke-width="0.6" />
<polygon points="220.25,712.63 228.3,701.18 233.63,703.5 226.16,715.47" fill="#555555" stroke="#555555" stroke-width="0.6" />
<polygon points="226.16,715.47 233.63,703.5 239.14,704.67 232.32,716.75" fill="#555555" stroke="#555555" stroke-width="0.6" />
<polygon points="177.85,657.37 189.32,656.11 192.62,659.69 180.75,661.63" fill="#2e2e2e" stroke="#2e2e2e" stroke-width="0.6" />
<polygon points="180.75,661.63 192.62,659.69 195.92,663.27 183.66,665.88" fill="#2e2e2e" stroke="#2e2e2e" stroke-width="0.6" />
<polygon points="183.66,665.88 195.92,663.27 199.22,666.85 186.56,670.13" fill="#2e2e2e" stroke="#2e2e2e" stroke-width="0.6" />
<polygon points="186.56,670.13 199.22,666.85 202.99,670.39 190.18,674.33" fill="#2e2e2e" stroke="#2e2e2e" stroke-width="0.6" />
<polygon points="190.18,674.33 202.99,670.39 206.88,673.93 193.98,678.51" fill="#2e2e2e" stroke="#2e2e2e" stroke-width="0.6" />
<polygon points="193.98,678.51 206.88,673.93 210.77,677.47 197.77,682.7" fill="#2e2e2e" stroke="#2e2e2e" stroke-width="0.6" />
<polygon points="197.77,682.7 210.77,677.47 215.26,680.55 202.47,686.2" fill="#2e2e2e" stroke="#2e2e2e" stroke-width="0.6" />
<polygon points="202.47,686.2 215.26,680.55 219.98,683.45 207.5,689.44" fill="#2e2e2e" stroke="#2e2e2e" stroke-width="0.6" />
<polygon points="207.5,689.44 219.98,683.45 224.7,686.35 212.54,692.67" fill="#2e2e2e" stroke="#2e2e2e" stroke-width="0.6" />
<polygon points="212.54,692.67 224.7,686.35 229.64,688.84 217.78,695.53" fill="#2e2e2e" stroke="#2e2e2e" stroke-width="0.6" />
<polygon points="217.78,695.53 229.64,688.84 234.6,691.3 223.04,698.35" fill="#555555" stroke="#555555" stroke-width="0.6" />
<polygon points="223.04,698.35 234.6,691.3 239.56,693.75 228.3,701.18" fill="#555555" stroke="#555555" stroke-width="0.6" />
<polygon points="228.3,701.18 239.56,693.75 244.57,695.87 233.63,703.5" fill="#555555" stroke="#555555" stroke-width="0.6" />
<polygon points="233.63,703.5 244.57,695.87 249.7,697.21 239.14,704.67" fill="#555555" stroke="#555555" stroke-width="0.6" />
<polygon points="189.32,656.11 200.81,654.95 204.69,658.09 192.62,659.69" fill="#2e2e2e" stroke="#2e2e2e" stroke-width="0.6" />
<polygon points="192.62,659.69 204.69,658.09 208.57,661.23 195.92,663.27" fill="#2e2e2e" stroke="#2e2e2e" stroke-width="0.6" />
<polygon points="195.92,663.27 208.57,661.23 212.46,664.38 199.22,666.85" fill="#2e2e2e" stroke="#2e2e2e" stroke-width="0.6" />
<polygon points="199.22,666.85 212.46,664.38 216.57,667.5 202.99,670.39" fill="#2e2e2e" stroke="#2e2e2e" stroke-width="0.6" />
<polygon points="202.99,670.39 216.57,667.5 220.75,670.62 206.88,673.93" fill="#2e2e2e" stroke="#2e2e2e" stroke-width="0.6" />
<polygon points="206.88,673.93 220.75,670.62 224.93,673.74 210.77,677.47" fill="#2e2e2e" stroke="#2e2e2e" stroke-width="0.6" />
<polygon points="210.77,677.47 224.93,673.74 229.41,676.63 215.26,680.55" fill="#2e2e2e" stroke="#2e2e2e" stroke-width="0.6" />
<polygon points="215.26,680.55 229.41,676.63 234,679.43 219.98,683.45" fill="#2e2e2e" stroke="#2e2e2e" stroke-width="0.6" />
<polygon points="219.98,683.45 234,679.43 238.6,682.23 224.7,686.35" fill="#2e2e2e" stroke="#2e2e2e" stroke-width="0.6" />
<polygon points="224.7,686.35 238.6,682.23 243.43,684.58 229.64,688.84" fill="#2e2e2e" stroke="#2e2e2e" stroke-width="0.6" />
<polygon points="229.64,688.84 243.43,684.58 248.28,686.89 234.6,691.3" fill="#555555" stroke="#555555" stroke-width="0.6" />
<polygon points="234.6,691.3 248.28,686.89 253.13,689.2 239.56,693.75" fill="#555555" stroke="#555555" stroke-width="0.6" />
<polygon points="239.56,693.75 253.13,689.2 258.01,691.35 244.57,695.87" fill="#555555" stroke="#555555" stroke-width="0.6" />
<polygon points="244.57,695.87 258.01,691.35 262.95,693.11 249.7,697.21" fill="#555555" stroke="#555555" stroke-width="0.6" />
<polygon points="200.81,654.95 212.3,653.8 216.77,656.5 204.69,658.09" fill="#2e2e2e" stroke="#2e2e2e" stroke-width="0.6" />
<polygon points="204.69,658.09 216.77,656.5 221.23,659.2 208.57,661.23" fill="#2e2e2e" stroke="#2e2e2e" stroke-width="0.6" />
<polygon points="208.57,661.23 221.23,659.2 225.7,661.9 212.46,664.38" fill="#2e2e2e" stroke="#2e2e2e" stroke-width="0.6" />
<polygon points="212.46,664.38 225.7,661.9 230.16,664.61 216.57,667.5" fill="#2e2e2e" stroke="#2e2e2e" stroke-width="0.6" />
<polygon points="216.57,667.5 230.16,664.61 234.63,667.31 220.75,670.62" fill="#2e2e2e" stroke="#2e2e2e" stroke-width="0.6" />
<polygon points="220.75,670.62 234.63,667.31 239.09,670.01 224.93,673.74" fill="#2e2e2e" stroke="#2e2e2e" stroke-width="0.6" />
<polygon points="224.93,673.74 239.09,670.01 243.56,672.71 229.41,676.63" fill="#2e2e2e" stroke="#2e2e2e" stroke-width="0.6" />
<polygon points="229.41,676.63 243.56,672.71 248.02,675.41 234,679.43" fill="#2e2e2e" stroke="#2e2e2e" stroke-width="0.6" />
<polygon points="234,679.43 248.02,675.41 252.49,678.1 238.6,682.23" fill="#2e2e2e" stroke="#2e2e2e" stroke-width="0.6" />
<polygon points="238.6,682.23 252.49,678.1 257.22,680.32 243.43,684.58" fill="#2e2e2e" stroke="#2e2e2e" stroke-width="0.6" />
<polygon points="243.43,684.58 257.22,680.32 261.96,682.49 248.28,686.89" fill="#555555" stroke="#555555" stroke-width="0.6" />
<polygon points="248.28,686.89 261.96,682.49 266.71,684.66 253.13,689.2" fill="#555555" stroke="#555555" stroke-width="0.6" />
<polygon points="253.13,689.2 266.71,684.66 271.45,686.83 258.01,691.35" fill="#555555" stroke="#555555" stroke-width="0.6" />
<polygon points="258.01,691.35 271.45,686.83 276.2,689 262.95,693.11" fill="#555555" stroke="#555555" stroke-width="0.6" />
<polyline points="63.4,708 62.46,715 61.52,722.01 60.58,729.01 59.64,736.01 59.94,742.92 61.9,749.71 63.86,756.5 65.82,763.29 67.95,769.95 73.97,773.65 79.98,777.35 86,781.05 92.02,784.75 98.04,788.46 104.06,792.16 110.08,795.86 116.1,799.56 122.12,803.26 128.85,802.33 135.7,800.6" fill="none" stroke="#00ff00" stroke-width="1.0" shape-rendering="geometricPrecision"/>
<polyline points="82.7,695.36 82.81,702.51 82.92,709.65 83.03,716.79 83.14,723.94 84.33,731 86.92,737.96 89.52,744.92 92.12,751.88 94.86,758.73 100.94,763.04 107.02,767.36 113.09,771.67 119.17,775.98 125.28,780.24 131.38,784.5 137.49,788.76 143.6,793.02 149.7,797.28 156.42,797.57 163.24,797.17" fill="none" stroke="#00ff00" stroke-width="1.0" shape-rendering="geometricPrecision"/>
<polyline points="102.51,683.5 103.44,690.35 104.37,697.2 105.29,704.05 106.22,710.9 108.04,717.68 111.04,724.37 114.04,731.07 117.04,737.76 120.15,744.37 126.05,748.85 131.95,753.34 137.85,757.83 143.75,762.32 149.71,766.7 155.66,771.08 161.62,775.46 167.57,779.85 173.53,784.23 179.99,785.3 186.54,785.81" fill="none" stroke="#00ff00" stroke-width="1.0" shape-rendering="geometricPrecision"/>
<polyline points="122.71,672.37 124.17,678.41 125.64,684.44 127.11,690.48 128.58,696.52 130.76,702.5 133.89,708.42 137.01,714.33 140.14,720.24 143.36,726.09 148.8,730.23 154.25,734.38 159.69,738.53 165.14,742.68 170.67,746.67 176.2,750.66 181.73,754.65 187.26,758.64 192.79,762.63 198.73,763.97 204.73,764.86" fill="none" stroke="#00ff00" stroke-width="1.0" shape-rendering="geometricPrecision"/>
<polyline points="143.66,662.7 145.42,667.71 147.18,672.71 148.94,677.71 150.7,682.71 152.99,687.68 156,692.59 159,697.5 162,702.41 165.07,707.26 169.81,710.85 174.56,714.44 179.3,718.03 184.05,721.6 188.9,724.98 193.75,728.35 198.61,731.73 203.46,735.1 208.32,738.48 213.48,739.87 218.69,740.92" fill="none" stroke="#00ff00" stroke-width="1.0" shape-rendering="geometricPrecision"/>
<polyline points="166.42,659.05 168.37,662.71 170.31,666.36 172.25,670.02 174.2,673.68 176.5,677.31 179.27,680.9 182.04,684.5 184.82,688.09 187.64,691.65 191.57,694.36 195.5,697.08 199.43,699.79 203.37,702.49 207.44,704.94 211.52,707.39 215.59,709.83 219.66,712.28 223.74,714.73 228.01,715.85 232.32,716.75" fill="none" stroke="#00ff00" stroke-width="1.0" shape-rendering="geometricPrecision"/>
<polyline points="189.32,656.11 191.63,658.61 193.94,661.12 196.25,663.63 198.56,666.13 201.04,668.63 203.77,671.1 206.49,673.58 209.21,676.05 211.96,678.51 215.26,680.55 218.56,682.58 221.87,684.62 225.18,686.64 228.65,688.35 232.12,690.07 235.59,691.79 239.06,693.5 242.53,695.22 246.11,696.27 249.7,697.21" fill="none" stroke="#00ff00" stroke-width="1.0" shape-rendering="geometricPrecision"/>
<polyline points="212.3,653.8 215.43,655.69 218.55,657.58 221.68,659.47 224.8,661.36 227.93,663.25 231.05,665.15 234.18,667.04 237.31,668.93 240.43,670.82 243.56,672.71 246.68,674.6 249.81,676.49 252.94,678.37 256.27,679.88 259.59,681.4 262.91,682.92 266.23,684.44 269.56,685.96 272.88,687.48 276.2,689" fill="none" stroke="#00ff00" stroke-width="1.0" shape-rendering="geometricPrecision"/>
<polyline points="63.4,708 69.92,703.22 76.74,698.89 83.69,694.78 90.65,690.66 97.58,686.51 104.48,682.3 111.39,678.1 118.52,674.32 125.85,670.91 133.17,667.49 140.5,664.07 148.14,661.74 156.14,660.56 164.14,659.39 172.14,658.21 180.13,657.04 188.17,656.22 196.22,655.41 204.26,654.61 212.3,653.8" fill="none" stroke="#00ff00" stroke-width="1.0" shape-rendering="geometricPrecision"/>
<polyline points="62.15,717.34 69.17,712.65 76.48,708.38 83.91,704.31 91.34,700.23 98.63,695.89 105.8,691.33 112.96,686.77 120.34,682.61 127.88,678.76 135.33,674.86 142.79,670.96 150.54,668.06 158.62,666.25 166.71,664.44 174.79,662.63 182.87,660.83 191.2,659.6 199.62,658.51 208.04,657.42 216.47,656.32" fill="none" stroke="#00ff00" stroke-width="1.0" shape-rendering="geometricPrecision"/>
<polyline points="60.89,726.67 68.42,722.08 76.22,717.87 84.13,713.84 92.04,709.81 99.68,705.28 107.11,700.36 114.54,695.44 122.17,690.89 129.91,686.62 137.5,682.23 145.08,677.84 152.94,674.39 161.11,671.94 169.27,669.5 177.44,667.06 185.6,664.61 194.22,662.99 203.03,661.61 211.83,660.22 220.64,658.84" fill="none" stroke="#00ff00" stroke-width="1.0" shape-rendering="geometricPrecision"/>
<polyline points="59.64,736.01 67.68,731.5 75.95,727.35 84.34,723.37 92.73,719.38 100.73,714.67 108.42,709.39 116.11,704.11 123.99,699.17 131.95,694.47 139.66,689.6 147.37,684.73 155.34,680.72 163.59,677.64 171.84,674.56 180.09,671.48 188.34,668.4 197.24,666.37 206.43,664.7 215.62,663.03 224.8,661.36" fill="none" stroke="#00ff00" stroke-width="1.0" shape-rendering="geometricPrecision"/>
<polyline points="60.6,745.19 69.03,740.77 77.69,736.69 86.44,732.76 95.2,728.83 103.44,723.93 111.28,718.3 119.13,712.67 127.14,707.36 135.2,702.24 142.93,696.89 150.66,691.54 158.63,686.98 166.85,683.27 175.07,679.56 183.3,675.86 191.52,672.15 200.6,669.73 210.06,667.78 219.51,665.83 228.97,663.88" fill="none" stroke="#00ff00" stroke-width="1.0" shape-rendering="geometricPrecision"/>
<polyline points="63.21,754.24 71.96,749.93 80.91,745.92 89.95,742.05 98.99,738.18 107.39,733.1 115.3,727.13 123.22,721.15 131.29,715.47 139.36,709.94 147.03,704.12 154.69,698.29 162.57,693.19 170.69,688.86 178.8,684.54 186.92,680.21 195.03,675.88 204.2,673.07 213.85,670.85 223.49,668.63 233.14,666.41" fill="none" stroke="#00ff00" stroke-width="1.0" shape-rendering="geometricPrecision"/>
<polyline points="65.82,763.29 74.89,759.08 84.13,755.15 93.45,751.34 102.78,747.52 111.33,742.27 119.32,735.96 127.3,729.64 135.43,723.58 143.52,717.64 151.12,711.34 158.73,705.05 166.52,699.4 174.52,694.45 182.53,689.51 190.53,684.56 198.54,679.61 207.81,676.41 217.64,673.92 227.47,671.42 237.31,668.93" fill="none" stroke="#00ff00" stroke-width="1.0" shape-rendering="geometricPrecision"/>
<polyline points="69.95,771.18 79.25,767.14 88.71,763.33 98.25,759.64 107.78,755.95 116.42,750.58 124.4,743.98 132.38,737.37 140.48,731 148.52,724.7 155.98,717.99 163.44,711.28 171.07,705.15 178.89,699.64 186.71,694.13 194.53,688.62 202.35,683.11 211.64,679.58 221.58,676.87 231.53,674.16 241.47,671.45" fill="none" stroke="#00ff00" stroke-width="1.0" shape-rendering="geometricPrecision"/>
<polyline points="77.98,776.12 87.32,772.38 96.81,768.86 106.35,765.43 115.9,762 124.43,756.66 132.21,749.92 139.99,743.18 147.88,736.64 155.66,730.13 162.78,723.16 169.91,716.19 177.19,709.72 184.63,703.79 192.06,697.87 199.5,691.94 206.94,686.02 216.05,682.3 225.92,679.52 235.78,676.75 245.64,673.97" fill="none" stroke="#00ff00" stroke-width="1.0" shape-rendering="geometricPrecision"/>
<polyline points="86,781.05 95.39,777.63 104.9,774.38 114.46,771.22 124.02,768.05 132.44,762.75 140.02,755.87 147.6,748.99 155.27,742.28 162.8,735.57 169.59,728.33 176.38,721.09 183.3,714.28 190.36,707.94 197.42,701.6 204.48,695.26 211.54,688.92 220.47,685.02 230.25,682.18 240.03,679.33 249.81,676.49" fill="none" stroke="#00ff00" stroke-width="1.0" shape-rendering="geometricPrecision"/>
<polyline points="94.03,785.99 103.46,782.86 113,779.89 122.58,776.98 132.16,774.08 140.46,768.79 147.85,761.77 155.23,754.75 162.69,747.87 169.97,740.94 176.43,733.43 182.89,725.92 189.45,718.77 196.14,712 202.82,705.24 209.5,698.48 216.19,691.71 224.95,687.63 234.65,684.71 244.35,681.79 254.05,678.87" fill="none" stroke="#00ff00" stroke-width="1.0" shape-rendering="geometricPrecision"/>
<polyline points="102.05,790.92 111.55,788.08 121.11,785.36 130.72,782.7 140.33,780.03 148.54,774.75 155.73,767.57 162.93,760.38 170.18,753.31 177.22,746.15 183.36,738.35 189.5,730.55 195.72,723.03 202.04,715.83 208.36,708.63 214.67,701.43 220.99,694.22 229.59,689.93 239.22,686.92 248.85,683.91 258.48,680.9" fill="none" stroke="#00ff00" stroke-width="1.0" shape-rendering="geometricPrecision"/>
<polyline points="110.08,795.86 119.63,793.3 129.23,790.84 138.87,788.41 148.5,785.99 156.61,780.71 163.62,773.37 170.63,766.02 177.68,758.76 184.48,751.36 190.29,743.27 196.11,735.18 201.99,727.3 207.94,719.66 213.89,712.02 219.84,704.38 225.79,696.73 234.22,692.23 243.79,689.13 253.35,686.03 262.91,682.92" fill="none" stroke="#00ff00" stroke-width="1.0" shape-rendering="geometricPrecision"/>
<polyline points="118.11,800.79 127.71,798.52 137.35,796.31 147.01,794.13 156.67,791.94 164.69,786.67 171.51,779.16 178.33,771.65 185.18,764.2 191.74,756.57 197.23,748.19 202.72,739.81 208.26,731.57 213.84,723.49 219.43,715.41 225.01,707.32 230.59,699.24 238.86,694.53 248.36,691.34 257.85,688.14 267.34,684.95" fill="none" stroke="#00ff00" stroke-width="1.0" shape-rendering="geometricPrecision"/>
<polyline points="126.56,802.9 136.2,801.06 145.86,799.24 155.52,797.44 165.19,795.64 173.09,790.52 179.7,782.98 186.31,775.45 192.93,767.95 199.23,760.23 204.38,751.7 209.53,743.17 214.7,734.71 219.9,726.33 225.09,717.95 230.29,709.57 235.48,701.19 243.57,696.41 252.97,693.26 262.37,690.12 271.77,686.97" fill="none" stroke="#00ff00" stroke-width="1.0" shape-rendering="geometricPrecision"/>
<polyline points="135.7,800.6 145.34,799.4 154.98,798.2 164.61,797 174.25,795.8 181.99,791.05 188.36,783.72 194.73,776.38 201.09,769.05 207.1,761.46 211.87,753 216.64,744.54 221.41,736.08 226.19,727.62 230.96,719.17 235.73,710.71 240.5,702.25 248.37,697.63 257.65,694.75 266.92,691.88 276.2,689" fill="none" stroke="#00ff00" stroke-width="1.0" shape-rendering="geometricPrecision"/>
<rect x="62.4" y="707" width="2" height="2" fill="#00ff00"/>
<rect x="61.15" y="716.34" width="2" height="2" fill="#00ff00"/>
<rect x="59.89" y="725.67" width="2" height="2" fill="#00ff00"/>
<rect x="58.64" y="735.01" width="2" height="2" fill="#00ff00"/>
<rect x="59.6" y="744.19" width="2" height="2" fill="#00ff00"/>
<rect x="62.21" y="753.24" width="2" height="2" fill="#00ff00"/>
<rect x="64.82" y="762.29" width="2" height="2" fill="#00ff00"/>
<rect x="68.95" y="770.18" width="2" height="2" fill="#00ff00"/>
<rect x="76.98" y="775.12" width="2" height="2" fill="#00ff00"/>
<rect x="85" y="780.05" width="2" height="2" fill="#00ff00"/>
<rect x="93.03" y="784.99" width="2" height="2" fill="#00ff00"/>
<rect x="101.05" y="789.92" width="2" height="2" fill="#00ff00"/>
<rect x="109.08" y="794.86" width="2" height="2" fill="#00ff00"/>
<rect x="117.11" y="799.79" width="2" height="2" fill="#00ff00"/>
<rect x="125.56" y="801.9" width="2" height="2" fill="#00ff00"/>
<rect x="134.7" y="799.6" width="2" height="2" fill="#00ff00"/>
<rect x="81.7" y="694.36" width="2" height="2" fill="#00ff00"/>
<rect x="81.85" y="703.89" width="2" height="2" fill="#00ff00"/>
<rect x="82" y="713.41" width="2" height="2" fill="#00ff00"/>
<rect x="82.14" y="722.94" width="2" height="2" fill="#00ff00"/>
<rect x="84.19" y="732.32" width="2" height="2" fill="#00ff00"/>
<rect x="87.66" y="741.6" width="2" height="2" fill="#00ff00"/>
<rect x="91.12" y="750.88" width="2" height="2" fill="#00ff00"/>
<rect x="95.89" y="759.17" width="2" height="2" fill="#00ff00"/>
<rect x="103.99" y="764.92" width="2" height="2" fill="#00ff00"/>
<rect x="112.09" y="770.67" width="2" height="2" fill="#00ff00"/>
<rect x="120.21" y="776.4" width="2" height="2" fill="#00ff00"/>
<rect x="128.35" y="782.08" width="2" height="2" fill="#00ff00"/>
<rect x="136.49" y="787.76" width="2" height="2" fill="#00ff00"/>
<rect x="144.63" y="793.44" width="2" height="2" fill="#00ff00"/>
<rect x="153.14" y="796.7" width="2" height="2" fill="#00ff00"/>
<rect x="162.24" y="796.17" width="2" height="2" fill="#00ff00"/>
<rect x="101.51" y="682.5" width="2" height="2" fill="#00ff00"/>
<rect x="102.75" y="691.63" width="2" height="2" fill="#00ff00"/>
<rect x="103.99" y="700.77" width="2" height="2" fill="#00ff00"/>
<rect x="105.22" y="709.9" width="2" height="2" fill="#00ff00"/>
<rect x="108.04" y="718.91" width="2" height="2" fill="#00ff00"/>
<rect x="112.04" y="727.83" width="2" height="2" fill="#00ff00"/>
<rect x="116.04" y="736.76" width="2" height="2" fill="#00ff00"/>
<rect x="121.12" y="744.86" width="2" height="2" fill="#00ff00"/>
<rect x="128.99" y="750.85" width="2" height="2" fill="#00ff00"/>
<rect x="136.85" y="756.83" width="2" height="2" fill="#00ff00"/>
<rect x="144.74" y="762.78" width="2" height="2" fill="#00ff00"/>
<rect x="152.68" y="768.62" width="2" height="2" fill="#00ff00"/>
<rect x="160.62" y="774.46" width="2" height="2" fill="#00ff00"/>
<rect x="168.56" y="780.31" width="2" height="2" fill="#00ff00"/>
<rect x="176.81" y="784.14" width="2" height="2" fill="#00ff00"/>
<rect x="185.54" y="784.81" width="2" height="2" fill="#00ff00"/>
<rect x="121.71" y="671.37" width="2" height="2" fill="#00ff00"/>
<rect x="123.66" y="679.42" width="2" height="2" fill="#00ff00"/>
<rect x="125.62" y="687.47" width="2" height="2" fill="#00ff00"/>
<rect x="127.58" y="695.52" width="2" height="2" fill="#00ff00"/>
<rect x="130.8" y="703.47" width="2" height="2" fill="#00ff00"/>
<rect x="134.97" y="711.36" width="2" height="2" fill="#00ff00"/>
<rect x="139.14" y="719.24" width="2" height="2" fill="#00ff00"/>
<rect x="144.17" y="726.47" width="2" height="2" fill="#00ff00"/>
<rect x="151.43" y="732" width="2" height="2" fill="#00ff00"/>
<rect x="158.69" y="737.53" width="2" height="2" fill="#00ff00"/>
<rect x="165.99" y="743.01" width="2" height="2" fill="#00ff00"/>
<rect x="173.36" y="748.33" width="2" height="2" fill="#00ff00"/>
<rect x="180.73" y="753.65" width="2" height="2" fill="#00ff00"/>
<rect x="188.11" y="758.97" width="2" height="2" fill="#00ff00"/>
<rect x="195.73" y="762.67" width="2" height="2" fill="#00ff00"/>
<rect x="203.73" y="763.86" width="2" height="2" fill="#00ff00"/>
<rect x="142.66" y="661.7" width="2" height="2" fill="#00ff00"/>
<rect x="145.01" y="668.37" width="2" height="2" fill="#00ff00"/>
<rect x="147.35" y="675.04" width="2" height="2" fill="#00ff00"/>
<rect x="149.7" y="681.71" width="2" height="2" fill="#00ff00"/>
<rect x="152.99" y="688.31" width="2" height="2" fill="#00ff00"/>
<rect x="157" y="694.86" width="2" height="2" fill="#00ff00"/>
<rect x="161" y="701.41" width="2" height="2" fill="#00ff00"/>
<rect x="165.65" y="707.46" width="2" height="2" fill="#00ff00"/>
<rect x="171.98" y="712.24" width="2" height="2" fill="#00ff00"/>
<rect x="178.3" y="717.03" width="2" height="2" fill="#00ff00"/>
<rect x="184.66" y="721.73" width="2" height="2" fill="#00ff00"/>
<rect x="191.14" y="726.23" width="2" height="2" fill="#00ff00"/>
<rect x="197.61" y="730.73" width="2" height="2" fill="#00ff00"/>
<rect x="204.08" y="735.23" width="2" height="2" fill="#00ff00"/>
<rect x="210.74" y="738.52" width="2" height="2" fill="#00ff00"/>
<rect x="217.69" y="739.92" width="2" height="2" fill="#00ff00"/>
<rect x="165.42" y="658.05" width="2" height="2" fill="#00ff00"/>
<rect x="168.01" y="662.93" width="2" height="2" fill="#00ff00"/>
<rect x="170.61" y="667.8" width="2" height="2" fill="#00ff00"/>
<rect x="173.2" y="672.68" width="2" height="2" fill="#00ff00"/>
<rect x="176.42" y="677.51" width="2" height="2" fill="#00ff00"/>
<rect x="180.12" y="682.3" width="2" height="2" fill="#00ff00"/>
<rect x="183.82" y="687.09" width="2" height="2" fill="#00ff00"/>
<rect x="187.95" y="691.56" width="2" height="2" fill="#00ff00"/>
<rect x="193.19" y="695.17" width="2" height="2" fill="#00ff00"/>
<rect x="198.43" y="698.79" width="2" height="2" fill="#00ff00"/>
<rect x="203.73" y="702.31" width="2" height="2" fill="#00ff00"/>
<rect x="209.16" y="705.57" width="2" height="2" fill="#00ff00"/>
<rect x="214.59" y="708.83" width="2" height="2" fill="#00ff00"/>
<rect x="220.02" y="712.1" width="2" height="2" fill="#00ff00"/>
<rect x="225.58" y="714.55" width="2" height="2" fill="#00ff00"/>
<rect x="231.32" y="715.75" width="2" height="2" fill="#00ff00"/>
<rect x="188.32" y="655.11" width="2" height="2" fill="#00ff00"/>
<rect x="191.4" y="658.45" width="2" height="2" fill="#00ff00"/>
<rect x="194.48" y="661.79" width="2" height="2" fill="#00ff00"/>
<rect x="197.56" y="665.13" width="2" height="2" fill="#00ff00"/>
<rect x="200.95" y="668.45" width="2" height="2" fill="#00ff00"/>
<rect x="204.58" y="671.75" width="2" height="2" fill="#00ff00"/>
<rect x="208.21" y="675.05" width="2" height="2" fill="#00ff00"/>
<rect x="212.06" y="678.19" width="2" height="2" fill="#00ff00"/>
<rect x="216.46" y="680.9" width="2" height="2" fill="#00ff00"/>
<rect x="220.87" y="683.62" width="2" height="2" fill="#00ff00"/>
<rect x="225.33" y="686.21" width="2" height="2" fill="#00ff00"/>
<rect x="229.96" y="688.5" width="2" height="2" fill="#00ff00"/>
<rect x="234.59" y="690.79" width="2" height="2" fill="#00ff00"/>
<rect x="239.22" y="693.07" width="2" height="2" fill="#00ff00"/>
<rect x="243.91" y="694.96" width="2" height="2" fill="#00ff00"/>
<rect x="248.7" y="696.21" width="2" height="2" fill="#00ff00"/>
<rect x="211.3" y="652.8" width="2" height="2" fill="#00ff00"/>
<rect x="215.47" y="655.32" width="2" height="2" fill="#00ff00"/>
<rect x="219.64" y="657.84" width="2" height="2" fill="#00ff00"/>
<rect x="223.8" y="660.36" width="2" height="2" fill="#00ff00"/>
<rect x="227.97" y="662.88" width="2" height="2" fill="#00ff00"/>
<rect x="232.14" y="665.41" width="2" height="2" fill="#00ff00"/>
<rect x="236.31" y="667.93" width="2" height="2" fill="#00ff00"/>
<rect x="240.47" y="670.45" width="2" height="2" fill="#00ff00"/>
<rect x="244.64" y="672.97" width="2" height="2" fill="#00ff00"/>
<rect x="248.81" y="675.49" width="2" height="2" fill="#00ff00"/>
<rect x="253.05" y="677.87" width="2" height="2" fill="#00ff00"/>
<rect x="257.48" y="679.9" width="2" height="2" fill="#00ff00"/>
<rect x="261.91" y="681.92" width="2" height="2" fill="#00ff00"/>
<rect x="266.34" y="683.95" width="2" height="2" fill="#00ff00"/>
<rect x="270.77" y="685.97" width="2" height="2" fill="#00ff00"/>
<rect x="275.2" y="688" width="2" height="2" fill="#00ff00"/>
<rect x="277" y="789" width="109" height="11" fill="#cbcbcb" />
<rect x="277" y="800" width="109" height="7" fill="#ececec" />
<rect x="277" y="801" width="109" height="1" fill="#d8d8d8" />
<line x1="333.5" y1="650" x2="333.5" y2="788" stroke="#008080" stroke-width="1" />
<rect x="0" y="788" width="45" height="19" fill="#000000" />
<polygon points="0,788.5 35,788.5 38,800.5 3,800.5" fill="#ffffff" stroke="none" stroke-width="1" />
<polygon points="0,792 0,800.5 3.5,800.5" fill="#808080" stroke="none" stroke-width="1" />
<text class="m" transform="translate(5,797.8) scale(1.0,1)" text-anchor="start" font-size="11" fill="#000000" font-weight="bold">Text</text>
<polygon points="34,800.5 37,790 45,790 45,800.5" fill="#c8c8c8" stroke="none" stroke-width="1" />
<text class="m" transform="translate(39,798.3) scale(1.0,1)" text-anchor="start" font-size="11" fill="#000000" font-weight="bold">2</text>
<rect x="0" y="800.5" width="44" height="6" fill="#dcdcdc" />
<rect x="386" y="400" width="392" height="413" fill="#000000" />
<line x1="388" y1="400.5" x2="778" y2="400.5" stroke="#9a9a9a" stroke-width="1" />
<line x1="426.5" y1="401" x2="426.5" y2="636" stroke="#00ff00" stroke-width="1" />
<line x1="388" y1="442.5" x2="778" y2="442.5" stroke="#00ff00" stroke-width="1" />
<text class="m" transform="translate(499,409.84) scale(0.9197530864197531,1)" text-anchor="start" font-size="10.8" fill="#12f012" >-(Posição Acelerador,RPM)/-</text>
<text class="m" transform="translate(417,420.88) scale(1.1627906976744187,1)" text-anchor="end" font-size="8.6" fill="#12f012" font-weight="bold">%</text>
<text class="m" transform="translate(388,433.08) scale(1.1627906976744187,1)" text-anchor="start" font-size="8.6" fill="#12f012" font-weight="bold">RPM</text>
<text class="m" transform="translate(436,421.54) scale(0.9104938271604939,1)" text-anchor="start" font-size="10.8" fill="#12f012" >1,01</text>
<text class="m" transform="translate(471.8,433.54) scale(0.9104938271604939,1)" text-anchor="start" font-size="10.8" fill="#12f012" >4,01</text>
<text class="m" transform="translate(507.6,421.54) scale(0.9104938271604939,1)" text-anchor="start" font-size="10.8" fill="#12f012" >10,01</text>
<text class="m" transform="translate(543.4,433.54) scale(0.9104938271604939,1)" text-anchor="start" font-size="10.8" fill="#12f012" >25,01</text>
<text class="m" transform="translate(579.2,421.54) scale(0.9104938271604939,1)" text-anchor="start" font-size="10.8" fill="#12f012" >37,01</text>
<text class="m" transform="translate(615,433.54) scale(0.9104938271604939,1)" text-anchor="start" font-size="10.8" fill="#12f012" >56,01</text>
<text class="m" transform="translate(650.8,421.54) scale(0.9104938271604939,1)" text-anchor="start" font-size="10.8" fill="#12f012" >80,01</text>
<text class="m" transform="translate(686.6,433.54) scale(0.9104938271604939,1)" text-anchor="start" font-size="10.8" fill="#12f012" >100,01</text>
<text class="m" transform="translate(417.5,457.54) scale(0.9104938271604939,1)" text-anchor="end" font-size="10.8" fill="#12f012" >0</text>
<text class="m" transform="translate(465,457.54) scale(0.9104938271604939,1)" text-anchor="end" font-size="10.8" fill="#12f012" >19</text>
<text class="m" transform="translate(500.8,457.54) scale(0.9104938271604939,1)" text-anchor="end" font-size="10.8" fill="#12f012" >42</text>
<text class="m" transform="translate(536.6,457.54) scale(0.9104938271604939,1)" text-anchor="end" font-size="10.8" fill="#12f012" >46</text>
<text class="m" transform="translate(572.4,457.54) scale(0.9104938271604939,1)" text-anchor="end" font-size="10.8" fill="#12f012" >54</text>
<text class="m" transform="translate(608.2,457.54) scale(0.9104938271604939,1)" text-anchor="end" font-size="10.8" fill="#12f012" >62</text>
<text class="m" transform="translate(644,457.54) scale(0.9104938271604939,1)" text-anchor="end" font-size="10.8" fill="#12f012" >65</text>
<text class="m" transform="translate(679.8,457.54) scale(0.9104938271604939,1)" text-anchor="end" font-size="10.8" fill="#12f012" >70</text>
<text class="m" transform="translate(715.6,457.54) scale(0.9104938271604939,1)" text-anchor="end" font-size="10.8" fill="#12f012" >70</text>
<rect x="730" y="457" width="5" height="3" fill="#00ff00" />
<rect x="736" y="454" width="5" height="6" fill="#00ff00" />
<rect x="742" y="453" width="5" height="7" fill="#00ff00" />
<rect x="748" y="452" width="5" height="8" fill="#00ff00" />
<rect x="754" y="451" width="5" height="9" fill="#00ff00" />
<rect x="760" y="451" width="5" height="9" fill="#00ff00" />
<rect x="766" y="450" width="5" height="10" fill="#00ff00" />
<rect x="772" y="450" width="5" height="10" fill="#00ff00" />
<text class="m" transform="translate(417.5,469.32) scale(0.9104938271604939,1)" text-anchor="end" font-size="10.8" fill="#12f012" >399</text>
<text class="m" transform="translate(465,469.32) scale(0.9104938271604939,1)" text-anchor="end" font-size="10.8" fill="#12f012" >0</text>
<text class="m" transform="translate(500.8,469.32) scale(0.9104938271604939,1)" text-anchor="end" font-size="10.8" fill="#12f012" >20</text>
<text class="m" transform="translate(536.6,469.32) scale(0.9104938271604939,1)" text-anchor="end" font-size="10.8" fill="#12f012" >33</text>
<text class="m" transform="translate(572.4,469.32) scale(0.9104938271604939,1)" text-anchor="end" font-size="10.8" fill="#12f012" >41</text>
<text class="m" transform="translate(608.2,469.32) scale(0.9104938271604939,1)" text-anchor="end" font-size="10.8" fill="#12f012" >50</text>
<text class="m" transform="translate(644,469.32) scale(0.9104938271604939,1)" text-anchor="end" font-size="10.8" fill="#12f012" >63</text>
<text class="m" transform="translate(679.8,469.32) scale(0.9104938271604939,1)" text-anchor="end" font-size="10.8" fill="#12f012" >70</text>
<text class="m" transform="translate(715.6,469.32) scale(0.9104938271604939,1)" text-anchor="end" font-size="10.8" fill="#12f012" >70</text>
<rect x="736" y="469" width="5" height="3" fill="#00ff00" />
<rect x="742" y="467" width="5" height="5" fill="#00ff00" />
<rect x="748" y="466" width="5" height="6" fill="#00ff00" />
<rect x="754" y="465" width="5" height="7" fill="#00ff00" />
<rect x="760" y="463" width="5" height="9" fill="#00ff00" />
<rect x="766" y="462" width="5" height="10" fill="#00ff00" />
<rect x="772" y="462" width="5" height="10" fill="#00ff00" />
<text class="m" transform="translate(417.5,481.1) scale(0.9104938271604939,1)" text-anchor="end" font-size="10.8" fill="#12f012" >609</text>
<text class="m" transform="translate(465,481.1) scale(0.9104938271604939,1)" text-anchor="end" font-size="10.8" fill="#12f012" >0</text>
<text class="m" transform="translate(500.8,481.1) scale(0.9104938271604939,1)" text-anchor="end" font-size="10.8" fill="#12f012" >20</text>
<text class="m" transform="translate(536.6,481.1) scale(0.9104938271604939,1)" text-anchor="end" font-size="10.8" fill="#12f012" >26</text>
<text class="m" transform="translate(572.4,481.1) scale(0.9104938271604939,1)" text-anchor="end" font-size="10.8" fill="#12f012" >35</text>
<text class="m" transform="translate(608.2,481.1) scale(0.9104938271604939,1)" text-anchor="end" font-size="10.8" fill="#12f012" >44</text>
<text class="m" transform="translate(644,481.1) scale(0.9104938271604939,1)" text-anchor="end" font-size="10.8" fill="#12f012" >59</text>
<text class="m" transform="translate(679.8,481.1) scale(0.9104938271604939,1)" text-anchor="end" font-size="10.8" fill="#12f012" >70</text>
<text class="m" transform="translate(715.6,481.1) scale(0.9104938271604939,1)" text-anchor="end" font-size="10.8" fill="#12f012" >70</text>
<rect x="736" y="480" width="5" height="3" fill="#00ff00" />
<rect x="742" y="479" width="5" height="4" fill="#00ff00" />
<rect x="748" y="478" width="5" height="5" fill="#00ff00" />
<rect x="754" y="477" width="5" height="6" fill="#00ff00" />
<rect x="760" y="475" width="5" height="8" fill="#00ff00" />
<rect x="766" y="473" width="5" height="10" fill="#00ff00" />
<rect x="772" y="473" width="5" height="10" fill="#00ff00" />
<text class="m" transform="translate(417.5,492.88) scale(0.9104938271604939,1)" text-anchor="end" font-size="10.8" fill="#12f012" >693</text>
<text class="m" transform="translate(465,492.88) scale(0.9104938271604939,1)" text-anchor="end" font-size="10.8" fill="#12f012" >0</text>
<text class="m" transform="translate(500.8,492.88) scale(0.9104938271604939,1)" text-anchor="end" font-size="10.8" fill="#12f012" >16</text>
<text class="m" transform="translate(536.6,492.88) scale(0.9104938271604939,1)" text-anchor="end" font-size="10.8" fill="#12f012" >23</text>
<text class="m" transform="translate(572.4,492.88) scale(0.9104938271604939,1)" text-anchor="end" font-size="10.8" fill="#12f012" >32</text>
<text class="m" transform="translate(608.2,492.88) scale(0.9104938271604939,1)" text-anchor="end" font-size="10.8" fill="#12f012" >41</text>
<text class="m" transform="translate(644,492.88) scale(0.9104938271604939,1)" text-anchor="end" font-size="10.8" fill="#12f012" >58</text>
<text class="m" transform="translate(679.8,492.88) scale(0.9104938271604939,1)" text-anchor="end" font-size="10.8" fill="#12f012" >70</text>
<text class="m" transform="translate(715.6,492.88) scale(0.9104938271604939,1)" text-anchor="end" font-size="10.8" fill="#12f012" >70</text>
<rect x="736" y="493" width="5" height="2" fill="#00ff00" />
<rect x="742" y="492" width="5" height="3" fill="#00ff00" />
<rect x="748" y="490" width="5" height="5" fill="#00ff00" />
<rect x="754" y="489" width="5" height="6" fill="#00ff00" />
<rect x="760" y="487" width="5" height="8" fill="#00ff00" />
<rect x="766" y="485" width="5" height="10" fill="#00ff00" />
<rect x="772" y="485" width="5" height="10" fill="#00ff00" />
<text class="m" transform="translate(417.5,504.66) scale(0.9104938271604939,1)" text-anchor="end" font-size="10.8" fill="#12f012" >798</text>
<text class="m" transform="translate(465,504.66) scale(0.9104938271604939,1)" text-anchor="end" font-size="10.8" fill="#12f012" >0</text>
<text class="m" transform="translate(500.8,504.66) scale(0.9104938271604939,1)" text-anchor="end" font-size="10.8" fill="#12f012" >11</text>
<text class="m" transform="translate(536.6,504.66) scale(0.9104938271604939,1)" text-anchor="end" font-size="10.8" fill="#12f012" >16</text>
<text class="m" transform="translate(572.4,504.66) scale(0.9104938271604939,1)" text-anchor="end" font-size="10.8" fill="#12f012" >28</text>
<text class="m" transform="translate(608.2,504.66) scale(0.9104938271604939,1)" text-anchor="end" font-size="10.8" fill="#12f012" >38</text>
<text class="m" transform="translate(644,504.66) scale(0.9104938271604939,1)" text-anchor="end" font-size="10.8" fill="#12f012" >56</text>
<text class="m" transform="translate(679.8,504.66) scale(0.9104938271604939,1)" text-anchor="end" font-size="10.8" fill="#12f012" >70</text>
<text class="m" transform="translate(715.6,504.66) scale(0.9104938271604939,1)" text-anchor="end" font-size="10.8" fill="#12f012" >70</text>
<rect x="736" y="505" width="5" height="2" fill="#00ff00" />
<rect x="742" y="505" width="5" height="2" fill="#00ff00" />
<rect x="748" y="503" width="5" height="4" fill="#00ff00" />
<rect x="754" y="502" width="5" height="5" fill="#00ff00" />
<rect x="760" y="499" width="5" height="8" fill="#00ff00" />
<rect x="766" y="497" width="5" height="10" fill="#00ff00" />
<rect x="772" y="497" width="5" height="10" fill="#00ff00" />
<text class="m" transform="translate(417.5,516.44) scale(0.9104938271604939,1)" text-anchor="end" font-size="10.8" fill="#12f012" >903</text>
<text class="m" transform="translate(465,516.44) scale(0.9104938271604939,1)" text-anchor="end" font-size="10.8" fill="#12f012" >0</text>
<text class="m" transform="translate(500.8,516.44) scale(0.9104938271604939,1)" text-anchor="end" font-size="10.8" fill="#12f012" >7</text>
<text class="m" transform="translate(536.6,516.44) scale(0.9104938271604939,1)" text-anchor="end" font-size="10.8" fill="#12f012" >15</text>
<text class="m" transform="translate(572.4,516.44) scale(0.9104938271604939,1)" text-anchor="end" font-size="10.8" fill="#12f012" >25</text>
<text class="m" transform="translate(608.2,516.44) scale(0.9104938271604939,1)" text-anchor="end" font-size="10.8" fill="#12f012" >34</text>
<text class="m" transform="translate(644,516.44) scale(0.9104938271604939,1)" text-anchor="end" font-size="10.8" fill="#12f012" >55</text>
<text class="m" transform="translate(679.8,516.44) scale(0.9104938271604939,1)" text-anchor="end" font-size="10.8" fill="#12f012" >70</text>
<text class="m" transform="translate(715.6,516.44) scale(0.9104938271604939,1)" text-anchor="end" font-size="10.8" fill="#12f012" >70</text>
<rect x="736" y="518" width="5" height="1" fill="#00ff00" />
<rect x="742" y="517" width="5" height="2" fill="#00ff00" />
<rect x="748" y="515" width="5" height="4" fill="#00ff00" />
<rect x="754" y="514" width="5" height="5" fill="#00ff00" />
<rect x="760" y="511" width="5" height="8" fill="#00ff00" />
<rect x="766" y="509" width="5" height="10" fill="#00ff00" />
<rect x="772" y="509" width="5" height="10" fill="#00ff00" />
<text class="m" transform="translate(417.5,528.22) scale(0.9104938271604939,1)" text-anchor="end" font-size="10.8" fill="#12f012" >1008</text>
<text class="m" transform="translate(465,528.22) scale(0.9104938271604939,1)" text-anchor="end" font-size="10.8" fill="#12f012" >0</text>
<text class="m" transform="translate(500.8,528.22) scale(0.9104938271604939,1)" text-anchor="end" font-size="10.8" fill="#12f012" >5</text>
<text class="m" transform="translate(536.6,528.22) scale(0.9104938271604939,1)" text-anchor="end" font-size="10.8" fill="#12f012" >11</text>
<text class="m" transform="translate(572.4,528.22) scale(0.9104938271604939,1)" text-anchor="end" font-size="10.8" fill="#12f012" >21</text>
<text class="m" transform="translate(608.2,528.22) scale(0.9104938271604939,1)" text-anchor="end" font-size="10.8" fill="#12f012" >30</text>
<text class="m" transform="translate(644,528.22) scale(0.9104938271604939,1)" text-anchor="end" font-size="10.8" fill="#12f012" >53</text>
<text class="m" transform="translate(679.8,528.22) scale(0.9104938271604939,1)" text-anchor="end" font-size="10.8" fill="#12f012" >70</text>
<text class="m" transform="translate(715.6,528.22) scale(0.9104938271604939,1)" text-anchor="end" font-size="10.8" fill="#12f012" >70</text>
<rect x="736" y="529" width="5" height="1" fill="#00ff00" />
<rect x="742" y="528" width="5" height="2" fill="#00ff00" />
<rect x="748" y="527" width="5" height="3" fill="#00ff00" />
<rect x="754" y="526" width="5" height="4" fill="#00ff00" />
<rect x="760" y="522" width="5" height="8" fill="#00ff00" />
<rect x="766" y="520" width="5" height="10" fill="#00ff00" />
<rect x="772" y="520" width="5" height="10" fill="#00ff00" />
<text class="m" transform="translate(417.5,540) scale(0.9104938271604939,1)" text-anchor="end" font-size="10.8" fill="#12f012" >1113</text>
<text class="m" transform="translate(465,540) scale(0.9104938271604939,1)" text-anchor="end" font-size="10.8" fill="#12f012" >0</text>
<text class="m" transform="translate(500.8,540) scale(0.9104938271604939,1)" text-anchor="end" font-size="10.8" fill="#12f012" >4</text>
<text class="m" transform="translate(536.6,540) scale(0.9104938271604939,1)" text-anchor="end" font-size="10.8" fill="#12f012" >8</text>
<text class="m" transform="translate(572.4,540) scale(0.9104938271604939,1)" text-anchor="end" font-size="10.8" fill="#12f012" >18</text>
<text class="m" transform="translate(608.2,540) scale(0.9104938271604939,1)" text-anchor="end" font-size="10.8" fill="#12f012" >27</text>
<text class="m" transform="translate(644,540) scale(0.9104938271604939,1)" text-anchor="end" font-size="10.8" fill="#12f012" >51</text>
<text class="m" transform="translate(679.8,540) scale(0.9104938271604939,1)" text-anchor="end" font-size="10.8" fill="#12f012" >69</text>
<text class="m" transform="translate(715.6,540) scale(0.9104938271604939,1)" text-anchor="end" font-size="10.8" fill="#12f012" >70</text>
<rect x="736" y="541" width="5" height="1" fill="#00ff00" />
<rect x="742" y="541" width="5" height="1" fill="#00ff00" />
<rect x="748" y="539" width="5" height="3" fill="#00ff00" />
<rect x="754" y="538" width="5" height="4" fill="#00ff00" />
<rect x="760" y="535" width="5" height="7" fill="#00ff00" />
<rect x="766" y="532" width="5" height="10" fill="#00ff00" />
<rect x="772" y="532" width="5" height="10" fill="#00ff00" />
<text class="m" transform="translate(417.5,551.78) scale(0.9104938271604939,1)" text-anchor="end" font-size="10.8" fill="#12f012" >1218</text>
<text class="m" transform="translate(465,551.78) scale(0.9104938271604939,1)" text-anchor="end" font-size="10.8" fill="#12f012" >0</text>
<text class="m" transform="translate(500.8,551.78) scale(0.9104938271604939,1)" text-anchor="end" font-size="10.8" fill="#12f012" >3</text>
<text class="m" transform="translate(536.6,551.78) scale(0.9104938271604939,1)" text-anchor="end" font-size="10.8" fill="#12f012" >7</text>
<text class="m" transform="translate(572.4,551.78) scale(0.9104938271604939,1)" text-anchor="end" font-size="10.8" fill="#12f012" >16</text>
<text class="m" transform="translate(608.2,551.78) scale(0.9104938271604939,1)" text-anchor="end" font-size="10.8" fill="#12f012" >25</text>
<text class="m" transform="translate(644,551.78) scale(0.9104938271604939,1)" text-anchor="end" font-size="10.8" fill="#12f012" >50</text>
<text class="m" transform="translate(679.8,551.78) scale(0.9104938271604939,1)" text-anchor="end" font-size="10.8" fill="#12f012" >68</text>
<text class="m" transform="translate(715.6,551.78) scale(0.9104938271604939,1)" text-anchor="end" font-size="10.8" fill="#12f012" >70</text>
<rect x="742" y="553" width="5" height="1" fill="#00ff00" />
<rect x="748" y="552" width="5" height="2" fill="#00ff00" />
<rect x="754" y="550" width="5" height="4" fill="#00ff00" />
<rect x="760" y="547" width="5" height="7" fill="#00ff00" />
<rect x="766" y="544" width="5" height="10" fill="#00ff00" />
<rect x="772" y="544" width="5" height="10" fill="#00ff00" />
<text class="m" transform="translate(417.5,563.56) scale(0.9104938271604939,1)" text-anchor="end" font-size="10.8" fill="#12f012" >1491</text>
<text class="m" transform="translate(465,563.56) scale(0.9104938271604939,1)" text-anchor="end" font-size="10.8" fill="#12f012" >0</text>
<text class="m" transform="translate(500.8,563.56) scale(0.9104938271604939,1)" text-anchor="end" font-size="10.8" fill="#12f012" >2</text>
<text class="m" transform="translate(536.6,563.56) scale(0.9104938271604939,1)" text-anchor="end" font-size="10.8" fill="#12f012" >4</text>
<text class="m" transform="translate(572.4,563.56) scale(0.9104938271604939,1)" text-anchor="end" font-size="10.8" fill="#12f012" >13</text>
<text class="m" transform="translate(608.2,563.56) scale(0.9104938271604939,1)" text-anchor="end" font-size="10.8" fill="#12f012" >21</text>
<text class="m" transform="translate(644,563.56) scale(0.9104938271604939,1)" text-anchor="end" font-size="10.8" fill="#12f012" >46</text>
<text class="m" transform="translate(679.8,563.56) scale(0.9104938271604939,1)" text-anchor="end" font-size="10.8" fill="#12f012" >66</text>
<text class="m" transform="translate(715.6,563.56) scale(0.9104938271604939,1)" text-anchor="end" font-size="10.8" fill="#12f012" >70</text>
<rect x="742" y="565" width="5" height="1" fill="#00ff00" />
<rect x="748" y="564" width="5" height="2" fill="#00ff00" />
<rect x="754" y="563" width="5" height="3" fill="#00ff00" />
<rect x="760" y="559" width="5" height="7" fill="#00ff00" />
<rect x="766" y="557" width="5" height="9" fill="#00ff00" />
<rect x="772" y="556" width="5" height="10" fill="#00ff00" />
<text class="m" transform="translate(417.5,575.34) scale(0.9104938271604939,1)" text-anchor="end" font-size="10.8" fill="#12f012" >1995</text>
<text class="m" transform="translate(465,575.34) scale(0.9104938271604939,1)" text-anchor="end" font-size="10.8" fill="#12f012" >0</text>
<text class="m" transform="translate(500.8,575.34) scale(0.9104938271604939,1)" text-anchor="end" font-size="10.8" fill="#12f012" >1</text>
<text class="m" transform="translate(536.6,575.34) scale(0.9104938271604939,1)" text-anchor="end" font-size="10.8" fill="#12f012" >3</text>
<text class="m" transform="translate(572.4,575.34) scale(0.9104938271604939,1)" text-anchor="end" font-size="10.8" fill="#12f012" >9</text>
<text class="m" transform="translate(608.2,575.34) scale(0.9104938271604939,1)" text-anchor="end" font-size="10.8" fill="#12f012" >17</text>
<text class="m" transform="translate(644,575.34) scale(0.9104938271604939,1)" text-anchor="end" font-size="10.8" fill="#12f012" >41</text>
<text class="m" transform="translate(679.8,575.34) scale(0.9104938271604939,1)" text-anchor="end" font-size="10.8" fill="#12f012" >65</text>
<text class="m" transform="translate(715.6,575.34) scale(0.9104938271604939,1)" text-anchor="end" font-size="10.8" fill="#12f012" >70</text>
<rect x="748" y="577" width="5" height="1" fill="#00ff00" />
<rect x="754" y="576" width="5" height="2" fill="#00ff00" />
<rect x="760" y="572" width="5" height="6" fill="#00ff00" />
<rect x="766" y="569" width="5" height="9" fill="#00ff00" />
<rect x="772" y="568" width="5" height="10" fill="#00ff00" />
<text class="m" transform="translate(417.5,587.12) scale(0.9104938271604939,1)" text-anchor="end" font-size="10.8" fill="#12f012" >2499</text>
<text class="m" transform="translate(465,587.12) scale(0.9104938271604939,1)" text-anchor="end" font-size="10.8" fill="#12f012" >0</text>
<text class="m" transform="translate(500.8,587.12) scale(0.9104938271604939,1)" text-anchor="end" font-size="10.8" fill="#12f012" >1</text>
<text class="m" transform="translate(536.6,587.12) scale(0.9104938271604939,1)" text-anchor="end" font-size="10.8" fill="#12f012" >2</text>
<text class="m" transform="translate(572.4,587.12) scale(0.9104938271604939,1)" text-anchor="end" font-size="10.8" fill="#12f012" >8</text>
<text class="m" transform="translate(608.2,587.12) scale(0.9104938271604939,1)" text-anchor="end" font-size="10.8" fill="#12f012" >15</text>
<text class="m" transform="translate(644,587.12) scale(0.9104938271604939,1)" text-anchor="end" font-size="10.8" fill="#12f012" >38</text>
<text class="m" transform="translate(679.8,587.12) scale(0.9104938271604939,1)" text-anchor="end" font-size="10.8" fill="#12f012" >65</text>
<text class="m" transform="translate(715.6,587.12) scale(0.9104938271604939,1)" text-anchor="end" font-size="10.8" fill="#12f012" >70</text>
<rect x="748" y="588" width="5" height="1" fill="#00ff00" />
<rect x="754" y="587" width="5" height="2" fill="#00ff00" />
<rect x="760" y="584" width="5" height="5" fill="#00ff00" />
<rect x="766" y="580" width="5" height="9" fill="#00ff00" />
<rect x="772" y="579" width="5" height="10" fill="#00ff00" />
<text class="m" transform="translate(417.5,598.9) scale(0.9104938271604939,1)" text-anchor="end" font-size="10.8" fill="#12f012" >3003</text>
<text class="m" transform="translate(465,598.9) scale(0.9104938271604939,1)" text-anchor="end" font-size="10.8" fill="#12f012" >0</text>
<text class="m" transform="translate(500.8,598.9) scale(0.9104938271604939,1)" text-anchor="end" font-size="10.8" fill="#12f012" >1</text>
<text class="m" transform="translate(536.6,598.9) scale(0.9104938271604939,1)" text-anchor="end" font-size="10.8" fill="#12f012" >2</text>
<text class="m" transform="translate(572.4,598.9) scale(0.9104938271604939,1)" text-anchor="end" font-size="10.8" fill="#12f012" >7</text>
<text class="m" transform="translate(608.2,598.9) scale(0.9104938271604939,1)" text-anchor="end" font-size="10.8" fill="#12f012" >13</text>
<text class="m" transform="translate(644,598.9) scale(0.9104938271604939,1)" text-anchor="end" font-size="10.8" fill="#12f012" >36</text>
<text class="m" transform="translate(679.8,598.9) scale(0.9104938271604939,1)" text-anchor="end" font-size="10.8" fill="#12f012" >65</text>
<text class="m" transform="translate(715.6,598.9) scale(0.9104938271604939,1)" text-anchor="end" font-size="10.8" fill="#12f012" >70</text>
<rect x="748" y="600" width="5" height="1" fill="#00ff00" />
<rect x="754" y="599" width="5" height="2" fill="#00ff00" />
<rect x="760" y="596" width="5" height="5" fill="#00ff00" />
<rect x="766" y="592" width="5" height="9" fill="#00ff00" />
<rect x="772" y="591" width="5" height="10" fill="#00ff00" />
<text class="m" transform="translate(417.5,610.68) scale(0.9104938271604939,1)" text-anchor="end" font-size="10.8" fill="#12f012" >3990</text>
<text class="m" transform="translate(465,610.68) scale(0.9104938271604939,1)" text-anchor="end" font-size="10.8" fill="#12f012" >0</text>
<text class="m" transform="translate(500.8,610.68) scale(0.9104938271604939,1)" text-anchor="end" font-size="10.8" fill="#12f012" >0</text>
<text class="m" transform="translate(536.6,610.68) scale(0.9104938271604939,1)" text-anchor="end" font-size="10.8" fill="#12f012" >1</text>
<text class="m" transform="translate(572.4,610.68) scale(0.9104938271604939,1)" text-anchor="end" font-size="10.8" fill="#12f012" >5</text>
<text class="m" transform="translate(608.2,610.68) scale(0.9104938271604939,1)" text-anchor="end" font-size="10.8" fill="#12f012" >11</text>
<text class="m" transform="translate(644,610.68) scale(0.9104938271604939,1)" text-anchor="end" font-size="10.8" fill="#12f012" >32</text>
<text class="m" transform="translate(679.8,610.68) scale(0.9104938271604939,1)" text-anchor="end" font-size="10.8" fill="#12f012" >65</text>
<text class="m" transform="translate(715.6,610.68) scale(0.9104938271604939,1)" text-anchor="end" font-size="10.8" fill="#12f012" >70</text>
<rect x="748" y="612" width="5" height="1" fill="#00ff00" />
<rect x="754" y="611" width="5" height="2" fill="#00ff00" />
<rect x="760" y="608" width="5" height="5" fill="#00ff00" />
<rect x="766" y="604" width="5" height="9" fill="#00ff00" />
<rect x="772" y="603" width="5" height="10" fill="#00ff00" />
<text class="m" transform="translate(417.5,622.46) scale(0.9104938271604939,1)" text-anchor="end" font-size="10.8" fill="#12f012" >4998</text>
<text class="m" transform="translate(465,622.46) scale(0.9104938271604939,1)" text-anchor="end" font-size="10.8" fill="#12f012" >0</text>
<text class="m" transform="translate(500.8,622.46) scale(0.9104938271604939,1)" text-anchor="end" font-size="10.8" fill="#12f012" >0</text>
<text class="m" transform="translate(536.6,622.46) scale(0.9104938271604939,1)" text-anchor="end" font-size="10.8" fill="#12f012" >0</text>
<text class="m" transform="translate(572.4,622.46) scale(0.9104938271604939,1)" text-anchor="end" font-size="10.8" fill="#12f012" >3</text>
<text class="m" transform="translate(608.2,622.46) scale(0.9104938271604939,1)" text-anchor="end" font-size="10.8" fill="#12f012" >8</text>
<text class="m" transform="translate(644,622.46) scale(0.9104938271604939,1)" text-anchor="end" font-size="10.8" fill="#12f012" >27</text>
<text class="m" transform="translate(679.8,622.46) scale(0.9104938271604939,1)" text-anchor="end" font-size="10.8" fill="#12f012" >65</text>
<text class="m" transform="translate(715.6,622.46) scale(0.9104938271604939,1)" text-anchor="end" font-size="10.8" fill="#12f012" >70</text>
<rect x="754" y="624" width="5" height="1" fill="#00ff00" />
<rect x="760" y="621" width="5" height="4" fill="#00ff00" />
<rect x="766" y="616" width="5" height="9" fill="#00ff00" />
<rect x="772" y="615" width="5" height="10" fill="#00ff00" />
<text class="m" transform="translate(417.5,634.24) scale(0.9104938271604939,1)" text-anchor="end" font-size="10.8" fill="#12f012" >5555</text>
<text class="m" transform="translate(465,634.24) scale(0.9104938271604939,1)" text-anchor="end" font-size="10.8" fill="#12f012" >0</text>
<text class="m" transform="translate(500.8,634.24) scale(0.9104938271604939,1)" text-anchor="end" font-size="10.8" fill="#12f012" >0</text>
<text class="m" transform="translate(536.6,634.24) scale(0.9104938271604939,1)" text-anchor="end" font-size="10.8" fill="#12f012" >0</text>
<text class="m" transform="translate(572.4,634.24) scale(0.9104938271604939,1)" text-anchor="end" font-size="10.8" fill="#12f012" >1</text>
<text class="m" transform="translate(608.2,634.24) scale(0.9104938271604939,1)" text-anchor="end" font-size="10.8" fill="#12f012" >1</text>
<text class="m" transform="translate(644,634.24) scale(0.9104938271604939,1)" text-anchor="end" font-size="10.8" fill="#12f012" >21</text>
<text class="m" transform="translate(679.8,634.24) scale(0.9104938271604939,1)" text-anchor="end" font-size="10.8" fill="#12f012" >65</text>
<text class="m" transform="translate(715.6,634.24) scale(0.9104938271604939,1)" text-anchor="end" font-size="10.8" fill="#12f012" >70</text>
<rect x="760" y="633" width="5" height="3" fill="#00ff00" />
<rect x="766" y="627" width="5" height="9" fill="#00ff00" />
<rect x="772" y="626" width="5" height="10" fill="#00ff00" />
<rect x="544" y="440" width="29" height="5" fill="#ffffff" />
<line x1="544" y1="442.5" x2="573" y2="442.5" stroke="#ff00ff" stroke-width="1" />
<rect x="424.5" y="518" width="4" height="13" fill="#ffffff" />
<line x1="426.5" y1="518" x2="426.5" y2="531" stroke="#ff00ff" stroke-width="1" />
<rect x="778" y="401" width="308" height="405.5" fill="#f0f0f0" />
<rect x="778" y="401" width="308" height="19" fill="#ffffff" />
<rect x="778.5" y="401.5" width="307" height="404.5" fill="none" stroke="#7a7a7a" stroke-width="1"/>
<text class="s" transform="translate(781,413.51) scale(0.9,1)" text-anchor="start" font-size="11" fill="#000000" >Properties of...</text>
<g stroke="#000" stroke-width="1" shape-rendering="geometricPrecision"><line x1="1072" y1="405" x2="1080.5" y2="413.5"/><line x1="1080.5" y1="405" x2="1072" y2="413.5"/></g>
<rect x="783" y="441.5" width="298.5" height="343" fill="#ffffff" />
<rect x="783.5" y="441.5" width="298" height="343" fill="none" stroke="#d9d9d9" stroke-width="1"/>
<rect x="822.5" y="428.5" width="34" height="13" fill="#f0f0f0" />
<polyline points="822.5,441.5 822.5,428.5 856.5,428.5 856.5,441.5" fill="none" stroke="#d9d9d9" stroke-width="1" />
<text class="s" transform="translate(827,438.83) scale(0.8,1)" text-anchor="start" font-size="10.5" fill="#000000" >X-Axis</text>
<rect x="856.5" y="428.5" width="35" height="13" fill="#f0f0f0" />
<polyline points="856.5,441.5 856.5,428.5 891.5,428.5 891.5,441.5" fill="none" stroke="#d9d9d9" stroke-width="1" />
<text class="s" transform="translate(861,438.83) scale(0.8,1)" text-anchor="start" font-size="10.5" fill="#000000" >Y-Axis</text>
<rect x="891.5" y="428.5" width="46" height="13" fill="#f0f0f0" />
<polyline points="891.5,441.5 891.5,428.5 937.5,428.5 937.5,441.5" fill="none" stroke="#d9d9d9" stroke-width="1" />
<text class="s" transform="translate(896,438.83) scale(0.8,1)" text-anchor="start" font-size="10.5" fill="#000000" >Comment</text>
<rect x="783.5" y="426" width="39" height="16" fill="#ffffff" />
<polyline points="783.5,442 783.5,426.5 822.5,426.5 822.5,441.5" fill="none" stroke="#d9d9d9" stroke-width="1" />
<text class="s" transform="translate(790.5,437.63) scale(0.85,1)" text-anchor="start" font-size="10.5" fill="#000000" >Map</text>
<text class="s" transform="translate(796.5,462.43) scale(0.8,1)" text-anchor="start" font-size="10.5" fill="#000000" >Description:</text>
<text class="s" transform="translate(796.5,481.23) scale(0.8,1)" text-anchor="start" font-size="10.5" fill="#000000" >Unit:</text>
<text class="s" transform="translate(796.5,499.23) scale(0.8,1)" text-anchor="start" font-size="10.5" fill="#000000" >Name:</text>
<text class="s" transform="translate(796.5,521.63) scale(0.8,1)" text-anchor="start" font-size="10.5" fill="#000000" >Start address:</text>
<text class="s" transform="translate(796.5,540.43) scale(0.8,1)" text-anchor="start" font-size="10.5" fill="#000000" >Column x rows:</text>
<text class="s" transform="translate(796.5,565.83) scale(0.8,1)" text-anchor="start" font-size="10.5" fill="#000000" >Values:</text>
<text class="s" transform="translate(796.5,585.63) scale(0.8,1)" text-anchor="start" font-size="10.5" fill="#000000" >Numberformat:</text>
<text class="s" transform="translate(796.5,638.13) scale(0.8,1)" text-anchor="start" font-size="10.5" fill="#000000" >Organization:</text>
<text class="s" transform="translate(796.5,658.23) scale(0.8,1)" text-anchor="start" font-size="10.5" fill="#000000" >Right side:</text>
<text class="s" transform="translate(796.5,675.83) scale(0.8,1)" text-anchor="start" font-size="10.5" fill="#000000" >Value range:</text>
<text class="s" transform="translate(796.5,737.43) scale(0.8,1)" text-anchor="start" font-size="10.5" fill="#000000" >Variable offset:</text>
<text class="s" transform="translate(796.5,766.83) scale(0.8,1)" text-anchor="start" font-size="10.5" fill="#000000" >Precision:</text>
<rect x="883" y="452" width="189" height="14.5" fill="#ffffff" />
<rect x="883.5" y="452.5" width="188" height="13.5" fill="none" stroke="#0078d7" stroke-width="1"/>
<line x1="886" y1="455" x2="886" y2="464" stroke="#000000" stroke-width="1" />
<rect x="883" y="471.4" width="52" height="15.6" fill="#ffffff" />
<polyline points="883.5,487 883.5,471.9 934.5,471.9 934.5,487" fill="none" stroke="#7a7a7a" stroke-width="1" />
<text class="s" transform="translate(887,482.33) scale(0.8,1)" text-anchor="start" font-size="10.5" fill="#000000" >-</text>
<text class="s" transform="translate(952.5,480.83) scale(0.8,1)" text-anchor="start" font-size="10.5" fill="#000000" >Id:</text>
<rect x="970" y="471.4" width="102" height="15.6" fill="#ffffff" />
<polyline points="970.5,487 970.5,471.9 1071.5,471.9 1071.5,487" fill="none" stroke="#7a7a7a" stroke-width="1" />
<rect x="883" y="489.7" width="189" height="14.3" fill="#ffffff" />
<rect x="883.5" y="490.2" width="188" height="13.3" fill="none" stroke="#7a7a7a" stroke-width="1"/>
<text class="s" transform="translate(887,500.61) scale(0.76,1)" text-anchor="start" font-size="11" fill="#000000" >Drivers Wish2</text>
<rect x="883" y="511.6" width="52" height="14.9" fill="#ffffff" />
<rect x="883.5" y="512.1" width="51" height="13.9" fill="none" stroke="#7a7a7a" stroke-width="1"/>
<text class="s" transform="translate(886.5,522.14) scale(0.8,1)" text-anchor="start" font-size="10" fill="#000000" >6D20E</text>
<rect x="941" y="513.5" width="88.5" height="12.5" fill="#e1e1e1" />
<rect x="941.5" y="514" width="87.5" height="11.5" fill="none" stroke="#adadad" stroke-width="1"/>
<text class="s" transform="translate(945,523.33) scale(0.78,1)" text-anchor="start" font-size="10.5" fill="#000000" >From hexdumpcursor</text>
<rect x="883" y="530.2" width="52" height="15.8" fill="#ffffff" />
<polyline points="883.5,546 883.5,530.7 934.5,530.7 934.5,546" fill="none" stroke="#7a7a7a" stroke-width="1" />
<text class="s" transform="translate(886.5,541.64) scale(0.8,1)" text-anchor="start" font-size="10" fill="#000000" >8</text>
<text class="s" transform="translate(941.5,540.64) scale(0.8,1)" text-anchor="start" font-size="10" fill="#000000" >x</text>
<rect x="953" y="530.2" width="49" height="15.8" fill="#ffffff" />
<polyline points="953.5,546 953.5,530.7 1001.5,530.7 1001.5,546" fill="none" stroke="#7a7a7a" stroke-width="1" />
<text class="s" transform="translate(956.5,541.64) scale(0.8,1)" text-anchor="start" font-size="10" fill="#000000" >16</text>
<rect x="883" y="553.4" width="189" height="16.1" fill="#e1e1e1" />
<rect x="883.5" y="553.9" width="188" height="15.1" fill="none" stroke="#adadad" stroke-width="1"/>
<text class="s" transform="translate(886.5,565.28) scale(0.8,1)" text-anchor="start" font-size="10.5" fill="#000000" >16 Bit (LoHi)</text>
<polyline points="1059.5,559.45 1063.5,563.45 1067.5,559.45" fill="none" stroke="#404040" stroke-width="1" shape-rendering="geometricPrecision"/>
<rect x="883" y="573.2" width="189" height="16.8" fill="#e1e1e1" />
<polyline points="883.5,590 883.5,573.7 1071.5,573.7 1071.5,590" fill="none" stroke="#adadad" stroke-width="1" />
<text class="s" transform="translate(886.5,585.43) scale(0.8,1)" text-anchor="start" font-size="10.5" fill="#000000" >Decimal        (Base 10 System)</text>
<polyline points="1059.5,579.6 1063.5,583.6 1067.5,579.6" fill="none" stroke="#404040" stroke-width="1" shape-rendering="geometricPrecision"/>
<rect x="883.5" y="596" width="10" height="9.5" fill="#ffffff" stroke="#333333" stroke-width="1"/>
<text class="s" transform="translate(897,604.33) scale(0.8,1)" text-anchor="start" font-size="10.5" fill="#000000" >Sign</text>
<rect x="973.5" y="596" width="10" height="9.5" fill="#ffffff" stroke="#333333" stroke-width="1"/>
<text class="s" transform="translate(987,604.33) scale(0.8,1)" text-anchor="start" font-size="10.5" fill="#000000" >Difference</text>
<polyline points="883.5,612 883.5,621.5 893.5,621.5" fill="none" stroke="#333333" stroke-width="1" />
<text class="s" transform="translate(897,620.33) scale(0.8,1)" text-anchor="start" font-size="10.5" fill="#000000" >Original values</text>
<polyline points="973.5,612 973.5,621.5 983.5,621.5 983.5,612" fill="none" stroke="#333333" stroke-width="1" />
<text class="s" transform="translate(987,620.33) scale(0.8,1)" text-anchor="start" font-size="10.5" fill="#000000" >Percent</text>
<rect x="883" y="626.6" width="189" height="15.4" fill="#e1e1e1" />
<rect x="883.5" y="627.1" width="188" height="14.4" fill="none" stroke="#adadad" stroke-width="1"/>
<text class="s" transform="translate(886.5,638.13) scale(0.8,1)" text-anchor="start" font-size="10.5" fill="#000000" >Twodimensional</text>
<polyline points="1059.5,632.3 1063.5,636.3 1067.5,632.3" fill="none" stroke="#404040" stroke-width="1" shape-rendering="geometricPrecision"/>
<rect x="883" y="644.5" width="189" height="17" fill="#e1e1e1" />
<polyline points="883.5,661.5 883.5,645 1071.5,645 1071.5,661.5" fill="none" stroke="#adadad" stroke-width="1" />
<text class="s" transform="translate(886.5,656.83) scale(0.8,1)" text-anchor="start" font-size="10.5" fill="#000000" >Bar display</text>
<polyline points="1059.5,651 1063.5,655 1067.5,651" fill="none" stroke="#404040" stroke-width="1" shape-rendering="geometricPrecision"/>
<rect x="883" y="664.2" width="52" height="14.3" fill="#ffffff" />
<rect x="883.5" y="664.7" width="51" height="13.3" fill="none" stroke="#7a7a7a" stroke-width="1"/>
<text class="s" transform="translate(886.5,675.14) scale(0.8,1)" text-anchor="start" font-size="10" fill="#000000" >0</text>
<rect x="953" y="664.2" width="49" height="14.3" fill="#ffffff" />
<rect x="953.5" y="664.7" width="48" height="13.3" fill="none" stroke="#7a7a7a" stroke-width="1"/>
<text class="s" transform="translate(956.5,675.14) scale(0.8,1)" text-anchor="start" font-size="10" fill="#000000" >70</text>
<rect x="1006.5" y="666.8" width="20.5" height="11.2" fill="#e1e1e1" />
<rect x="1007" y="667.3" width="19.5" height="10.2" fill="none" stroke="#adadad" stroke-width="1"/>
<text class="s" transform="translate(1009,675.96) scale(0.75,1)" text-anchor="start" font-size="9.5" fill="#000000" >Auto</text>
<rect x="796.5" y="692" width="10" height="9.5" fill="#ffffff" stroke="#333333" stroke-width="1"/>
<polyline points="798.5,696.5 800.5,699 804.5,693.5" fill="none" stroke="#000000" stroke-width="1" shape-rendering="geometricPrecision"/>
<text class="s" transform="translate(810,701.33) scale(0.8,1)" text-anchor="start" font-size="10.5" fill="#000000" >Factor, offset:</text>
<rect x="796.5" y="705" width="10" height="9.5" fill="#ffffff" stroke="#333333" stroke-width="1"/>
<text class="s" transform="translate(810,714.23) scale(0.8,1)" text-anchor="start" font-size="10.5" fill="#000000" >Reciprocal:</text>
<text class="s" transform="translate(885.5,707.16) scale(0.8,1)" text-anchor="start" font-size="9.5" fill="#000000" >Value=</text>
<rect x="916" y="703.2" width="92" height="1.6" fill="#404040" />
<text class="s" transform="translate(921,696.83) scale(0.8,1)" text-anchor="start" font-size="10.5" fill="#000000" >0,010000</text>
<line x1="969.5" y1="687" x2="969.5" y2="700" stroke="#000000" stroke-width="1" />
<text class="s" transform="translate(972,696.33) scale(0.8,1)" text-anchor="start" font-size="10.5" fill="#000000" >* Eprom</text>
<text class="s" transform="translate(970.5,719.25) scale(0.8,1)" text-anchor="start" font-size="10" fill="#000000" >1</text>
<text class="s" transform="translate(1010.5,708.14) scale(0.9,1)" text-anchor="start" font-size="10" fill="#000000" >+</text>
<rect x="1021" y="699.3" width="50" height="15.7" fill="#ffffff" />
<polyline points="1021.5,715 1021.5,699.8 1070.5,699.8 1070.5,715" fill="none" stroke="#7a7a7a" stroke-width="1" />
<text class="s" transform="translate(1023.5,710.33) scale(0.78,1)" text-anchor="start" font-size="10.5" fill="#000000" >0,000000</text>
<rect x="883" y="725" width="189" height="16" fill="#e1e1e1" />
<rect x="883.5" y="725.5" width="188" height="15" fill="none" stroke="#adadad" stroke-width="1"/>
<text class="s" transform="translate(886.5,736.83) scale(0.8,1)" text-anchor="start" font-size="10.5" fill="#000000" >(none)</text>
<polyline points="1059.5,731 1063.5,735 1067.5,731" fill="none" stroke="#404040" stroke-width="1" shape-rendering="geometricPrecision"/>
<rect x="883" y="756" width="52" height="16" fill="#ffffff" />
<rect x="883.5" y="756.5" width="51" height="15" fill="none" stroke="#7a7a7a" stroke-width="1"/>
<text class="s" transform="translate(886.5,767.64) scale(0.8,1)" text-anchor="start" font-size="10" fill="#000000" >0</text>
<rect x="1003" y="748.3" width="21.5" height="9.2" fill="#e1e1e1" />
<rect x="1003.5" y="748.8" width="20.5" height="8.2" fill="none" stroke="#adadad" stroke-width="1"/>
<text class="s" transform="translate(1013.75,756.46) scale(0.8,1)" text-anchor="middle" font-size="9.5" fill="#000000" >Bar</text>
<rect x="1026" y="748.3" width="21.5" height="9.2" fill="#e1e1e1" />
<rect x="1026.5" y="748.8" width="20.5" height="8.2" fill="none" stroke="#adadad" stroke-width="1"/>
<text class="s" transform="translate(1036.75,756.46) scale(0.8,1)" text-anchor="middle" font-size="9.5" fill="#000000" >°C</text>
<rect x="1049.5" y="748.3" width="21.5" height="9.2" fill="#e1e1e1" />
<rect x="1050" y="748.8" width="20.5" height="8.2" fill="none" stroke="#adadad" stroke-width="1"/>
<text class="s" transform="translate(1060.25,756.46) scale(0.8,1)" text-anchor="middle" font-size="9.5" fill="#000000" >|</text>
<rect x="1003" y="761" width="21.5" height="10" fill="#e1e1e1" />
<rect x="1003.5" y="761.5" width="20.5" height="9" fill="none" stroke="#adadad" stroke-width="1"/>
<text class="s" transform="translate(1013.75,769.46) scale(0.8,1)" text-anchor="middle" font-size="9.5" fill="#000000" >%</text>
<rect x="1026" y="761" width="21.5" height="10" fill="#e1e1e1" />
<rect x="1026.5" y="761.5" width="20.5" height="9" fill="none" stroke="#adadad" stroke-width="1"/>
<text class="s" transform="translate(1036.75,769.46) scale(0.8,1)" text-anchor="middle" font-size="9.5" fill="#000000" >f(x)</text>
<rect x="1049.5" y="761" width="21.5" height="10" fill="#e1e1e1" />
<rect x="1050" y="761.5" width="20.5" height="9" fill="none" stroke="#adadad" stroke-width="1"/>
<text class="s" transform="translate(1060.25,769.46) scale(0.8,1)" text-anchor="middle" font-size="9.5" fill="#000000" >▼</text>
<rect x="882.5" y="790.3" width="62" height="16.2" fill="#e1e1e1" />
<rect x="883" y="790.8" width="61" height="15.2" fill="none" stroke="#0078d7" stroke-width="1"/>
<rect x="884" y="791.8" width="59" height="13.5" fill="none" stroke="#0078d7" stroke-width="1"/>
<text class="s" transform="translate(913.5,802.33) scale(0.8,1)" text-anchor="middle" font-size="10.5" fill="#000000" >OK</text>
<rect x="952" y="790.3" width="61.5" height="16.2" fill="#e1e1e1" />
<rect x="952.5" y="790.8" width="60.5" height="15.2" fill="none" stroke="#adadad" stroke-width="1"/>
<text class="s" transform="translate(982.75,802.33) scale(0.8,1)" text-anchor="middle" font-size="10.5" fill="#000000" >Cancel</text>
<rect x="1020" y="790.3" width="63" height="16.2" fill="#e1e1e1" />
<rect x="1020.5" y="790.8" width="62" height="15.2" fill="none" stroke="#adadad" stroke-width="1"/>
<text class="s" transform="translate(1051.5,802.33) scale(0.8,1)" text-anchor="middle" font-size="10.5" fill="#000000" >Help</text>
<rect x="778" y="806.5" width="425" height="7" fill="#000000" />
</svg>

</div></body></html>
